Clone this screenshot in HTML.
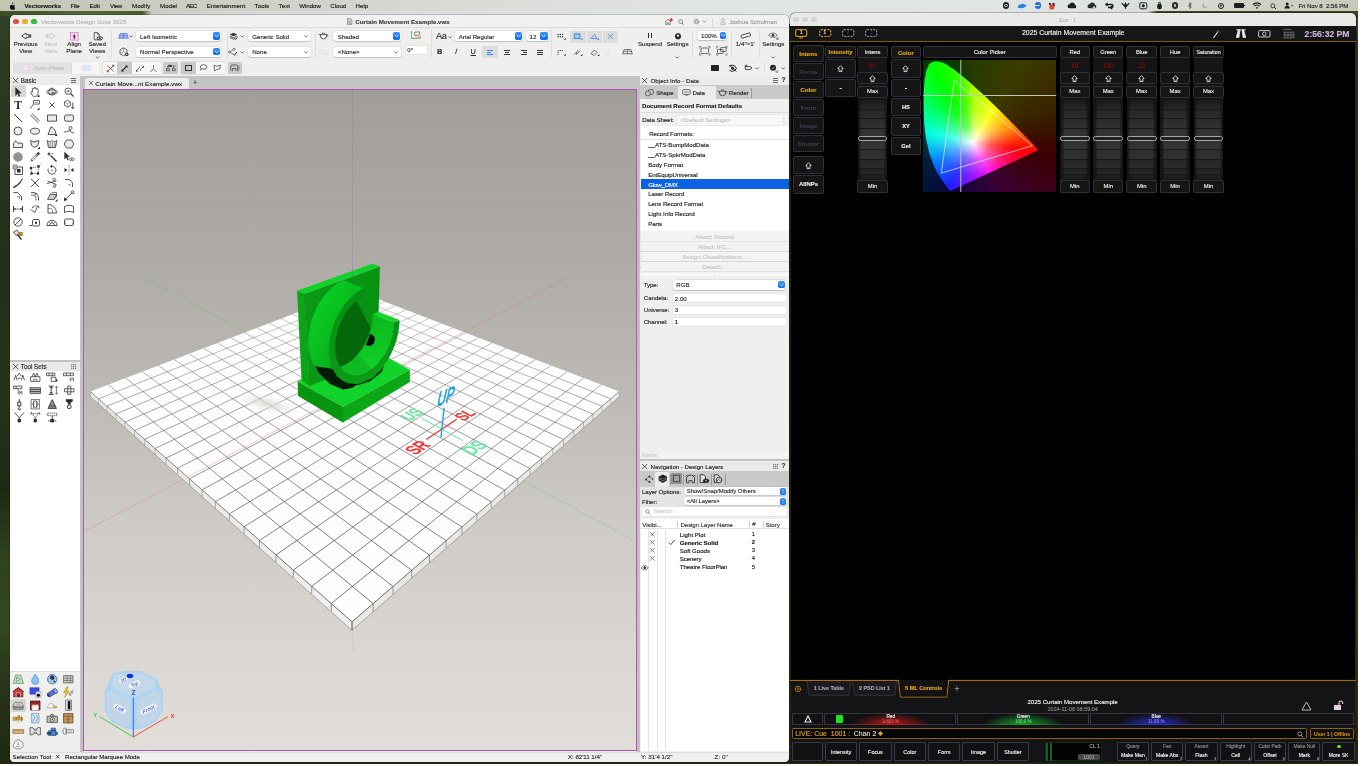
<!DOCTYPE html>
<html><head><meta charset="utf-8"><title>Vectorworks + Eos</title>
<style>
html,body{margin:0;padding:0;background:#fff;}
body{width:1362px;height:766px;overflow:hidden;font-family:"Liberation Sans",sans-serif;}
#root{will-change:transform;transform:translateZ(0);position:absolute;left:0;top:0;width:1358px;height:764px;overflow:hidden;background:#3a4524;}
#root div,#root svg{position:absolute;box-sizing:border-box;}
#root svg{overflow:visible;}
.t{white-space:nowrap;-webkit-text-stroke:.13px currentColor;}
#wall{left:0;top:0;width:1358px;height:764px;
 background:linear-gradient(180deg,#33422a 0,#2d3a21 8%,#283520 20%,#222e18 35%,#26331a 50%,#1f2a14 64%,#2f421d 73%,#34481f 82%,#27331a 90%,#20290f 100%);}
.sel{background:#fff;border-radius:2.4px;box-shadow:0 0 0 .4px rgba(0,0,0,.08),0 .4px .8px rgba(0,0,0,.16);}
.blu{background:linear-gradient(#3a8ffb,#0b6df2);border-radius:1.8px;}

</style></head>
<body>
<div id="root">
<div id="wall"></div>
<div style="left:0.00px;top:0.00px;width:1358.00px;height:11.20px;background:linear-gradient(90deg,#c3c8b6 0,#c9ccbf 12%,#d9dbd6 35%,#e2e6e6 55%,#dfe3e3 80%,#cfd3c6 92%,#c6caba 100%);"></div>
<svg style="left:9.00px;top:1.60px;" width="7" height="8" viewBox="0 0 7 8"><path d="M4.9 2.1c.5-.6.4-1.3.4-1.6-.5 0-1.1.3-1.4.7-.3.4-.5 1-.4 1.5.5 0 1-.2 1.4-.6zM6.5 5.9c0-1 .8-1.5.9-1.5-.5-.7-1.200-.8-1.500-.8-.6-.1-1.200.4-1.500.4s-.8-.4-1.400-.4C2.300 3.600 1.600 4 1.300 4.600c-.7 1.200-.2 3 .5 4 .3.500.7 1 1.300 1 .5 0 .7-.3 1.300-.3s.8.300 1.300.300 1-.5 1.300-1c.4-.6.500-1.100.6-1.200-.1 0-1.100-.4-1.100-1.500z" fill="#111" transform="scale(.82)"/></svg>
<div class="t" style="font-size:6.1px;line-height:7.32px;color:#111;font-weight:bold;left:24.60px;top:1.94px;letter-spacing:0.022px;">Vectorworks</div>
<div class="t" style="font-size:6.15px;line-height:7.38px;color:#151515;left:70.60px;top:1.91px;letter-spacing:-0.270px;">File</div>
<div class="t" style="font-size:6.15px;line-height:7.38px;color:#151515;left:89.50px;top:1.91px;letter-spacing:-0.032px;">Edit</div>
<div class="t" style="font-size:6.15px;line-height:7.38px;color:#151515;left:110.00px;top:1.91px;letter-spacing:-0.340px;">View</div>
<div class="t" style="font-size:6.15px;line-height:7.38px;color:#151515;left:132.00px;top:1.91px;letter-spacing:0.037px;">Modify</div>
<div class="t" style="font-size:6.15px;line-height:7.38px;color:#151515;left:160.00px;top:1.91px;letter-spacing:0.063px;">Model</div>
<div class="t" style="font-size:6.15px;line-height:7.38px;color:#151515;left:186.00px;top:1.91px;letter-spacing:-0.723px;">AEC</div>
<div class="t" style="font-size:6.15px;line-height:7.38px;color:#151515;left:206.70px;top:1.91px;letter-spacing:0.018px;">Entertainment</div>
<div class="t" style="font-size:6.15px;line-height:7.38px;color:#151515;left:254.60px;top:1.91px;letter-spacing:0.061px;">Tools</div>
<div class="t" style="font-size:6.15px;line-height:7.38px;color:#151515;left:278.60px;top:1.91px;letter-spacing:0.040px;">Text</div>
<div class="t" style="font-size:6.15px;line-height:7.38px;color:#151515;left:299.20px;top:1.91px;letter-spacing:-0.015px;">Window</div>
<div class="t" style="font-size:6.15px;line-height:7.38px;color:#151515;left:330.30px;top:1.91px;letter-spacing:-0.042px;">Cloud</div>
<div class="t" style="font-size:6.15px;line-height:7.38px;color:#151515;left:355.60px;top:1.91px;letter-spacing:-0.016px;">Help</div>
<div class="t" style="font-size:6.15px;line-height:7.38px;color:#222;left:1298.40px;top:1.91px;white-space:pre;letter-spacing:-0.074px;">Fri Nov 8  2:56 PM</div>
<div style="left:0.00px;top:11.20px;width:1358.00px;height:5.00px;background:linear-gradient(90deg,#3e4d25 0,#55683a 6%,#4a5c2c 10.5%,#c9ccc6 11.2%,#d9dcdb 20%,#dfe4e6 50%,#d8dcdc 84.5%,#3c4420 85.2%,#3a401c 100%);"></div>
<div style="left:160.00px;top:16.00px;width:980.00px;height:8.00px;background:linear-gradient(90deg,#d9dcdb,#dfe4e6 40%,#d8dcdc);"></div>
<div style="left:1002.80px;top:2.40px;width:6.40px;height:6.40px;background:#1d1d1d;border-radius:50%;"></div>
<div style="left:1004.40px;top:4.00px;width:3.20px;height:3.20px;border:.8px solid #ddd;border-radius:50%;"></div>
<svg style="left:1017.00px;top:2.50px;" width="10" height="6" viewBox="0 0 10 6"><path d="M.5 4.200C2 .5 6.500 0 9.500 2.500 8 5.500 3 6 .5 4.200z" fill="#1687e8"/></svg>
<div style="left:1034.50px;top:2.40px;width:6.40px;height:6.40px;background:#1f6fe0;border-radius:50%;"></div>
<div style="left:1035.20px;top:4.90px;width:5.00px;height:1.40px;background:#dbe8ff;border-radius:1px;"></div>
<svg style="left:1048.00px;top:1.80px;" width="8" height="8" viewBox="0 0 8 8"><circle cx="2" cy="2" r="1.200" fill="#333"/><circle cx="5.500" cy="2" r="1.200" fill="#333"/><circle cx="3.800" cy="5" r="2.600" fill="#e8482c"/><circle cx="5.800" cy="3.200" r="1" fill="#333"/></svg>
<svg style="left:1067.00px;top:2.40px;" width="10" height="7" viewBox="0 0 10 7"><path d="M2.400 6.300a2 2 0 0 1 .2-4A2.800 2.800 0 0 1 8 2.800a1.800 1.800 0 0 1-.2 3.500z" fill="#1d1d1d"/></svg>
<svg style="left:1087.00px;top:2.40px;" width="10" height="7" viewBox="0 0 10 7"><path d="M2.400 6.300a2 2 0 0 1 .2-4A2.800 2.800 0 0 1 8 2.800a1.800 1.800 0 0 1-.2 3.500z" fill="#2a2a2a"/><circle cx="7" cy="5.500" r="1.300" fill="#c9ccc6"/></svg>
<svg style="left:1105.00px;top:2.20px;" width="9" height="7" viewBox="0 0 9 7"><path d="M1 2.500h5.500a1.500 1.500 0 0 1 0 3H3M2.500 1l-1.500 1.500 1.500 1.500M6 4l1.500 1.500L6 7" stroke="#1d1d1d" stroke-width="1.300" fill="none"/></svg>
<svg style="left:1120.50px;top:2.20px;" width="9" height="7" viewBox="0 0 9 7"><path d="M.8 1.200l2.500 2.800L4.500 1.500 5.700 4 8.200 1.200M4.500 1.500V6.800" stroke="#1d1d1d" stroke-width="1.200" fill="none"/></svg>
<svg style="left:1138.50px;top:2.00px;" width="9" height="8" viewBox="0 0 9 8"><rect x=".8" y=".8" width="7" height="6" rx="1.200" stroke="#1d1d1d" stroke-width="1" fill="none"/><circle cx="4.300" cy="3.800" r="1.500" fill="#1d1d1d"/></svg>
<svg style="left:1156.00px;top:1.80px;" width="7" height="8" viewBox="0 0 7 8"><rect x="1.200" y="1.800" width="4.600" height="5.400" rx="2" fill="#1d1d1d"/><path d="M2.500 1.800V.6h2v1.200" stroke="#1d1d1d" fill="none" stroke-width=".8"/></svg>
<div style="left:1171.80px;top:2.40px;width:6.40px;height:6.40px;background:#2a2a2a;border-radius:50%;"></div>
<div style="left:1173.60px;top:4.20px;width:2.80px;height:2.80px;background:#c9ccc6;border-radius:50%;"></div>
<svg style="left:1187.50px;top:2.20px;" width="4" height="7" viewBox="0 0 4 7"><path d="M.5 2l2.800 3L2 6.500V.5L3.300 2 .5 5" stroke="#1d1d1d" stroke-width=".6" fill="none"/></svg>
<svg style="left:1202.00px;top:2.40px;" width="6" height="6" viewBox="0 0 6 6"><path d="M4.500 4.800A2.600 2.600 0 0 1 2 1a2.700 2.700 0 1 0 3.500 3.300z" fill="#a9ada0"/></svg>
<div style="left:1217.90px;top:2.50px;width:6.20px;height:6.20px;border:1px solid #1d1d1d;border-radius:50%;"></div>
<svg style="left:1219.60px;top:3.80px;" width="3" height="3.4" viewBox="0 0 3 3.4"><path d="M.4.300L2.600 1.700.4 3.100z" fill="#1d1d1d"/></svg>
<div style="left:1233.60px;top:3.40px;width:10.00px;height:4.60px;background:#1d1d1d;border-radius:1.300px;"></div>
<div style="left:1243.90px;top:4.90px;width:0.80px;height:1.60px;background:#1d1d1d;"></div>
<svg style="left:1252.00px;top:2.30px;" width="10" height="7" viewBox="0 0 10 7"><path d="M.8 2.600a6 6 0 0 1 8.400 0M2.300 4.200a3.800 3.800 0 0 1 5.400 0" stroke="#1d1d1d" stroke-width="1.100" fill="none"/><circle cx="5" cy="5.800" r=".9" fill="#1d1d1d"/></svg>
<svg style="left:1269.50px;top:2.50px;" width="7" height="7" viewBox="0 0 7 7"><circle cx="2.800" cy="2.800" r="2" stroke="#1d1d1d" stroke-width=".8" fill="none"/><path d="M4.300 4.300L6 6" stroke="#1d1d1d" stroke-width=".9"/></svg>
<svg style="left:1283.50px;top:2.20px;" width="10" height="7" viewBox="0 0 10 7"><circle cx="3.200" cy="1.900" r="1.500" fill="#1d1d1d"/><path d="M.6 6.400a2.600 2.600 0 0 1 5.200 0z" fill="#1d1d1d"/><path d="M7 3.200h2.400L8.200 4.600z" fill="#1d1d1d"/></svg>
<div id="vw" style="left:10.2px;top:15.3px;width:778.8px;height:746.7px;border-radius:5px 5px 4.500px 4.500px;overflow:hidden;background:#efefed;box-shadow:0 0 0 .5px rgba(0,0,0,.35);"></div>
<div style="left:10.20px;top:15.30px;width:778.80px;height:12.90px;background:#f0f0ee;border-radius:5px 5px 0 0;border-bottom:.6px solid #dcdcda;"></div>
<div style="left:13.20px;top:18.50px;width:5.80px;height:5.80px;background:#f2544d;border-radius:50%;box-shadow:0 0 0 .3px rgba(0,0,0,.18) inset;"></div>
<div style="left:22.30px;top:18.50px;width:5.80px;height:5.80px;background:#f6b42e;border-radius:50%;box-shadow:0 0 0 .3px rgba(0,0,0,.18) inset;"></div>
<div style="left:31.40px;top:18.50px;width:5.80px;height:5.80px;background:#2dc43e;border-radius:50%;box-shadow:0 0 0 .3px rgba(0,0,0,.18) inset;"></div>
<div style="left:15.50px;top:20.80px;width:1.30px;height:1.30px;background:#7a1410;border-radius:50%;"></div>
<div class="t" style="font-size:6.15px;line-height:7.38px;color:#b4b4b2;left:40.90px;top:17.81px;letter-spacing:0.005px;">Vectorworks Design Suite 2025</div>
<svg style="left:346.60px;top:17.60px;" width="5.5" height="7" viewBox="0 0 5.5 7"><path d="M.5.5h3l1.500 1.500v4.500h-4.500z" fill="#cfcfcf" stroke="#777" stroke-width=".6"/><path d="M1.300 3h2.600M1.300 4.200h2.600M1.300 5.400h2.600" stroke="#777" stroke-width=".4"/></svg>
<div class="t" style="font-size:6.15px;line-height:7.38px;color:#2b2b2b;font-weight:bold;left:355.30px;top:17.81px;opacity:.92;letter-spacing:0.023px;">Curtain Movement Example.vwx</div>
<svg style="left:663.50px;top:17.80px;" width="9" height="7.5" viewBox="0 0 9 7.5"><path d="M1 4L4 1.300 7 4M1.800 3.500V6.500H3.300V4.800H4.700V6.500H6.200V3.500" stroke="#666" stroke-width=".7" fill="none"/><circle cx="7.200" cy="1.700" r="1.500" fill="#e8252a"/></svg>
<svg style="left:678.00px;top:18.50px;" width="7" height="7" viewBox="0 0 7 7"><circle cx="2.600" cy="2.600" r="1.900" stroke="#666" stroke-width=".7" fill="none"/><path d="M4 4L5.800 5.800" stroke="#666" stroke-width=".8"/></svg>
<svg style="left:692.50px;top:18.00px;" width="7" height="7" viewBox="0 0 7 7"><circle cx="3.500" cy="3.500" r="2.300" stroke="#666" stroke-width="1" fill="none" stroke-dasharray="1.200 .6"/><circle cx="3.500" cy="3.500" r="1" stroke="#666" stroke-width=".6" fill="none"/></svg>
<svg style="left:701.50px;top:20.30px;" width="5" height="3" viewBox="0 0 5 3"><path d="M.8.500L2.500 2.200 4.200.5" stroke="#666" stroke-width=".7" fill="none"/></svg>
<div style="left:712.30px;top:17.50px;width:0.50px;height:9.00px;background:#dcdcda;"></div>
<svg style="left:719.80px;top:18.00px;" width="6" height="7" viewBox="0 0 6 7"><circle cx="3" cy="1.900" r="1.400" stroke="#999" stroke-width=".6" fill="none"/><path d="M.6 6.300a2.400 2.400 0 0 1 4.800 0z" stroke="#999" stroke-width=".6" fill="none"/></svg>
<div class="t" style="font-size:6.15px;line-height:7.38px;color:#9c9c9a;left:729.00px;top:17.81px;letter-spacing:-0.063px;">Joshua Schulman</div>
<svg style="left:19.50px;top:31.70px;" width="12" height="8" viewBox="0 0 12 8"><path d="M6 1L1.800 4 6 7V5.300H9V2.700H6zM9.200 2.700h.7v2.600h-.7M10.300 2.700h.5v2.600h-.5" stroke="#2a2a2a" stroke-width=".8" fill="none" stroke-linejoin="round"/></svg>
<div class="t" style="font-size:6.15px;line-height:7.38px;color:#2a2a2a;left:-4.40px;width:60px;text-align:center;top:40.01px;">Previous</div>
<div class="t" style="font-size:6.15px;line-height:7.38px;color:#2a2a2a;left:-4.40px;width:60px;text-align:center;top:47.26px;">View</div>
<svg style="left:45.00px;top:31.70px;" width="12" height="8" viewBox="0 0 12 8"><path d="M6 1L10.200 4 6 7V5.300H3V2.700H6zM2.800 2.700h-.7v2.600h.7M1.700 2.700h-.5v2.600h.5" stroke="#c4c4c2" stroke-width=".8" fill="none" stroke-linejoin="round"/></svg>
<div class="t" style="font-size:6.15px;line-height:7.38px;color:#c4c4c2;left:21.00px;width:60px;text-align:center;top:40.01px;">Next</div>
<div class="t" style="font-size:6.15px;line-height:7.38px;color:#c4c4c2;left:21.00px;width:60px;text-align:center;top:47.26px;">View</div>
<svg style="left:70.00px;top:31.80px;" width="9" height="9" viewBox="0 0 9 9"><rect x=".5" y=".5" width="7.600" height="7.600" fill="#fbe3f5" stroke="#e36bd0" stroke-width=".7"/><path d="M4.300.5v7.600M.5 3h7.600" stroke="#e36bd0" stroke-width=".5"/><path d="M4.300 2.200L2.900 5.400h2.800z" fill="#222"/><path d="M4.300 5v2.300" stroke="#222" stroke-width=".7"/></svg>
<div class="t" style="font-size:6.15px;line-height:7.38px;color:#2a2a2a;left:44.20px;width:60px;text-align:center;top:40.01px;">Align</div>
<div class="t" style="font-size:6.15px;line-height:7.38px;color:#2a2a2a;left:44.20px;width:60px;text-align:center;top:47.26px;">Plane</div>
<svg style="left:92.50px;top:31.80px;" width="10" height="9" viewBox="0 0 10 9"><path d="M1.200.6h3.300l1.700 1.700v5.500H1.200z" fill="none" stroke="#2a2a2a" stroke-width=".7"/><path d="M4.500.6v1.700h1.700" fill="none" stroke="#2a2a2a" stroke-width=".6"/><ellipse cx="6.800" cy="6.300" rx="2.700" ry="1.700" fill="#efefed" stroke="#2a2a2a" stroke-width=".9"/><circle cx="6.800" cy="6.300" r="1" fill="#2a2a2a"/></svg>
<div class="t" style="font-size:6.15px;line-height:7.38px;color:#2a2a2a;left:67.20px;width:60px;text-align:center;top:40.01px;">Saved</div>
<div class="t" style="font-size:6.15px;line-height:7.38px;color:#2a2a2a;left:67.20px;width:60px;text-align:center;top:47.26px;">Views</div>
<svg style="left:94.70px;top:55.80px;" width="5" height="3" viewBox="0 0 5 3"><path d="M.8.500L2.500 2.200 4.200.5" stroke="#333" stroke-width=".7" fill="none"/></svg>
<div style="left:111.30px;top:30.00px;width:0.50px;height:28.00px;background:#dededc;"></div>
<svg style="left:117.50px;top:33.00px;" width="11" height="6" viewBox="0 0 11 6"><path d="M2.200.6h6.600L10.400 5.200H.6z" fill="#aab6f5" stroke="#4a62e0" stroke-width=".7"/><path d="M5.500.6v4.600M1.500 2.800h8" stroke="#4a62e0" stroke-width=".5"/></svg>
<svg style="left:129.10px;top:35.40px;" width="4.4" height="3" viewBox="0 0 4.4 3"><path d="M.6.500L2.200 2.100 3.800.5" stroke="#333" stroke-width=".7" fill="none"/></svg>
<div class="sel" style="left:135.60px;top:31.20px;width:85.70px;height:9.80px;"></div>
<div class="t" style="font-size:6.15px;line-height:7.38px;color:#2a2a2a;left:140.10px;top:32.51px;">Left Isometric</div>
<div class="blu" style="left:212.70px;top:32.40px;width:7.40px;height:7.40px;"></div>
<svg style="left:212.70px;top:32.40px;" width="7.4" height="7.4" viewBox="0 0 7.4 7.4"><path d="M2.07 3.11L3.70 4.74 5.33 3.11" stroke="#fff" stroke-width=".9" fill="none" stroke-linecap="round"/></svg>
<svg style="left:119.20px;top:47.20px;" width="11" height="10" viewBox="0 0 11 10"><path d="M4.500.8L8 2.800V6.800L4.500 8.800 1 6.800V2.800z" fill="none" stroke="#333" stroke-width=".7"/><path d="M4.500.8V4.800L1 6.800M4.500 4.800L8 6.800" stroke="#333" stroke-width=".4" fill="none"/><circle cx="7.800" cy="7.400" r="1.700" fill="#333"/><circle cx="7.800" cy="7.400" r=".6" fill="#efefed"/></svg>
<div class="sel" style="left:135.60px;top:46.80px;width:85.70px;height:9.80px;"></div>
<div class="t" style="font-size:6.15px;line-height:7.38px;color:#2a2a2a;left:140.10px;top:48.11px;">Normal Perspective</div>
<div class="blu" style="left:212.70px;top:48.00px;width:7.40px;height:7.40px;"></div>
<svg style="left:212.70px;top:48.00px;" width="7.4" height="7.4" viewBox="0 0 7.4 7.4"><path d="M2.07 3.11L3.70 4.74 5.33 3.11" stroke="#fff" stroke-width=".9" fill="none" stroke-linecap="round"/></svg>
<div style="left:226.50px;top:30.00px;width:0.50px;height:28.00px;background:#dededc;"></div>
<svg style="left:228.60px;top:32.20px;" width="9" height="8" viewBox="0 0 9 8"><path d="M4.500.8L8.200 2.500 4.500 4.200.8 2.500z" fill="#333"/><path d="M.8 4L4.500 5.700 8.200 4M.8 5.500L4.500 7.200 6 6.500" stroke="#333" stroke-width=".8" fill="none"/><path d="M5.500 6l1.200 1.500L8.600 4.800" stroke="#333" stroke-width=".9" fill="none"/></svg>
<svg style="left:240.10px;top:35.40px;" width="4.4" height="3" viewBox="0 0 4.4 3"><path d="M.6.500L2.200 2.100 3.800.5" stroke="#333" stroke-width=".7" fill="none"/></svg>
<div class="sel" style="left:247.70px;top:31.20px;width:63.50px;height:9.80px;"></div>
<div class="t" style="font-size:6.15px;line-height:7.38px;color:#2a2a2a;left:252.20px;top:32.51px;">Generic Solid</div>
<svg style="left:303.80px;top:34.90px;" width="4.4" height="3" viewBox="0 0 4.4 3"><path d="M.6.500L2.200 2.100 3.800.5" stroke="#333" stroke-width=".7" fill="none"/></svg>
<svg style="left:228.00px;top:47.50px;" width="10" height="8" viewBox="0 0 10 8"><circle cx="1.600" cy="4" r="1" fill="none" stroke="#333" stroke-width=".6"/><circle cx="6" cy="1.300" r="1" fill="none" stroke="#333" stroke-width=".6"/><path d="M2.500 3.500L5 1.800M2.500 4.500L5 6" stroke="#333" stroke-width=".6"/><path d="M5.200 5.800l1.300 1.500L8.800 4" stroke="#333" stroke-width="1" fill="none"/></svg>
<svg style="left:240.10px;top:50.90px;" width="4.4" height="3" viewBox="0 0 4.4 3"><path d="M.6.500L2.200 2.100 3.800.5" stroke="#333" stroke-width=".7" fill="none"/></svg>
<div class="sel" style="left:247.70px;top:46.80px;width:63.50px;height:9.80px;"></div>
<div class="t" style="font-size:6.15px;line-height:7.38px;color:#2a2a2a;left:252.20px;top:48.11px;">None</div>
<svg style="left:303.80px;top:50.50px;" width="4.4" height="3" viewBox="0 0 4.4 3"><path d="M.6.500L2.200 2.100 3.800.5" stroke="#333" stroke-width=".7" fill="none"/></svg>
<div style="left:315.20px;top:30.00px;width:0.50px;height:28.00px;background:#dededc;"></div>
<svg style="left:317.50px;top:32.20px;" width="11" height="8" viewBox="0 0 11 8"><path d="M2.500 2.400h6v1.600a3 3 0 0 1-6 0z" fill="none" stroke="#333" stroke-width=".8"/><path d="M2.500 3L.6 2.200M8.500 3c1.800-.8 2 .1 .6 1.700M4 1.300h3" stroke="#333" stroke-width=".7" fill="none"/></svg>
<div class="sel" style="left:333.30px;top:31.20px;width:67.90px;height:9.80px;"></div>
<div class="t" style="font-size:6.15px;line-height:7.38px;color:#2a2a2a;left:337.80px;top:32.51px;">Shaded</div>
<div class="blu" style="left:392.60px;top:32.40px;width:7.40px;height:7.40px;"></div>
<svg style="left:392.60px;top:32.40px;" width="7.4" height="7.4" viewBox="0 0 7.4 7.4"><path d="M2.07 3.11L3.70 4.74 5.33 3.11" stroke="#fff" stroke-width=".9" fill="none" stroke-linecap="round"/></svg>
<svg style="left:317.50px;top:48.50px;" width="11" height="7" viewBox="0 0 11 7"><circle cx="2.600" cy="3.600" r="1.700" fill="none" stroke="#d6d6d4" stroke-width=".6"/><circle cx="6.600" cy="3.600" r="1.700" fill="none" stroke="#d6d6d4" stroke-width=".6"/><path d="M2 1L3.500.4M7.200 1L5.700.4" stroke="#d6d6d4" stroke-width=".5"/><circle cx="9.500" cy="5.600" r="1.100" fill="#d6d6d4"/></svg>
<div class="sel" style="left:333.30px;top:46.80px;width:67.90px;height:9.80px;"></div>
<div class="t" style="font-size:6.15px;line-height:7.38px;color:#2a2a2a;left:337.80px;top:48.11px;">&lt;None&gt;</div>
<svg style="left:393.80px;top:50.50px;" width="4.4" height="3" viewBox="0 0 4.4 3"><path d="M.6.500L2.200 2.100 3.800.5" stroke="#333" stroke-width=".7" fill="none"/></svg>
<svg style="left:410.00px;top:30.50px;" width="12" height="9" viewBox="0 0 12 9"><path d="M1.500 1V7.500H10.500" stroke="#3aa657" stroke-width=".7" fill="none"/><path d="M1.500 7.500L10 6" stroke="#e0392e" stroke-width=".7" stroke-dasharray="1.200 .8"/><rect x="4.600" y="1" width="5" height="3.400" rx=".5" fill="none" stroke="#444" stroke-width=".6" transform="rotate(-8 7 3)"/><circle cx="1.500" cy="1" r=".7" fill="#3aa657"/><circle cx="10.300" cy="6" r=".7" fill="#e0392e"/></svg>
<div style="left:405.60px;top:46.00px;width:21.50px;height:8.30px;background:#fff;box-shadow:0 0 0 .4px rgba(0,0,0,.10);"></div>
<div class="t" style="font-size:6.15px;line-height:7.38px;color:#2a2a2a;left:407.30px;top:46.31px;">0°</div>
<div style="left:430.50px;top:30.00px;width:0.50px;height:28.00px;background:#dededc;"></div>
<div class="t" style="font-size:9.3px;line-height:11.16px;color:#2a2a2a;left:436.00px;top:30.82px;letter-spacing:-.45px;">Aa</div>
<svg style="left:447.60px;top:35.60px;" width="4.4" height="3" viewBox="0 0 4.4 3"><path d="M.6.500L2.200 2.100 3.800.5" stroke="#333" stroke-width=".7" fill="none"/></svg>
<div class="sel" style="left:455.20px;top:31.20px;width:68.10px;height:9.80px;"></div>
<div class="t" style="font-size:6.15px;line-height:7.38px;color:#2a2a2a;left:458.70px;top:32.51px;">Arial Regular</div>
<div class="blu" style="left:514.70px;top:32.40px;width:7.40px;height:7.40px;"></div>
<svg style="left:514.70px;top:32.40px;" width="7.4" height="7.4" viewBox="0 0 7.4 7.4"><path d="M2.07 3.11L3.70 4.74 5.33 3.11" stroke="#fff" stroke-width=".9" fill="none" stroke-linecap="round"/></svg>
<div class="sel" style="left:526.30px;top:31.20px;width:22.50px;height:9.80px;"></div>
<div class="t" style="font-size:6.15px;line-height:7.38px;color:#2a2a2a;left:529.60px;top:32.51px;">12</div>
<div class="blu" style="left:540.20px;top:32.40px;width:7.40px;height:7.40px;"></div>
<svg style="left:540.20px;top:32.40px;" width="7.4" height="7.4" viewBox="0 0 7.4 7.4"><path d="M2.07 3.11L3.70 4.74 5.33 3.11" stroke="#fff" stroke-width=".9" fill="none" stroke-linecap="round"/></svg>
<div class="t" style="font-size:7.4px;line-height:8.88px;color:#2a2a2a;font-weight:bold;left:434.60px;width:10px;text-align:center;top:47.76px;">B</div>
<div class="t" style="font-size:7.4px;line-height:8.88px;color:#2a2a2a;font-style:italic;left:451.20px;width:10px;text-align:center;top:47.76px;transform:skewX(-8deg);">I</div>
<div class="t" style="font-size:7.4px;line-height:8.88px;color:#2a2a2a;left:468.20px;width:10px;text-align:center;top:47.76px;text-decoration:underline;">U</div>
<div style="left:482.20px;top:45.80px;width:16.00px;height:12.20px;background:#dcdcda;border-radius:1.500px;"></div>
<div style="left:487.00px;top:49.60px;width:6.40px;height:0.80px;background:#2f86f6;"></div>
<div style="left:487.00px;top:51.70px;width:4.40px;height:0.80px;background:#2f86f6;"></div>
<div style="left:487.00px;top:53.80px;width:6.40px;height:0.80px;background:#2f86f6;"></div>
<div style="left:503.80px;top:49.60px;width:6.40px;height:0.80px;background:#333;"></div>
<div style="left:505.10px;top:51.70px;width:3.80px;height:0.80px;background:#333;"></div>
<div style="left:503.80px;top:53.80px;width:6.40px;height:0.80px;background:#333;"></div>
<div style="left:520.60px;top:49.60px;width:6.40px;height:0.80px;background:#333;"></div>
<div style="left:522.60px;top:51.70px;width:4.40px;height:0.80px;background:#333;"></div>
<div style="left:520.60px;top:53.80px;width:6.40px;height:0.80px;background:#333;"></div>
<div style="left:537.00px;top:49.60px;width:6.40px;height:0.80px;background:#333;"></div>
<div style="left:537.00px;top:51.70px;width:6.40px;height:0.80px;background:#333;"></div>
<div style="left:537.00px;top:53.80px;width:6.40px;height:0.80px;background:#333;"></div>
<div style="left:550.50px;top:30.00px;width:0.50px;height:28.00px;background:#dededc;"></div>
<div style="left:569.50px;top:30.50px;width:16.30px;height:12.20px;background:#dcdcda;border-radius:1.500px;"></div>
<div style="left:586.80px;top:30.50px;width:15.30px;height:12.20px;background:#dcdcda;border-radius:1.500px;"></div>
<div style="left:603.20px;top:30.50px;width:15.30px;height:12.20px;background:#dcdcda;border-radius:1.500px;"></div>
<svg style="left:556.50px;top:33.00px;" width="10" height="8" viewBox="0 0 10 8"><g fill="#333"><circle cx="1.200" cy="1.500" r=".7"/><circle cx="3.400" cy="1.500" r=".7"/><circle cx="5.600" cy="1.500" r=".7"/><circle cx="1.200" cy="3.700" r=".7"/><circle cx="3.400" cy="3.700" r=".7"/><circle cx="5.600" cy="3.700" r=".7"/><path d="M8.800 4.800v2h-2z"/></g></svg>
<svg style="left:573.00px;top:32.80px;" width="11" height="8" viewBox="0 0 11 8"><rect x="1.300" y="1" width="5.600" height="4.400" fill="none" stroke="#2f86f6" stroke-width=".9"/><path d="M.5 1h7.200M.5 5.400h7.200M3 1v4.400M5.200 1v4.400" stroke="#2f86f6" stroke-width=".5"/><path d="M9.400 5v2h-2z" fill="#2f86f6"/></svg>
<svg style="left:590.00px;top:33.00px;" width="11" height="8" viewBox="0 0 11 8"><path d="M1 5.500h6L4.500 1.500 1 5.500" fill="none" stroke="#2f86f6" stroke-width=".8"/><path d="M9 5v2h-2z" fill="#2f86f6"/></svg>
<svg style="left:607.30px;top:33.20px;" width="8" height="7" viewBox="0 0 8 7"><path d="M1 .8L6 5.800M6 .8L1 5.800" stroke="#2f86f6" stroke-width=".8"/></svg>
<svg style="left:556.50px;top:48.50px;" width="10" height="8" viewBox="0 0 10 8"><path d="M1 6V1.500H6" stroke="#333" stroke-width=".8" fill="none" stroke-dasharray="1.400 .7"/><path d="M8.800 4.800v2h-2z" fill="#333"/></svg>
<svg style="left:572.50px;top:48.50px;" width="11" height="8" viewBox="0 0 11 8"><path d="M1 5.500L3 3.500 4.500 4.500 7 1.500" stroke="#333" stroke-width=".7" fill="none"/><path d="M4.800 1l-1.600 5" stroke="#333" stroke-width=".5"/><path d="M9.400 5v2h-2z" fill="#333"/></svg>
<svg style="left:589.50px;top:48.50px;" width="11" height="8" viewBox="0 0 11 8"><path d="M1 4.500L4.500 1 7 3.500 4 6.500z" fill="none" stroke="#333" stroke-width=".7"/><path d="M9.400 5v2h-2z" fill="#333"/></svg>
<svg style="left:606.00px;top:48.50px;" width="9" height="8" viewBox="0 0 9 8"><path d="M1 4.500L5 1M1 4.500L4 7" stroke="#cfcfcd" stroke-width=".7" fill="none"/></svg>
<svg style="left:621.50px;top:49.20px;" width="12" height="6" viewBox="0 0 12 6"><path d="M2.200.6h6.600L10.400 4.800H.6z" fill="none" stroke="#333" stroke-width=".7"/><path d="M5.500.6v4.200M1.400 2.600h8.200" stroke="#333" stroke-width=".5"/></svg>
<div style="left:647.80px;top:32.80px;width:1.30px;height:5.60px;background:#2a2a2a;"></div>
<div style="left:650.80px;top:32.80px;width:1.30px;height:5.60px;background:#2a2a2a;"></div>
<div class="t" style="font-size:6.15px;line-height:7.38px;color:#2a2a2a;left:620.00px;width:60px;text-align:center;top:40.01px;">Suspend</div>
<svg style="left:673.50px;top:32.20px;" width="8" height="8" viewBox="0 0 8 8"><path d="M4 .6l.9.900 1.200-.3.300 1.200 1.200.4-.4 1.200.9.900-.9.900.4 1.200-1.200.3-.3 1.200-1.200-.3-.9.900-.9-.9-1.200.3-.3-1.200-1.200-.3.300-1.200-.9-.9.900-.9-.3-1.200 1.200-.4.300-1.200 1.200.3z" fill="#2a2a2a" transform="scale(.82) translate(.9 .4)"/><circle cx="4" cy="3.700" r="1.100" fill="#efefed"/></svg>
<div class="t" style="font-size:6.15px;line-height:7.38px;color:#2a2a2a;left:647.50px;width:60px;text-align:center;top:40.01px;">Settings</div>
<svg style="left:675.30px;top:55.90px;" width="4.4" height="3" viewBox="0 0 4.4 3"><path d="M.6.500L2.200 2.100 3.800.5" stroke="#333" stroke-width=".7" fill="none"/></svg>
<div style="left:692.30px;top:30.00px;width:0.50px;height:28.00px;background:#dededc;"></div>
<div class="sel" style="left:696.80px;top:31.00px;width:30.50px;height:8.80px;"></div>
<div class="t" style="font-size:6.15px;line-height:7.38px;color:#2a2a2a;left:701.00px;top:31.81px;">100%</div>
<div class="blu" style="left:719.50px;top:32.10px;width:6.60px;height:6.60px;"></div>
<svg style="left:719.50px;top:32.10px;" width="6.599999999999997" height="6.599999999999997" viewBox="0 0 6.599999999999997 6.599999999999997"><path d="M1.85 2.77L3.30 4.22 4.75 2.77" stroke="#fff" stroke-width=".9" fill="none" stroke-linecap="round"/></svg>
<svg style="left:698.50px;top:45.50px;" width="12" height="10" viewBox="0 0 12 10"><rect x="2" y="2" width="7.600" height="5.600" rx="1" fill="none" stroke="#333" stroke-width=".7"/><path d="M.6 2.400V.6H2.400M9.200.6H11v1.800M11 7.200V9H9.200M2.400 9H.6V7.200" stroke="#333" stroke-width=".6" fill="none"/></svg>
<svg style="left:715.50px;top:45.50px;" width="12" height="10" viewBox="0 0 12 10"><rect x="1.500" y="3.500" width="5.600" height="4" rx=".6" fill="none" stroke="#333" stroke-width=".7"/><rect x="4.500" y="1.600" width="5.600" height="4" rx=".6" fill="none" stroke="#333" stroke-width=".7"/><path d="M.6 2.400V.6H2.400M9.200.6H11v1.800M11 7.200V9H9.200M2.400 9H.6V7.200" stroke="#333" stroke-width=".6" fill="none"/></svg>
<div style="left:731.30px;top:30.00px;width:0.50px;height:28.00px;background:#dededc;"></div>
<svg style="left:739.50px;top:31.80px;" width="12" height="7" viewBox="0 0 12 7"><rect x="1" y="2" width="9.600" height="3" rx=".6" fill="none" stroke="#333" stroke-width=".8" transform="rotate(-17 6 3.500)"/></svg>
<div class="t" style="font-size:6.15px;line-height:7.38px;color:#2a2a2a;left:725.30px;width:40px;text-align:center;top:40.01px;">1/4"=1'</div>
<div style="left:759.30px;top:30.00px;width:0.50px;height:28.00px;background:#dededc;"></div>
<svg style="left:767.50px;top:31.80px;" width="12" height="8" viewBox="0 0 12 8"><path d="M.8 3.200C2.500.4 7.500.4 9.200 3.200 7.500 6 2.500 6 .8 3.200z" fill="none" stroke="#333" stroke-width=".7"/><circle cx="5" cy="3.200" r="1.300" fill="#333"/><path d="M7.500 6.200h3.500M8.500 7.500h2" stroke="#333" stroke-width=".6"/></svg>
<div class="t" style="font-size:6.15px;line-height:7.38px;color:#2a2a2a;left:743.30px;width:60px;text-align:center;top:40.01px;">Settings</div>
<svg style="left:771.10px;top:55.90px;" width="4.4" height="3" viewBox="0 0 4.4 3"><path d="M.6.500L2.200 2.100 3.800.5" stroke="#333" stroke-width=".7" fill="none"/></svg>
<div style="left:12.80px;top:61.80px;width:59.40px;height:12.40px;background:#e2e2e0;border-radius:1.500px 0 0 1.500px;"></div>
<div style="left:72.20px;top:61.80px;width:27.00px;height:12.40px;background:#f5f5f3;border-radius:0 1.500px 1.500px 0;box-shadow:0 0 0 .4px rgba(0,0,0,.06);"></div>
<div style="left:21.80px;top:64.30px;width:7.20px;height:7.20px;background:#f1e6ef;border:.6px solid #eccfe6;"></div>
<div class="t" style="font-size:6.15px;line-height:7.38px;color:#bdbdbb;left:34.30px;top:64.41px;letter-spacing:-0.047px;">Auto-Plane</div>
<svg style="left:80.50px;top:65.30px;" width="11" height="6" viewBox="0 0 11 6"><path d="M2.200.6h6.600L10.400 5.200H.6z" fill="#e4e7fa" stroke="#cdd3f5" stroke-width=".6"/></svg>
<div style="left:102.80px;top:61.80px;width:57.80px;height:12.40px;background:#f7f7f5;border-radius:1.500px;box-shadow:0 0 0 .4px rgba(0,0,0,.13);"></div>
<div style="left:117.30px;top:61.80px;width:14.30px;height:12.40px;background:#c9c9c7;"></div>
<svg style="left:105.50px;top:63.60px;" width="9" height="9" viewBox="0 0 9 9"><path d="M1.500 1.500L7.500 7.500" stroke="#e0302a" stroke-width=".9"/><path d="M7.500 1.500L1.500 7.500" stroke="#333" stroke-width=".8"/><path d="M6 1.200h1.800V3M3 7.800H1.200V6" stroke="#333" stroke-width=".7" fill="none"/></svg>
<svg style="left:120.00px;top:63.60px;" width="9" height="9" viewBox="0 0 9 9"><path d="M2 7L7 2" stroke="#222" stroke-width="1.100"/><path d="M5.200 1.500h2.300v2.300zM3.800 7.500H1.500V5.200z" fill="#222"/></svg>
<svg style="left:134.50px;top:63.60px;" width="10" height="9" viewBox="0 0 10 9"><path d="M1.500 6.500L4.500 3.500M5.500 5.500L8.500 2.500" stroke="#222" stroke-width=".9" stroke-dasharray="1.300 .7"/><path d="M1 5.500v2h2zM9 1.500v2h-2zM3.800 2.800l1.200-.4-.4 1.200zM6.200 6.200l-1.200.4.400-1.200z" fill="#222"/></svg>
<svg style="left:149.00px;top:63.60px;" width="9" height="9" viewBox="0 0 9 9"><path d="M4.500 1V5.200" stroke="#2f86f6" stroke-width=".9"/><path d="M4.500 5.200L1.200 7.600" stroke="#e0302a" stroke-width=".9"/><path d="M4.500 5.200L7.800 7.600" stroke="#30a850" stroke-width=".9"/></svg>
<div style="left:163.40px;top:61.80px;width:14.30px;height:12.40px;background:#c9c9c7;border-radius:1.500px;"></div>
<svg style="left:165.50px;top:64.20px;" width="10" height="8" viewBox="0 0 10 8"><rect x="2.500" y=".8" width="3" height="2" fill="#333"/><rect x=".6" y="4.800" width="2.600" height="2" fill="none" stroke="#333" stroke-width=".6"/><rect x="6.500" y="4.800" width="2.600" height="2" fill="none" stroke="#333" stroke-width=".6"/><path d="M1.800 4.800V2h5.900v2.800M8.800 1v1.500" stroke="#333" stroke-width=".6" fill="none"/></svg>
<div style="left:181.20px;top:61.80px;width:43.80px;height:12.40px;background:#f7f7f5;border-radius:1.500px;box-shadow:0 0 0 .4px rgba(0,0,0,.13);"></div>
<div style="left:181.20px;top:61.80px;width:14.50px;height:12.40px;background:#c9c9c7;border-radius:1.500px 0 0 1.500px;"></div>
<div style="left:184.80px;top:65.20px;width:7.20px;height:5.40px;border:.8px solid #333;"></div>
<svg style="left:198.50px;top:64.30px;" width="9" height="8" viewBox="0 0 9 8"><ellipse cx="4.600" cy="3" rx="3.400" ry="2.300" fill="none" stroke="#333" stroke-width=".7"/><path d="M2.200 4.600L1.200 6.800" stroke="#333" stroke-width=".7"/></svg>
<svg style="left:213.00px;top:64.00px;" width="9" height="8" viewBox="0 0 9 8"><path d="M1 1.500l3 .8 3.500-1.300-.8 4-3 .5L1.500 7z" fill="none" stroke="#333" stroke-width=".7"/></svg>
<div style="left:228.00px;top:61.80px;width:14.30px;height:12.40px;background:#c9c9c7;border-radius:1.500px;"></div>
<svg style="left:230.00px;top:64.20px;" width="10" height="8" viewBox="0 0 10 8"><path d="M.8 7V2.500a1.500 1.500 0 0 1 1.500-1.500h4a1.500 1.500 0 0 1 1.500 1.500V7M2.600 7V4.500h3.400V7" fill="none" stroke="#444" stroke-width=".8"/><path d="M9 1.500v5" stroke="#444" stroke-width=".7" stroke-dasharray="1 .7"/></svg>
<div style="left:710.80px;top:65.30px;width:8.00px;height:5.40px;background:#222;border-radius:.5px;"></div>
<svg style="left:727.50px;top:64.00px;" width="10" height="8" viewBox="0 0 10 8"><path d="M1.500 2a4 3 0 1 1 0 4.500" fill="none" stroke="#222" stroke-width="1"/><circle cx="4.600" cy="4.200" r="1.500" fill="#222"/><path d="M1 1l7.500 6.500" stroke="#222" stroke-width=".9"/></svg>
<svg style="left:744.00px;top:64.00px;" width="10" height="8" viewBox="0 0 10 8"><path d="M1 2.500h5l2 1.500-2 1.500h-4.500z" fill="none" stroke="#222" stroke-width=".8"/><path d="M2.200 1v2M1 1.200h2.400" stroke="#222" stroke-width=".7"/></svg>
<svg style="left:755.10px;top:67.40px;" width="4.4" height="3" viewBox="0 0 4.4 3"><path d="M.6.500L2.200 2.100 3.800.5" stroke="#333" stroke-width=".7" fill="none"/></svg>
<div style="left:764.20px;top:62.00px;width:0.50px;height:12.00px;background:#dededc;"></div>
<svg style="left:768.50px;top:63.80px;" width="10" height="9" viewBox="0 0 10 9"><circle cx="4" cy="3.800" r="3" fill="#222"/><path d="M2.600 3.800l1 1 1.800-2" stroke="#efefed" stroke-width=".6" fill="none"/><path d="M6 7h3.200M7 8.200h2.200" stroke="#222" stroke-width=".5"/></svg>
<svg style="left:780.60px;top:67.40px;" width="4.4" height="3" viewBox="0 0 4.4 3"><path d="M.6.500L2.200 2.100 3.800.5" stroke="#333" stroke-width=".7" fill="none"/></svg>
<div style="left:10.20px;top:75.90px;width:69.80px;height:675.60px;background:#fff;"></div>
<div style="left:80.00px;top:75.90px;width:560.00px;height:13.20px;background:#c3c3c1;"></div>
<div style="left:80.00px;top:88.00px;width:3.20px;height:663.50px;background:linear-gradient(90deg,#c6c6c4,#b9c0b9);"></div>
<div style="left:10.20px;top:75.90px;width:69.80px;height:8.70px;background:#ebebe9;"></div>
<svg style="left:12.60px;top:77.60px;" width="5.2" height="5.2" viewBox="0 0 5.2 5.2"><path d="M0 0L5.2 5.2M5.2 0L0 5.2" stroke="#333" stroke-width="0.8"/></svg>
<div class="t" style="font-size:6.3px;line-height:7.56px;color:#222;left:20.80px;top:76.52px;">Basic</div>
<div style="left:70.70px;top:77.90px;width:5.20px;height:0.70px;background:#6a6a68;"></div>
<div style="left:70.70px;top:79.80px;width:5.20px;height:0.70px;background:#6a6a68;"></div>
<div style="left:70.70px;top:81.70px;width:5.20px;height:0.70px;background:#6a6a68;"></div>
<div style="left:11.00px;top:85.40px;width:15.20px;height:12.10px;background:#d6d6d4;border-radius:1.500px;"></div>
<svg style="left:11.60px;top:85.60px;" width="12" height="12" viewBox="0 0 12 12"><path d="M3.500 1.500V9.500L5.500 7.600 6.800 10.500 8 10 6.700 7.200 9.300 7z" stroke="#2b2b2b" stroke-width="0.3" fill="#2b2b2b" /></svg>
<svg style="left:28.80px;top:85.60px;" width="12" height="12" viewBox="0 0 12 12"><path d="M3.500 6V3a.7.7 0 0 1 1.400 0V2a.7.7 0 0 1 1.400 0v.500a.7.7 0 0 1 1.400 0V3.500a.7.7 0 0 1 1.400 0V7.500a3 3 0 0 1-3 3h-.600a3 3 0 0 1-2.500-1.500L1.800 6.500a.7.7 0 0 1 1.200-.700z" stroke="#2b2b2b" stroke-width="0.7" fill="none" /><path d="M10.500 8.500v2.500h-2.500z" stroke="#2b2b2b" stroke-width="0" fill="#2b2b2b" /></svg>
<svg style="left:45.70px;top:85.60px;" width="12" height="12" viewBox="0 0 12 12"><circle cx="6" cy="5.800" r="3.400" fill="#ebebea" stroke="#2b2b2b" stroke-width=".7"/><ellipse cx="6" cy="6" rx="5.400" ry="2.100" fill="none" stroke="#2b2b2b" stroke-width=".7"/><path d="M5 6.800h2.200" stroke="#2b2b2b" stroke-width="0.6" fill="none" /><path d="M6.600 5.600l1.400 1.200-1.400 1.200z" stroke="#2b2b2b" stroke-width="0" fill="#2b2b2b" /><path d="M5.200 1.400l1.600.300-1.100 1.100z" stroke="#2b2b2b" stroke-width="0" fill="#2b2b2b" /></svg>
<svg style="left:62.60px;top:85.60px;" width="12" height="12" viewBox="0 0 12 12"><circle cx="5.200" cy="5.200" r="3.200" fill="none" stroke="#2b2b2b" stroke-width=".8"/><path d="M7.600 7.600L10.500 10.500" stroke="#2b2b2b" stroke-width="1.1" fill="none" /><path d="M3.800 5.200h2.800M5.200 3.800v2.800" stroke="#2b2b2b" stroke-width="0.6" fill="none" /></svg>
<svg style="left:11.60px;top:98.62px;" width="12" height="12" viewBox="0 0 12 12"><text x="6" y="10.300" font-family="Liberation Serif,serif" font-weight="bold" font-size="11.500" text-anchor="middle" fill="#2b2b2b">T</text></svg>
<svg style="left:28.80px;top:98.62px;" width="12" height="12" viewBox="0 0 12 12"><path d="M4.500 1.500h6v3.600h-6z" stroke="#2b2b2b" stroke-width="0.7" fill="none" /><path d="M6 3.300h3" stroke="#2b2b2b" stroke-width="0.5" fill="none" /><path d="M4.500 5.100L1.200 9.800" stroke="#2b2b2b" stroke-width="0.7" fill="none" /><path d="M10.500 8.500v2.500h-2.500z" stroke="#2b2b2b" stroke-width="0" fill="#2b2b2b" /></svg>
<svg style="left:45.70px;top:98.62px;" width="12" height="12" viewBox="0 0 12 12"><path d="M3.500 3.500L8.500 8.500M8.500 3.500L3.500 8.500" stroke="#2b2b2b" stroke-width="0.8" fill="none" /></svg>
<svg style="left:62.60px;top:98.62px;" width="12" height="12" viewBox="0 0 12 12"><path d="M4.500 1.200L7.500 2.900V6.500L4.500 8.200 1.500 6.500V2.900z" stroke="#2b2b2b" stroke-width="0.7" fill="none" /><path d="M4.500 4.700l3-1.800M4.500 4.700l-3-1.800M4.500 4.700V8.200" stroke="#2b2b2b" stroke-width="0.4" fill="none" /><path d="M9.800 3.500V9.500M8.300 8l1.500 1.700L11.300 8" stroke="#2b2b2b" stroke-width="0.8" fill="none" /></svg>
<svg style="left:11.60px;top:111.64px;" width="12" height="12" viewBox="0 0 12 12"><path d="M2 2L10 10" stroke="#2b2b2b" stroke-width="0.9" fill="none" /></svg>
<svg style="left:28.80px;top:111.64px;" width="12" height="12" viewBox="0 0 12 12"><path d="M3 1.500L10.500 9M1.500 3L9 10.500" stroke="#2b2b2b" stroke-width="0.8" fill="none" /></svg>
<svg style="left:45.70px;top:111.64px;" width="12" height="12" viewBox="0 0 12 12"><path d="M1.500 3h9v6.200h-9z" stroke="#2b2b2b" stroke-width="0.8" fill="#ebebea" /></svg>
<svg style="left:62.60px;top:111.64px;" width="12" height="12" viewBox="0 0 12 12"><rect x="1.500" y="3" width="9" height="6.200" rx="1.800" fill="#ebebea" stroke="#2b2b2b" stroke-width=".8"/></svg>
<svg style="left:11.60px;top:124.66px;" width="12" height="12" viewBox="0 0 12 12"><circle cx="6" cy="6" r="4" fill="#ebebea" stroke="#2b2b2b" stroke-width=".8"/></svg>
<svg style="left:28.80px;top:124.66px;" width="12" height="12" viewBox="0 0 12 12"><ellipse cx="6" cy="6.200" rx="4.500" ry="3" fill="#ebebea" stroke="#2b2b2b" stroke-width=".8"/></svg>
<svg style="left:45.70px;top:124.66px;" width="12" height="12" viewBox="0 0 12 12"><path d="M2 9.500L5 1.800A8 8 0 0 1 9.800 9.500z" stroke="#2b2b2b" stroke-width="0.8" fill="#ebebea" /><path d="M11 8.500v2.500h-2.500z" stroke="#2b2b2b" stroke-width="0" fill="#2b2b2b" /></svg>
<svg style="left:62.60px;top:124.66px;" width="12" height="12" viewBox="0 0 12 12"><path d="M1 7C4 7 9 5 9 3a1.500 1.500 0 0 0-3 0C6 5.500 8.500 8 11 8" stroke="#2b2b2b" stroke-width="0.8" fill="none" /></svg>
<svg style="left:11.60px;top:137.68px;" width="12" height="12" viewBox="0 0 12 12"><path d="M1.500 9.500V5.500C2.500 5 3 4 3.500 2.800 4.500 3 5 4 5.500 5 7 5.800 9 4.500 10.500 5.500V9.500z" stroke="#2b2b2b" stroke-width="0.8" fill="#ebebea" /></svg>
<svg style="left:28.80px;top:137.68px;" width="12" height="12" viewBox="0 0 12 12"><path d="M1.500 2.500l3.500 1.500 5-1.500-1.500 5.500-3 1.500-3-2z" stroke="#2b2b2b" stroke-width="0.8" fill="#ebebea" /><path d="M11 8.500v2.500h-2.500z" stroke="#2b2b2b" stroke-width="0" fill="#2b2b2b" /></svg>
<svg style="left:45.70px;top:137.68px;" width="12" height="12" viewBox="0 0 12 12"><path d="M1 2.500l3 1.500 2-1.500 2 1.500 3-1.500-1.500 7H2.500z" stroke="#2b2b2b" stroke-width="0.7" fill="#ebebea" /><path d="M2.500 4.500l1 5M4.500 4.500l.500 5M6.500 4l0 5.500M8.500 4.500l-.500 5M10 4.500l-1 5" stroke="#2b2b2b" stroke-width="0.4" fill="none" /></svg>
<svg style="left:62.60px;top:137.68px;" width="12" height="12" viewBox="0 0 12 12"><path d="M3.500 2h5L10.800 6 8.500 10h-5L1.200 6z" stroke="#2b2b2b" stroke-width="0.8" fill="#ebebea" /></svg>
<svg style="left:11.60px;top:150.70px;" width="12" height="12" viewBox="0 0 12 12"><circle cx="6" cy="6" r="4.300" fill="#bbb" stroke="#2b2b2b" stroke-width=".5"/><circle cx="6" cy="6" r="3.100" fill="none" stroke="#555" stroke-width=".5"/><circle cx="6" cy="6" r="1.900" fill="none" stroke="#555" stroke-width=".5"/><circle cx="6" cy="6" r=".8" fill="none" stroke="#555" stroke-width=".5"/></svg>
<svg style="left:28.80px;top:150.70px;" width="12" height="12" viewBox="0 0 12 12"><path d="M2 10l.600-2L7 3.600 8.400 5 4 9.400z" stroke="#2b2b2b" stroke-width="0.7" fill="none" /><path d="M6.800 2.600l2.600 2.600M8 2.600l1.500-1.300 1.200 1.200L9.400 4z" stroke="#2b2b2b" stroke-width="0.7" fill="#2b2b2b" /></svg>
<svg style="left:45.70px;top:150.70px;" width="12" height="12" viewBox="0 0 12 12"><path d="M4.500 4.500L10.500 10.500" stroke="#2b2b2b" stroke-width="1.2" fill="none" /><path d="M3 .8l.600 1.500L5.200 3l-1.600.600L3 5.200l-.600-1.600L.8 3l1.600-.700z" stroke="#2b2b2b" stroke-width="0" fill="#2b2b2b" /><path d="M6.500 1.500l.300.700.700.300-.700.300-.300.700-.300-.700-.700-.300.700-.300z" stroke="#2b2b2b" stroke-width="0" fill="#2b2b2b" /></svg>
<svg style="left:62.60px;top:150.70px;" width="12" height="12" viewBox="0 0 12 12"><path d="M1.500 1V8L3.300 6.400l1.200 2.600 1-.5L4.300 6l2.200-.200z" stroke="#2b2b2b" stroke-width="0.3" fill="#2b2b2b" /><ellipse cx="8.800" cy="8.300" rx="2.400" ry="1.500" fill="none" stroke="#2b2b2b" stroke-width=".6"/><circle cx="8.800" cy="8.300" r=".7" fill="#2b2b2b"/></svg>
<svg style="left:11.60px;top:163.72px;" width="12" height="12" viewBox="0 0 12 12"><path d="M3 3h7.500v7.500H3z" stroke="#2b2b2b" stroke-width="0.8" fill="none" /><path d="M1 1h4v4H1z" stroke="#2b2b2b" stroke-width="0.6" fill="#fff" /><path d="M5 5h3.500v3.500H5z" stroke="#2b2b2b" stroke-width="0" fill="#2b2b2b" /><path d="M1 3h4M3 1v4" stroke="#2b2b2b" stroke-width="0.4" fill="none" /></svg>
<svg style="left:28.80px;top:163.72px;" width="12" height="12" viewBox="0 0 12 12"><path d="M2 4l7.500-1.500L9 9.500H2.500z" stroke="#2b2b2b" stroke-width="0.7" fill="none" stroke-dasharray="1.300 .700"/><path d="M1 3h2v2H1zM8.500 1.500h2v2h-2zM8 8.500h2v2H8zM1.500 8.500h2v2h-2z" stroke="#2b2b2b" stroke-width="0.3" fill="#2b2b2b" /><path d="M10 2L11.500.5" stroke="#2b2b2b" stroke-width="0.6" fill="none" /></svg>
<svg style="left:45.70px;top:163.72px;" width="12" height="12" viewBox="0 0 12 12"><path d="M6 2.200A4 4 0 1 1 2.300 4.600" fill="none" stroke="#2b2b2b" stroke-width=".8"/><path d="M6 .500V4L4 2.200z" stroke="#2b2b2b" stroke-width="0" fill="#2b2b2b" /><circle cx="6" cy="6.200" r=".6" fill="#2b2b2b"/></svg>
<svg style="left:62.60px;top:163.72px;" width="12" height="12" viewBox="0 0 12 12"><path d="M6 1V11" stroke="#2b2b2b" stroke-width="0.6" fill="none" stroke-dasharray="1.300 .900"/><path d="M1.500 4L4.500 6 1.500 8zM10.500 4L7.500 6l3 2z" stroke="#2b2b2b" stroke-width="0" fill="#2b2b2b" /></svg>
<svg style="left:11.60px;top:176.74px;" width="12" height="12" viewBox="0 0 12 12"><path d="M1.500 10.500C4 9 8 5.500 10.500 1.500 9.500 5 6.500 8.500 3.500 10z" stroke="#2b2b2b" stroke-width="0.5" fill="#2b2b2b" /><path d="M1 11l2.500-2.500" stroke="#2b2b2b" stroke-width="1" fill="none" /></svg>
<svg style="left:28.80px;top:176.74px;" width="12" height="12" viewBox="0 0 12 12"><path d="M2 2L10 10M10 2L2 10" stroke="#2b2b2b" stroke-width="0.8" fill="none" /></svg>
<svg style="left:45.70px;top:176.74px;" width="12" height="12" viewBox="0 0 12 12"><path d="M1 6.500L10.500 4M1.500 4L10.500 7.500" stroke="#2b2b2b" stroke-width="0.8" fill="none" /><circle cx="8.200" cy="2.500" r="1.300" fill="none" stroke="#2b2b2b" stroke-width=".7"/><circle cx="8.500" cy="9.200" r="1.300" fill="none" stroke="#2b2b2b" stroke-width=".7"/></svg>
<svg style="left:62.60px;top:176.74px;" width="12" height="12" viewBox="0 0 12 12"><path d="M2 2.500h3A4.500 4.500 0 0 1 9.500 7v3" stroke="#2b2b2b" stroke-width="0.8" fill="none" /><path d="M5.500 7.500h1.500v1.500" stroke="#2b2b2b" stroke-width="0.5" fill="none" /></svg>
<svg style="left:11.60px;top:189.76px;" width="12" height="12" viewBox="0 0 12 12"><path d="M1.500 2.500h4L9.500 6.500v4" stroke="#2b2b2b" stroke-width="0.8" fill="none" /><path d="M5 6.500h2.500v2.500" stroke="#2b2b2b" stroke-width="0.5" fill="none" /></svg>
<svg style="left:28.80px;top:189.76px;" width="12" height="12" viewBox="0 0 12 12"><path d="M2 2.500h2A5.500 5.500 0 0 1 9.500 8v2.500" stroke="#2b2b2b" stroke-width="0.8" fill="none" /><path d="M2 5h1.500A3.500 3.500 0 0 1 7 8.500v2" stroke="#2b2b2b" stroke-width="0.7" fill="none" /><path d="M5.500 3l2.500.500-1.500 1.500z" stroke="#2b2b2b" stroke-width="0" fill="#2b2b2b" /></svg>
<svg style="left:45.70px;top:189.76px;" width="12" height="12" viewBox="0 0 12 12"><path d="M1.500 9.500L4 4.500h6.500L8 9.500z" stroke="#2b2b2b" stroke-width="0.7" fill="#ccc" /><path d="M4 4.500L6 2.500h4.500v2M8 9.500l2.500-2.500V4.500" stroke="#2b2b2b" stroke-width="0.6" fill="none" /><path d="M11.500 9v2.500H9z" stroke="#2b2b2b" stroke-width="0" fill="#2b2b2b" /></svg>
<svg style="left:62.60px;top:189.76px;" width="12" height="12" viewBox="0 0 12 12"><path d="M3 8.500L9.500 2.500" stroke="#2b2b2b" stroke-width="0.8" fill="none" /><path d="M1 11V7.500l2 1 1.500 1.500z" stroke="#2b2b2b" stroke-width="0" fill="#2b2b2b" /><path d="M8.500 1h2.500v2.500H8.500z" stroke="#2b2b2b" stroke-width="0.6" fill="none" /></svg>
<svg style="left:11.60px;top:202.78px;" width="12" height="12" viewBox="0 0 12 12"><path d="M1.500 3V9M10.500 3V9" stroke="#2b2b2b" stroke-width="0.9" fill="none" /><path d="M1.500 6h9" stroke="#2b2b2b" stroke-width="0.6" fill="none" /><path d="M1.500 6l2-1v2zM10.500 6l-2-1v2z" stroke="#2b2b2b" stroke-width="0" fill="#2b2b2b" /></svg>
<svg style="left:28.80px;top:202.78px;" width="12" height="12" viewBox="0 0 12 12"><path d="M1.500 6.500L6 9.500 8.500 3" stroke="#2b2b2b" stroke-width="0.7" fill="none" /><path d="M3 4.500A6 6 0 0 1 10.500 4" stroke="#2b2b2b" stroke-width="0.6" fill="none" /><path d="M3 4.500l1.500-.5-.5 1.500zM10.500 4l-1.500-.5.5 1.500z" stroke="#2b2b2b" stroke-width="0" fill="#2b2b2b" /></svg>
<svg style="left:45.70px;top:202.78px;" width="12" height="12" viewBox="0 0 12 12"><path d="M2 1.500V10h8.500" stroke="#2b2b2b" stroke-width="0.8" fill="none" /><path d="M2 1.500A8.500 8.500 0 0 1 10.500 10" stroke="#2b2b2b" stroke-width="0.8" fill="none" /><path d="M2 5.500h2.500A2 2 0 0 1 6.500 7.500V10" stroke="#2b2b2b" stroke-width="0.5" fill="none" /></svg>
<svg style="left:62.60px;top:202.78px;" width="12" height="12" viewBox="0 0 12 12"><path d="M1.500 3.500C4 2 8 2 10.500 3.500V9.500C8 8 4 8 1.500 9.500z" stroke="#2b2b2b" stroke-width="0.8" fill="none" /></svg>
<svg style="left:11.60px;top:215.80px;" width="12" height="12" viewBox="0 0 12 12"><circle cx="6" cy="6" r="4.200" fill="none" stroke="#2b2b2b" stroke-width=".8"/><path d="M3 9L9 3" stroke="#2b2b2b" stroke-width="0.8" fill="none" /></svg>
<svg style="left:28.80px;top:215.80px;" width="12" height="12" viewBox="0 0 12 12"><path d="M.500 9.500H3" stroke="#2b2b2b" stroke-width="0.9" fill="none" /><rect x="3.500" y="3.500" width="7" height="6.500" rx="1.200" fill="none" stroke="#2b2b2b" stroke-width=".8"/><rect x="6" y="5.800" width="2" height="2" fill="#2b2b2b"/></svg>
<svg style="left:45.70px;top:215.80px;" width="12" height="12" viewBox="0 0 12 12"><path d="M1 9.500A5 5.300 0 0 1 11 9.500z" stroke="#2b2b2b" stroke-width="0.8" fill="none" /><path d="M3.500 9.500A2.500 2.700 0 0 1 8.500 9.500" stroke="#2b2b2b" stroke-width="0.7" fill="none" /><path d="M6 4.200V7M3 6l1.500 1.500M9 6L7.500 7.500" stroke="#2b2b2b" stroke-width="0.5" fill="none" /></svg>
<svg style="left:62.60px;top:215.80px;" width="12" height="12" viewBox="0 0 12 12"><rect x="1.500" y="3" width="9" height="6.500" rx="1.500" fill="none" stroke="#2b2b2b" stroke-width=".8"/><path d="M1.500 5h1.200M1.500 7.500h1.200M10.500 5H9.300M10.500 7.500H9.300" stroke="#2b2b2b" stroke-width="0.6" fill="none" /></svg>
<svg style="left:11.60px;top:228.82px;" width="12" height="12" viewBox="0 0 12 12"><path d="M1.500 3L5 1l2.500 3.500L4 6.500z" stroke="#2b2b2b" stroke-width="0.7" fill="#ddd" /><path d="M5.500 5.500L9.500 10.500" stroke="#2b2b2b" stroke-width="1.3" fill="none" /><rect x="6.800" y="3" width="4" height="4" fill="#b8862f"/></svg>
<div style="left:10.20px;top:359.80px;width:69.80px;height:2.00px;background:#c2c2c0;"></div>
<div style="left:10.20px;top:361.80px;width:69.80px;height:9.60px;background:#e9e9e7;"></div>
<svg style="left:12.60px;top:364.20px;" width="5.2" height="5.2" viewBox="0 0 5.2 5.2"><path d="M0 0L5.2 5.2M5.2 0L0 5.2" stroke="#333" stroke-width="0.8"/></svg>
<div class="t" style="font-size:6.3px;line-height:7.56px;color:#222;left:20.80px;top:363.12px;">Tool Sets</div>
<svg style="left:70.75px;top:364.15px;" width="5.1" height="5.1" viewBox="0 0 5.1 5.1"><rect x="0.00" y="0.00" width="1.300" height="1.300" fill="#858583"/><rect x="0.00" y="1.90" width="1.300" height="1.300" fill="#858583"/><rect x="0.00" y="3.80" width="1.300" height="1.300" fill="#858583"/><rect x="1.90" y="0.00" width="1.300" height="1.300" fill="#858583"/><rect x="1.90" y="1.90" width="1.300" height="1.300" fill="#858583"/><rect x="1.90" y="3.80" width="1.300" height="1.300" fill="#858583"/><rect x="3.80" y="0.00" width="1.300" height="1.300" fill="#858583"/><rect x="3.80" y="1.90" width="1.300" height="1.300" fill="#858583"/><rect x="3.80" y="3.80" width="1.300" height="1.300" fill="#858583"/></svg>
<svg style="left:12.55px;top:371.35px;" width="12.5" height="12.5" viewBox="0 0 12 12"><path d="M1 9l1.500-5 1.500 5M8 9l1.500-5L11 9M4 5l2-3 2 3M4.500 7h3" stroke="#2b2b2b" stroke-width="0.7" fill="none" /></svg>
<svg style="left:29.45px;top:371.35px;" width="12.5" height="12.5" viewBox="0 0 12 12"><path d="M1.500 10V5.500h9V10zM3 5.500L4.500 2 6 5.500M6 5.500L7.500 2 9 5.500" stroke="#2b2b2b" stroke-width="0.7" fill="none" /><path d="M4.500 10V8h3v2" stroke="#2b2b2b" stroke-width="0.6" fill="none" /></svg>
<svg style="left:46.15px;top:371.35px;" width="12.5" height="12.5" viewBox="0 0 12 12"><path d="M.5 2h8v2.500h-8zM3 2v2.500M6 2v2.500" stroke="#2b2b2b" stroke-width="0.7" fill="none" /><path d="M5 6h4.500v4H5z" stroke="#2b2b2b" stroke-width="0.7" fill="none" /><path d="M9.500 7.500l2 1.500-2 1.500z" stroke="#2b2b2b" stroke-width="0" fill="#2b2b2b" /></svg>
<svg style="left:62.75px;top:371.35px;" width="12.5" height="12.5" viewBox="0 0 12 12"><path d="M.5 2h9.500v2.500H.5zM3.500 2v2.500M7 2v2.500" stroke="#2b2b2b" stroke-width="0.7" fill="none" /><path d="M7 10V6.500l1.500 2 1.500-2V10" stroke="#2b2b2b" stroke-width="0.6" fill="none" /></svg>
<svg style="left:12.55px;top:384.45px;" width="12.5" height="12.5" viewBox="0 0 12 12"><path d="M.5 2h8v2.500h-8zM3 2v2.500" stroke="#2b2b2b" stroke-width="0.7" fill="none" /><path d="M5 4.500V10M6.500 10V7l1 1.500 1-1.500v3" stroke="#2b2b2b" stroke-width="0.6" fill="none" /></svg>
<svg style="left:29.45px;top:384.45px;" width="12.5" height="12.5" viewBox="0 0 12 12"><path d="M1 3.500h10v5.500H1zM1 5.300h10M1 7.200h10" stroke="#2b2b2b" stroke-width="0.7" fill="#bbb" /></svg>
<svg style="left:46.15px;top:384.45px;" width="12.5" height="12.5" viewBox="0 0 12 12"><path d="M2.500 2h5M2.500 10h5M5 2V10M3.500 3.500h3M3.500 8.500h3" stroke="#2b2b2b" stroke-width="0.8" fill="none" /><path d="M10 2.500V9.500M9 3.500l1-1.500 1 1.500M9 8.500l1 1.500 1-1.500" stroke="#2b2b2b" stroke-width="0.6" fill="none" /></svg>
<svg style="left:62.75px;top:384.45px;" width="12.5" height="12.5" viewBox="0 0 12 12"><path d="M1.500 4.500h9v3h-9zM4.500 2h3v8h-3z" stroke="#2b2b2b" stroke-width="0.7" fill="none" /></svg>
<svg style="left:12.55px;top:397.75px;" width="12.5" height="12.5" viewBox="0 0 12 12"><path d="M6 1V4M4.500 4h3v3.500h-3zM6 7.500V9a1.200 1.200 0 1 0 1.500 1" stroke="#2b2b2b" stroke-width="0.9" fill="none" /></svg>
<svg style="left:29.45px;top:397.75px;" width="12.5" height="12.5" viewBox="0 0 12 12"><path d="M2 1.500h8v9H2z" stroke="#2b2b2b" stroke-width="0.6" fill="none" /><path d="M4.500 2.500v7M7.500 2.500v7M3.500 6L2.500 6M8.500 6h1" stroke="#2b2b2b" stroke-width="0.6" fill="none" /><ellipse cx="6" cy="6" rx="2" ry="3.200" fill="none" stroke="#2b2b2b" stroke-width=".6"/></svg>
<svg style="left:46.15px;top:397.75px;" width="12.5" height="12.5" viewBox="0 0 12 12"><path d="M6 1.500L10 10H2z" stroke="#2b2b2b" stroke-width="0.8" fill="#999" /><path d="M3.500 7h5M3 8.500h6" stroke="#2b2b2b" stroke-width="0.5" fill="none" /></svg>
<svg style="left:62.75px;top:397.75px;" width="12.5" height="12.5" viewBox="0 0 12 12"><path d="M3 1.500h6V3L7 4.500V6H5V4.500L3 3z" stroke="#2b2b2b" stroke-width="0.6" fill="#2b2b2b" /><circle cx="6" cy="8.500" r="1.800" fill="none" stroke="#2b2b2b" stroke-width=".9"/></svg>
<svg style="left:12.55px;top:411.05px;" width="12.5" height="12.5" viewBox="0 0 12 12"><path d="M1.500 1.500L6 6.500 10.500 1.500" stroke="#2b2b2b" stroke-width="0.8" fill="none" /><path d="M6 6.500V8M4.800 8h2.400v2.500H4.800z" stroke="#2b2b2b" stroke-width="0.8" fill="#2b2b2b" /></svg>
<svg style="left:29.45px;top:411.05px;" width="12.5" height="12.5" viewBox="0 0 12 12"><path d="M1.500 2.500h9M2.500 1l-1 2.500M9.500 1l1 2.500M3 2.500L6 6.500 9 2.500" stroke="#2b2b2b" stroke-width="0.7" fill="none" stroke-dasharray="1.300 .600"/><path d="M6 6.500V8M4.800 8h2.400v2.500H4.800z" stroke="#2b2b2b" stroke-width="0.8" fill="#2b2b2b" /></svg>
<svg style="left:46.15px;top:411.05px;" width="12.5" height="12.5" viewBox="0 0 12 12"><path d="M1.500 2h9v2.500h-9z" stroke="#2b2b2b" stroke-width="0.7" fill="none" stroke-dasharray="1.300 .600"/><path d="M6 4.500V8M2 9.500h1.500M4.500 8h3v2.500h-3zM8.500 9.500H10" stroke="#2b2b2b" stroke-width="0.8" fill="#2b2b2b" /></svg>
<div style="left:10.20px;top:671.50px;width:69.80px;height:80.00px;background:#efefed;"></div>
<div style="left:10.20px;top:671.30px;width:69.80px;height:0.50px;background:#dcdcda;"></div>
<div style="left:11.20px;top:699.00px;width:15.30px;height:12.60px;background:#d2d2d0;border-radius:2px;"></div>
<svg style="left:12.15px;top:672.75px;" width="12.5" height="12.5" viewBox="0 0 12 12"><path d="M3.500 2h5L11 10H1z" stroke="#5a9a5a" stroke-width="0.7" fill="#bfe3bf" /><path d="M4.500 4l3.500 2-3.500 2.500z" stroke="#666" stroke-width="0.6" fill="#eee" /></svg>
<svg style="left:28.95px;top:672.75px;" width="12.5" height="12.5" viewBox="0 0 12 12"><path d="M6 1.200C8 4 9.500 5.800 9.500 7.500a3.500 3.500 0 0 1-7 0C2.500 5.800 4 4 6 1.200z" stroke="#3a7ac0" stroke-width="0.5" fill="#8cc0f0" /></svg>
<svg style="left:45.55px;top:672.75px;" width="12.5" height="12.5" viewBox="0 0 12 12"><circle cx="6" cy="6" r="4.500" fill="#9cc8f0" stroke="#2a5a9a" stroke-width=".7"/><path d="M4.500 3l2-.5 1.500 1.500-.5 2-2 .5-1.500-1.500zM7 8l1.500-.5.500 1.500" stroke="#222" stroke-width="0.4" fill="#333" /></svg>
<svg style="left:62.35px;top:672.75px;" width="12.5" height="12.5" viewBox="0 0 12 12"><path d="M1.500 2.500h9v7h-9z" stroke="#555" stroke-width="0.7" fill="#ccc" /><path d="M1.500 5h9M1.500 7.200h9M5 2.500v7M8 2.500v7" stroke="#555" stroke-width="0.5" fill="none" /></svg>
<svg style="left:12.15px;top:685.75px;" width="12.5" height="12.5" viewBox="0 0 12 12"><path d="M1.500 10.500V5L6 1.800 10.500 5v5.500z" stroke="#6a1a1a" stroke-width="0.6" fill="#c83a3a" /><path d="M4 10.500V6.500h4v4" stroke="#eee" stroke-width="0.6" fill="#7a2020" /><path d="M.800 5.500L6 1.500l5.200 4" stroke="#5a1515" stroke-width="0.8" fill="none" /></svg>
<svg style="left:28.95px;top:685.75px;" width="12.5" height="12.5" viewBox="0 0 12 12"><path d="M.800 1.500h9v6.500h-9z" stroke="#23c" stroke-width="0.3" fill="#3a4ae0" /><path d="M6.500 5.500h5v5.500h-5z" stroke="#888" stroke-width="0.5" fill="#eee" /><circle cx="9" cy="8.800" r="1.600" fill="#111"/></svg>
<svg style="left:45.55px;top:685.75px;" width="12.5" height="12.5" viewBox="0 0 12 12"><path d="M1 7.500L7.500 3l2.500 3.500L3.500 10.500z" stroke="#1a2a6a" stroke-width="0.6" fill="#5a78d8" /><ellipse cx="9" cy="4.800" rx="1.700" ry="2.500" fill="#9ab0f0" stroke="#1a2a6a" stroke-width=".6" transform="rotate(-35 9 4.800)"/><ellipse cx="2.300" cy="9" rx="1.200" ry="1.700" fill="#2a3a8a" transform="rotate(-35 2.300 9)"/></svg>
<svg style="left:62.35px;top:685.75px;" width="12.5" height="12.5" viewBox="0 0 12 12"><path d="M4.500 1L1.500 6.500h2.500L2.500 11 7 5h-2.500L6 1z" stroke="#a07800" stroke-width="0.4" fill="#f0c020" /><path d="M7 9l4-5.500M8 5l3 2M7 6.500l1.500 3" stroke="#666" stroke-width="0.7" fill="none" /></svg>
<svg style="left:12.15px;top:698.95px;" width="12.5" height="12.5" viewBox="0 0 12 12"><path d="M2.500 3.500h7l1.500 3.500h-10z" stroke="#555" stroke-width="0.6" fill="#e8e8e8" /><path d="M1 7h10v1.500H1zM1.500 8.500h9V10h-9z" stroke="#555" stroke-width="0.6" fill="#d0d0d0" /><path d="M3.500 5h5" stroke="#555" stroke-width="0.5" fill="none" /></svg>
<svg style="left:28.95px;top:698.95px;" width="12.5" height="12.5" viewBox="0 0 12 12"><path d="M1.500 2h9v8.500h-9z" stroke="#3a1010" stroke-width="0.8" fill="#b83030" /><path d="M3 10.500V6.500c1-1.500 2-1 3 0 1-1 2-1.500 3 0v4z" stroke="#eee" stroke-width="0.4" fill="#f4f4f4" /><path d="M1.500 2c2 2.500 7 2.500 9 0" stroke="#3a1010" stroke-width="0.6" fill="none" /></svg>
<svg style="left:45.55px;top:698.95px;" width="12.5" height="12.5" viewBox="0 0 12 12"><path d="M1 8l3-4 2.500.500L7 6.500l2 .500.500 1.500H1z" stroke="#888" stroke-width="0.5" fill="#f8f8f8" /><path d="M7 7h3.500v1.300H7z" stroke="#a08020" stroke-width="0.4" fill="#e8c040" /></svg>
<svg style="left:62.35px;top:698.95px;" width="12.5" height="12.5" viewBox="0 0 12 12"><path d="M3.500 1h5.500v10H3.500z" stroke="#555" stroke-width="0.7" fill="#eee" /><path d="M5.500 2h2.500v8H5.500z" stroke="#111" stroke-width="0" fill="#111" /></svg>
<svg style="left:12.15px;top:712.15px;" width="12.5" height="12.5" viewBox="0 0 12 12"><path d="M1 5h3v3H1zM4 5.500h5v2H4zM9 4l1.500 2.500L9 9zM5.500 3.500h2v2h-2zM6 7.500v2.500" stroke="#7a5a10" stroke-width="0.5" fill="#e8b838" /></svg>
<svg style="left:28.95px;top:712.15px;" width="12.5" height="12.5" viewBox="0 0 12 12"><path d="M2.500 1.500h7v9h-7z" stroke="#3a6aa0" stroke-width="0.5" fill="#d8ecfa" /><path d="M3.500 2.500l2 3-2 4M6.500 2.500l2 3-2 4" stroke="#4a8ad0" stroke-width="0.7" fill="none" /></svg>
<svg style="left:45.55px;top:712.15px;" width="12.5" height="12.5" viewBox="0 0 12 12"><path d="M1 4h10v6H1zM4 4l.8-1.500h2.400L8 4" stroke="#444" stroke-width="0.7" fill="#bbb" /><circle cx="6" cy="7" r="2" fill="#eee" stroke="#444" stroke-width=".7"/><circle cx="6" cy="7" r=".8" fill="#444"/></svg>
<svg style="left:62.35px;top:712.15px;" width="12.5" height="12.5" viewBox="0 0 12 12"><path d="M1.500 1.500h9v9h-9z" stroke="#5a3a1a" stroke-width="0.7" fill="#c89858" /><path d="M1.500 4h9M6 4v6.500" stroke="#5a3a1a" stroke-width="0.6" fill="none" /><path d="M4.500 6.500v1.500M7.500 6.500v1.500" stroke="#333" stroke-width="0.6" fill="none" /></svg>
<svg style="left:12.15px;top:725.45px;" width="12.5" height="12.5" viewBox="0 0 12 12"><path d="M.800 4.500h10.400v3.500H.800z" stroke="#7a5a30" stroke-width="0.6" fill="#e0b878" /><path d="M2.500 4.500v1.500M4.200 4.500v1M6 4.500v1.500M7.800 4.500v1M9.500 4.500v1.500" stroke="#5a3a1a" stroke-width="0.4" fill="none" /></svg>
<svg style="left:28.95px;top:725.45px;" width="12.5" height="12.5" viewBox="0 0 12 12"><path d="M1 2.500h2.500L4.500 4h3L8.500 2.500H11v7H8.500L7.500 8h-3L3.500 9.500H1z" stroke="#444" stroke-width="0.7" fill="#ddd" /><path d="M4.500 5h3M4.500 7h3" stroke="#444" stroke-width="0.5" fill="none" /></svg>
<svg style="left:45.55px;top:725.45px;" width="12.5" height="12.5" viewBox="0 0 12 12"><path d="M2.500 5.500h7V10h-7zM5 3h4v2.500H5zM1 7h1.500v2H1zM9.500 7H11v2H9.500z" stroke="#1a3a6a" stroke-width="0.6" fill="#4a88d0" /><circle cx="4" cy="7.800" r="1.200" fill="#1a3a6a"/></svg>
<svg style="left:62.35px;top:725.45px;" width="12.5" height="12.5" viewBox="0 0 12 12"><path d="M1 4.500a2 2 0 0 1 2-1.500h1v6H3a2 2 0 0 1-2-1.500zM4 4.500h7v3H4z" stroke="#555" stroke-width="0.6" fill="#f4f4f4" /><path d="M6 4.500v3M7.500 4.500v3M9 4.500v3" stroke="#888" stroke-width="0.4" fill="none" /></svg>
<svg style="left:12.15px;top:738.15px;" width="12.5" height="12.5" viewBox="0 0 12 12"><path d="M3 9.500a2 2 0 0 1-.800-3.800 2.200 2.200 0 0 1 2-3 2.500 2.500 0 0 1 4.300.500 2 2 0 0 1 1.800 3 2 2 0 0 1-1.300 3.300 2.200 2.200 0 0 1-3 .800A2.200 2.200 0 0 1 3 9.500z" stroke="#555" stroke-width="0.6" fill="#f4f4f4" /><path d="M6 4v2.500M5 5.800l1 1 1-1M4 8h4" stroke="#666" stroke-width="0.5" fill="none" /></svg>
<div style="left:84.60px;top:77.90px;width:104.60px;height:11.00px;background:#ececea;border-radius:2.500px 2.500px 0 0;"></div>
<svg style="left:88.90px;top:81.20px;" width="4.2" height="4.2" viewBox="0 0 4.2 4.2"><path d="M0 0L4.2 4.2M4.2 0L0 4.2" stroke="#333" stroke-width="0.7"/></svg>
<div class="t" style="font-size:6.15px;line-height:7.38px;color:#222;left:95.30px;top:79.71px;letter-spacing:0.073px;">Curtain Move...nt Example.vwx</div>
<div class="t" style="font-size:7px;line-height:8.40px;color:#444;left:190.00px;width:10px;text-align:center;top:78.80px;">+</div>
<div style="left:82.90px;top:88.80px;width:554.20px;height:662.10px;background:linear-gradient(180deg,#a19d99 0%,#aeaaa6 25%,#bcb8b4 45%,#cdc9c5 65%,#dad6d2 85%,#e1ddd9 100%);border:1.450px solid #b64fc4;"></div>
<div style="left:637.10px;top:88.00px;width:2.90px;height:663.50px;background:linear-gradient(90deg,#b9bfb9,#c6c6c4);"></div>
<svg style="left:0;top:0;" width="1358" height="764" viewBox="0 0 1358 764"><defs><clipPath id="vpc"><rect x="84.350" y="90.250" width="551.300" height="659.200"/></clipPath><linearGradient id="gOuter" x1="0" y1="0" x2="1" y2="1"><stop offset="0" stop-color="#0ad626"/><stop offset=".45" stop-color="#08c01e"/><stop offset="1" stop-color="#079c14"/></linearGradient><linearGradient id="gFront" x1="0" y1="0" x2="0" y2="1"><stop offset="0" stop-color="#078e12"/><stop offset="1" stop-color="#099c16"/></linearGradient><linearGradient id="gInner" x1="0" y1="0" x2="0" y2="1"><stop offset="0" stop-color="#0ab81c"/><stop offset="1" stop-color="#10d62a"/></linearGradient><linearGradient id="gPlate" x1="0" y1="0" x2="1" y2="0"><stop offset="0" stop-color="#099a14"/><stop offset="1" stop-color="#089212"/></linearGradient><linearGradient id="gSlabL" x1="0" y1="0" x2="1" y2="1"><stop offset="0" stop-color="#e6e4e1"/><stop offset="1" stop-color="#f3f1ef"/></linearGradient><radialGradient id="gSh"><stop offset="0" stop-color="#d8d6d2" stop-opacity=".9"/><stop offset="1" stop-color="#e8e6e2" stop-opacity="0"/></radialGradient><clipPath id="flr"><polygon points="90.40,391.60 355.20,290.30 619.10,391.60 352.00,621.80"/></clipPath></defs><g clip-path="url(#vpc)"><path d="M142.700 276.700L637 542.100" stroke="#4fbf5c" stroke-width=".5" opacity=".45"/><path d="M573.100 274.600L84 531.500" stroke="#e06060" stroke-width=".5" opacity=".45"/><path d="M352.600 90V300" stroke="#7d7fd6" stroke-width=".6" opacity=".7"/><path d="M352.300 628V652" stroke="#9a9be0" stroke-width=".5" opacity=".45"/><polygon points="90.40,391.60 98.54,398.76 107.00,406.21 115.82,413.97 125.01,422.06 134.60,430.50 144.61,439.30 155.08,448.51 166.02,458.15 177.49,468.24 189.51,478.81 202.13,489.92 215.39,501.59 229.34,513.86 244.04,526.80 259.56,540.45 275.95,554.88 293.30,570.14 311.69,586.33 331.22,603.51 352.00,621.80 352.00,630.20 331.22,611.71 311.69,594.33 293.30,577.95 275.95,562.50 259.56,547.89 244.04,534.05 229.34,520.94 215.39,508.48 202.13,496.64 189.51,485.37 177.49,474.63 166.02,464.39 155.08,454.60 144.61,445.25 134.60,436.31 125.01,427.74 115.82,419.53 107.00,411.67 98.54,404.12 90.40,396.90" fill="url(#gSlabL)"/><polygon points="352.00,621.80 373.14,603.58 393.02,586.45 411.75,570.30 429.43,555.07 446.14,540.66 461.97,527.02 476.97,514.09 491.22,501.82 504.76,490.14 517.66,479.03 529.94,468.44 541.67,458.34 552.87,448.68 563.57,439.46 573.82,430.62 583.64,422.16 593.05,414.05 602.08,406.27 610.76,398.79 619.10,391.60 619.10,397.10 610.76,404.35 602.08,411.91 593.05,419.80 583.64,428.02 573.82,436.60 563.57,445.56 552.87,454.92 541.67,464.72 529.94,474.97 517.66,485.71 504.76,496.98 491.22,508.81 476.97,521.25 461.97,534.35 446.14,548.16 429.43,562.74 411.75,578.15 393.02,594.48 373.14,611.79 352.00,630.20" fill="#eae8e5"/><path d="M90.40 391.60L90.40 396.90" stroke="#55524f" stroke-width="0.25"/><path d="M352.00 621.80L352.00 630.20" stroke="#55524f" stroke-width="0.60"/><path d="M98.54 398.76L98.54 404.12" stroke="#55524f" stroke-width="0.27"/><path d="M373.14 603.58L373.14 611.79" stroke="#55524f" stroke-width="0.58"/><path d="M107.00 406.21L107.00 411.67" stroke="#55524f" stroke-width="0.28"/><path d="M393.02 586.45L393.02 594.48" stroke="#55524f" stroke-width="0.56"/><path d="M115.82 413.97L115.82 419.53" stroke="#55524f" stroke-width="0.30"/><path d="M411.75 570.30L411.75 578.15" stroke="#55524f" stroke-width="0.55"/><path d="M125.01 422.06L125.01 427.74" stroke="#55524f" stroke-width="0.32"/><path d="M429.43 555.07L429.43 562.74" stroke="#55524f" stroke-width="0.53"/><path d="M134.60 430.50L134.60 436.31" stroke="#55524f" stroke-width="0.34"/><path d="M446.14 540.66L446.14 548.16" stroke="#55524f" stroke-width="0.51"/><path d="M144.61 439.30L144.61 445.25" stroke="#55524f" stroke-width="0.35"/><path d="M461.97 527.02L461.97 534.35" stroke="#55524f" stroke-width="0.49"/><path d="M155.08 448.51L155.08 454.60" stroke="#55524f" stroke-width="0.37"/><path d="M476.97 514.09L476.97 521.25" stroke="#55524f" stroke-width="0.48"/><path d="M166.02 458.15L166.02 464.39" stroke="#55524f" stroke-width="0.39"/><path d="M491.22 501.82L491.22 508.81" stroke="#55524f" stroke-width="0.46"/><path d="M177.49 468.24L177.49 474.63" stroke="#55524f" stroke-width="0.41"/><path d="M504.76 490.14L504.76 496.98" stroke="#55524f" stroke-width="0.44"/><path d="M189.51 478.81L189.51 485.37" stroke="#55524f" stroke-width="0.42"/><path d="M517.66 479.03L517.66 485.71" stroke="#55524f" stroke-width="0.42"/><path d="M202.13 489.92L202.13 496.64" stroke="#55524f" stroke-width="0.44"/><path d="M529.94 468.44L529.94 474.97" stroke="#55524f" stroke-width="0.41"/><path d="M215.39 501.59L215.39 508.48" stroke="#55524f" stroke-width="0.46"/><path d="M541.67 458.34L541.67 464.72" stroke="#55524f" stroke-width="0.39"/><path d="M229.34 513.86L229.34 520.94" stroke="#55524f" stroke-width="0.48"/><path d="M552.87 448.68L552.87 454.92" stroke="#55524f" stroke-width="0.37"/><path d="M244.04 526.80L244.04 534.05" stroke="#55524f" stroke-width="0.49"/><path d="M563.57 439.46L563.57 445.56" stroke="#55524f" stroke-width="0.35"/><path d="M259.56 540.45L259.56 547.89" stroke="#55524f" stroke-width="0.51"/><path d="M573.82 430.62L573.82 436.60" stroke="#55524f" stroke-width="0.34"/><path d="M275.95 554.88L275.95 562.50" stroke="#55524f" stroke-width="0.53"/><path d="M583.64 422.16L583.64 428.02" stroke="#55524f" stroke-width="0.32"/><path d="M293.30 570.14L293.30 577.95" stroke="#55524f" stroke-width="0.55"/><path d="M593.05 414.05L593.05 419.80" stroke="#55524f" stroke-width="0.30"/><path d="M311.69 586.33L311.69 594.33" stroke="#55524f" stroke-width="0.56"/><path d="M602.08 406.27L602.08 411.91" stroke="#55524f" stroke-width="0.28"/><path d="M331.22 603.51L331.22 611.71" stroke="#55524f" stroke-width="0.58"/><path d="M610.76 398.79L610.76 404.35" stroke="#55524f" stroke-width="0.27"/><path d="M352.00 621.80L352.00 630.20" stroke="#55524f" stroke-width="0.60"/><path d="M619.10 391.60L619.10 397.10" stroke="#55524f" stroke-width="0.25"/><polyline points="90.40,396.90 98.54,404.12 107.00,411.67 115.82,419.53 125.01,427.74 134.60,436.31 144.61,445.25 155.08,454.60 166.02,464.39 177.49,474.63 189.51,485.37 202.13,496.64 215.39,508.48 229.34,520.94 244.04,534.05 259.56,547.89 275.95,562.50 293.30,577.95 311.69,594.33 331.22,611.71 352.00,630.20" fill="none" stroke="#77736f" stroke-width=".5"/><polyline points="352.00,630.20 373.14,611.79 393.02,594.48 411.75,578.15 429.43,562.74 446.14,548.16 461.97,534.35 476.97,521.25 491.22,508.81 504.76,496.98 517.66,485.71 529.94,474.97 541.67,464.72 552.87,454.92 563.57,445.56 573.82,436.60 583.64,428.02 593.05,419.80 602.08,411.91 610.76,404.35 619.10,397.10" fill="none" stroke="#77736f" stroke-width=".5"/><polygon points="90.40,391.60 355.20,290.30 619.10,391.60 352.00,621.80" fill="#fefefe"/><path d="M90.40 391.60L107.00 406.21" stroke="#3c3a38" stroke-width="0.65" opacity="0.67"/><path d="M107.00 406.21L125.01 422.06" stroke="#3c3a38" stroke-width="0.66" opacity="0.70"/><path d="M125.01 422.06L144.61 439.30" stroke="#3c3a38" stroke-width="0.68" opacity="0.73"/><path d="M144.61 439.30L166.02 458.15" stroke="#3c3a38" stroke-width="0.70" opacity="0.75"/><path d="M166.02 458.15L189.51 478.81" stroke="#3c3a38" stroke-width="0.71" opacity="0.78"/><path d="M189.51 478.81L215.39 501.59" stroke="#3c3a38" stroke-width="0.73" opacity="0.80"/><path d="M215.39 501.59L244.04 526.80" stroke="#3c3a38" stroke-width="0.74" opacity="0.83"/><path d="M244.04 526.80L275.95 554.88" stroke="#3c3a38" stroke-width="0.76" opacity="0.85"/><path d="M275.95 554.88L311.69 586.33" stroke="#3c3a38" stroke-width="0.78" opacity="0.88"/><path d="M311.69 586.33L352.00 621.80" stroke="#3c3a38" stroke-width="0.79" opacity="0.91"/><path d="M108.40 384.71L125.40 398.76" stroke="#3c3a38" stroke-width="0.64" opacity="0.66"/><path d="M125.40 398.76L143.80 413.97" stroke="#3c3a38" stroke-width="0.66" opacity="0.69"/><path d="M143.80 413.97L163.79 430.50" stroke="#3c3a38" stroke-width="0.67" opacity="0.71"/><path d="M163.79 430.50L185.59 448.53" stroke="#3c3a38" stroke-width="0.69" opacity="0.74"/><path d="M185.59 448.53L209.45 468.25" stroke="#3c3a38" stroke-width="0.70" opacity="0.76"/><path d="M209.45 468.25L235.69 489.94" stroke="#3c3a38" stroke-width="0.72" opacity="0.79"/><path d="M235.69 489.94L264.66 513.90" stroke="#3c3a38" stroke-width="0.74" opacity="0.82"/><path d="M264.66 513.90L296.83 540.49" stroke="#3c3a38" stroke-width="0.75" opacity="0.84"/><path d="M296.83 540.49L332.76 570.20" stroke="#3c3a38" stroke-width="0.77" opacity="0.87"/><path d="M332.76 570.20L373.14 603.58" stroke="#3c3a38" stroke-width="0.78" opacity="0.89"/><path d="M98.54 398.76L134.24 384.71" stroke="#3c3a38" stroke-width="0.64" opacity="0.66"/><path d="M134.24 384.71L167.34 371.69" stroke="#3c3a38" stroke-width="0.62" opacity="0.63"/><path d="M167.34 371.69L198.11 359.58" stroke="#3c3a38" stroke-width="0.61" opacity="0.61"/><path d="M198.11 359.58L226.79 348.30" stroke="#3c3a38" stroke-width="0.59" opacity="0.58"/><path d="M226.79 348.30L253.58 337.76" stroke="#3c3a38" stroke-width="0.58" opacity="0.56"/><path d="M253.58 337.76L278.66 327.89" stroke="#3c3a38" stroke-width="0.56" opacity="0.53"/><path d="M278.66 327.89L302.19 318.63" stroke="#3c3a38" stroke-width="0.54" opacity="0.50"/><path d="M302.19 318.63L324.32 309.93" stroke="#3c3a38" stroke-width="0.53" opacity="0.48"/><path d="M324.32 309.93L345.16 301.73" stroke="#3c3a38" stroke-width="0.51" opacity="0.45"/><path d="M345.16 301.73L364.82 293.99" stroke="#3c3a38" stroke-width="0.50" opacity="0.43"/><path d="M125.74 378.08L143.08 391.60" stroke="#3c3a38" stroke-width="0.63" opacity="0.65"/><path d="M143.08 391.60L161.83 406.22" stroke="#3c3a38" stroke-width="0.65" opacity="0.67"/><path d="M161.83 406.22L182.17 422.07" stroke="#3c3a38" stroke-width="0.66" opacity="0.70"/><path d="M182.17 422.07L204.30 439.33" stroke="#3c3a38" stroke-width="0.68" opacity="0.73"/><path d="M204.30 439.33L228.48 458.18" stroke="#3c3a38" stroke-width="0.70" opacity="0.75"/><path d="M228.48 458.18L255.01 478.86" stroke="#3c3a38" stroke-width="0.71" opacity="0.78"/><path d="M255.01 478.86L284.24 501.64" stroke="#3c3a38" stroke-width="0.73" opacity="0.80"/><path d="M284.24 501.64L316.61 526.88" stroke="#3c3a38" stroke-width="0.74" opacity="0.83"/><path d="M316.61 526.88L352.65 554.97" stroke="#3c3a38" stroke-width="0.76" opacity="0.86"/><path d="M352.65 554.97L393.02 586.45" stroke="#3c3a38" stroke-width="0.78" opacity="0.88"/><path d="M107.00 406.21L143.08 391.60" stroke="#3c3a38" stroke-width="0.65" opacity="0.67"/><path d="M143.08 391.60L176.47 378.08" stroke="#3c3a38" stroke-width="0.63" opacity="0.65"/><path d="M176.47 378.08L207.47 365.52" stroke="#3c3a38" stroke-width="0.62" opacity="0.62"/><path d="M207.47 365.52L236.33 353.84" stroke="#3c3a38" stroke-width="0.60" opacity="0.59"/><path d="M236.33 353.84L263.25 342.93" stroke="#3c3a38" stroke-width="0.58" opacity="0.57"/><path d="M263.25 342.93L288.43 332.74" stroke="#3c3a38" stroke-width="0.57" opacity="0.54"/><path d="M288.43 332.74L312.03 323.18" stroke="#3c3a38" stroke-width="0.55" opacity="0.52"/><path d="M312.03 323.18L334.19 314.20" stroke="#3c3a38" stroke-width="0.54" opacity="0.49"/><path d="M334.19 314.20L355.05 305.75" stroke="#3c3a38" stroke-width="0.52" opacity="0.47"/><path d="M355.05 305.75L374.71 297.79" stroke="#3c3a38" stroke-width="0.50" opacity="0.44"/><path d="M142.44 371.69L160.09 384.71" stroke="#3c3a38" stroke-width="0.62" opacity="0.63"/><path d="M160.09 384.71L179.15 398.76" stroke="#3c3a38" stroke-width="0.64" opacity="0.66"/><path d="M179.15 398.76L199.79 413.98" stroke="#3c3a38" stroke-width="0.66" opacity="0.69"/><path d="M199.79 413.98L222.21 430.52" stroke="#3c3a38" stroke-width="0.67" opacity="0.71"/><path d="M222.21 430.52L246.66 448.55" stroke="#3c3a38" stroke-width="0.69" opacity="0.74"/><path d="M246.66 448.55L273.43 468.29" stroke="#3c3a38" stroke-width="0.70" opacity="0.76"/><path d="M273.43 468.29L302.85 489.99" stroke="#3c3a38" stroke-width="0.72" opacity="0.79"/><path d="M302.85 489.99L335.36 513.96" stroke="#3c3a38" stroke-width="0.74" opacity="0.82"/><path d="M335.36 513.96L371.45 540.58" stroke="#3c3a38" stroke-width="0.75" opacity="0.84"/><path d="M371.45 540.58L411.75 570.30" stroke="#3c3a38" stroke-width="0.77" opacity="0.87"/><path d="M115.82 413.97L152.27 398.76" stroke="#3c3a38" stroke-width="0.66" opacity="0.69"/><path d="M152.27 398.76L185.95 384.71" stroke="#3c3a38" stroke-width="0.64" opacity="0.66"/><path d="M185.95 384.71L217.18 371.68" stroke="#3c3a38" stroke-width="0.62" opacity="0.63"/><path d="M217.18 371.68L246.20 359.57" stroke="#3c3a38" stroke-width="0.61" opacity="0.61"/><path d="M246.20 359.57L273.25 348.28" stroke="#3c3a38" stroke-width="0.59" opacity="0.58"/><path d="M273.25 348.28L298.52 337.74" stroke="#3c3a38" stroke-width="0.58" opacity="0.56"/><path d="M298.52 337.74L322.18 327.87" stroke="#3c3a38" stroke-width="0.56" opacity="0.53"/><path d="M322.18 327.87L344.38 318.61" stroke="#3c3a38" stroke-width="0.54" opacity="0.50"/><path d="M344.38 318.61L365.24 309.90" stroke="#3c3a38" stroke-width="0.53" opacity="0.48"/><path d="M365.24 309.90L384.90 301.70" stroke="#3c3a38" stroke-width="0.51" opacity="0.45"/><path d="M158.54 365.53L176.47 378.08" stroke="#3c3a38" stroke-width="0.62" opacity="0.62"/><path d="M176.47 378.08L195.80 391.60" stroke="#3c3a38" stroke-width="0.63" opacity="0.65"/><path d="M195.80 391.60L216.70 406.22" stroke="#3c3a38" stroke-width="0.65" opacity="0.67"/><path d="M216.70 406.22L239.37 422.08" stroke="#3c3a38" stroke-width="0.66" opacity="0.70"/><path d="M239.37 422.08L264.04 439.35" stroke="#3c3a38" stroke-width="0.68" opacity="0.73"/><path d="M264.04 439.35L291.00 458.21" stroke="#3c3a38" stroke-width="0.70" opacity="0.75"/><path d="M291.00 458.21L320.57 478.90" stroke="#3c3a38" stroke-width="0.71" opacity="0.78"/><path d="M320.57 478.90L353.16 501.70" stroke="#3c3a38" stroke-width="0.73" opacity="0.80"/><path d="M353.16 501.70L389.25 526.95" stroke="#3c3a38" stroke-width="0.74" opacity="0.83"/><path d="M389.25 526.95L429.43 555.07" stroke="#3c3a38" stroke-width="0.76" opacity="0.85"/><path d="M125.01 422.06L161.83 406.22" stroke="#3c3a38" stroke-width="0.66" opacity="0.70"/><path d="M161.83 406.22L195.80 391.60" stroke="#3c3a38" stroke-width="0.65" opacity="0.67"/><path d="M195.80 391.60L227.25 378.07" stroke="#3c3a38" stroke-width="0.63" opacity="0.65"/><path d="M227.25 378.07L256.44 365.51" stroke="#3c3a38" stroke-width="0.62" opacity="0.62"/><path d="M256.44 365.51L283.60 353.82" stroke="#3c3a38" stroke-width="0.60" opacity="0.59"/><path d="M283.60 353.82L308.95 342.92" stroke="#3c3a38" stroke-width="0.58" opacity="0.57"/><path d="M308.95 342.92L332.66 332.72" stroke="#3c3a38" stroke-width="0.57" opacity="0.54"/><path d="M332.66 332.72L354.88 323.15" stroke="#3c3a38" stroke-width="0.55" opacity="0.52"/><path d="M354.88 323.15L375.75 314.18" stroke="#3c3a38" stroke-width="0.54" opacity="0.49"/><path d="M375.75 314.18L395.39 305.73" stroke="#3c3a38" stroke-width="0.52" opacity="0.47"/><path d="M174.08 359.59L192.26 371.68" stroke="#3c3a38" stroke-width="0.61" opacity="0.61"/><path d="M192.26 371.68L211.82 384.71" stroke="#3c3a38" stroke-width="0.62" opacity="0.63"/><path d="M211.82 384.71L232.95 398.77" stroke="#3c3a38" stroke-width="0.64" opacity="0.66"/><path d="M232.95 398.77L255.83 413.99" stroke="#3c3a38" stroke-width="0.66" opacity="0.69"/><path d="M255.83 413.99L280.68 430.54" stroke="#3c3a38" stroke-width="0.67" opacity="0.71"/><path d="M280.68 430.54L307.79 448.58" stroke="#3c3a38" stroke-width="0.69" opacity="0.74"/><path d="M307.79 448.58L337.46 468.33" stroke="#3c3a38" stroke-width="0.70" opacity="0.76"/><path d="M337.46 468.33L370.09 490.04" stroke="#3c3a38" stroke-width="0.72" opacity="0.79"/><path d="M370.09 490.04L406.13 514.03" stroke="#3c3a38" stroke-width="0.74" opacity="0.82"/><path d="M406.13 514.03L446.14 540.66" stroke="#3c3a38" stroke-width="0.75" opacity="0.84"/><path d="M134.60 430.50L171.79 413.98" stroke="#3c3a38" stroke-width="0.67" opacity="0.71"/><path d="M171.79 413.98L206.04 398.77" stroke="#3c3a38" stroke-width="0.66" opacity="0.69"/><path d="M206.04 398.77L237.70 384.71" stroke="#3c3a38" stroke-width="0.64" opacity="0.66"/><path d="M237.70 384.71L267.05 371.67" stroke="#3c3a38" stroke-width="0.62" opacity="0.63"/><path d="M267.05 371.67L294.33 359.56" stroke="#3c3a38" stroke-width="0.61" opacity="0.61"/><path d="M294.33 359.56L319.75 348.27" stroke="#3c3a38" stroke-width="0.59" opacity="0.58"/><path d="M319.75 348.27L343.49 337.72" stroke="#3c3a38" stroke-width="0.58" opacity="0.56"/><path d="M343.49 337.72L365.73 327.85" stroke="#3c3a38" stroke-width="0.56" opacity="0.53"/><path d="M365.73 327.85L386.59 318.58" stroke="#3c3a38" stroke-width="0.54" opacity="0.50"/><path d="M386.59 318.58L406.20 309.88" stroke="#3c3a38" stroke-width="0.53" opacity="0.48"/><path d="M189.08 353.85L207.47 365.52" stroke="#3c3a38" stroke-width="0.60" opacity="0.59"/><path d="M207.47 365.52L227.25 378.07" stroke="#3c3a38" stroke-width="0.62" opacity="0.62"/><path d="M227.25 378.07L248.57 391.60" stroke="#3c3a38" stroke-width="0.63" opacity="0.65"/><path d="M248.57 391.60L271.62 406.23" stroke="#3c3a38" stroke-width="0.65" opacity="0.67"/><path d="M271.62 406.23L296.62 422.10" stroke="#3c3a38" stroke-width="0.66" opacity="0.70"/><path d="M296.62 422.10L323.84 439.37" stroke="#3c3a38" stroke-width="0.68" opacity="0.73"/><path d="M323.84 439.37L353.58 458.24" stroke="#3c3a38" stroke-width="0.70" opacity="0.75"/><path d="M353.58 458.24L386.20 478.94" stroke="#3c3a38" stroke-width="0.71" opacity="0.78"/><path d="M386.20 478.94L422.15 501.76" stroke="#3c3a38" stroke-width="0.73" opacity="0.80"/><path d="M422.15 501.76L461.97 527.02" stroke="#3c3a38" stroke-width="0.74" opacity="0.83"/><path d="M144.61 439.30L182.17 422.07" stroke="#3c3a38" stroke-width="0.68" opacity="0.73"/><path d="M182.17 422.07L216.70 406.22" stroke="#3c3a38" stroke-width="0.66" opacity="0.70"/><path d="M216.70 406.22L248.57 391.60" stroke="#3c3a38" stroke-width="0.65" opacity="0.67"/><path d="M248.57 391.60L278.06 378.07" stroke="#3c3a38" stroke-width="0.63" opacity="0.65"/><path d="M278.06 378.07L305.44 365.50" stroke="#3c3a38" stroke-width="0.62" opacity="0.62"/><path d="M305.44 365.50L330.92 353.81" stroke="#3c3a38" stroke-width="0.60" opacity="0.59"/><path d="M330.92 353.81L354.69 342.90" stroke="#3c3a38" stroke-width="0.58" opacity="0.57"/><path d="M354.69 342.90L376.93 332.70" stroke="#3c3a38" stroke-width="0.57" opacity="0.54"/><path d="M376.93 332.70L397.77 323.13" stroke="#3c3a38" stroke-width="0.55" opacity="0.52"/><path d="M397.77 323.13L417.34 314.15" stroke="#3c3a38" stroke-width="0.54" opacity="0.49"/><path d="M203.57 348.31L222.15 359.58" stroke="#3c3a38" stroke-width="0.59" opacity="0.58"/><path d="M222.15 359.58L242.11 371.68" stroke="#3c3a38" stroke-width="0.61" opacity="0.61"/><path d="M242.11 371.68L263.59 384.70" stroke="#3c3a38" stroke-width="0.62" opacity="0.63"/><path d="M263.59 384.70L286.79 398.77" stroke="#3c3a38" stroke-width="0.64" opacity="0.66"/><path d="M286.79 398.77L311.91 414.00" stroke="#3c3a38" stroke-width="0.66" opacity="0.69"/><path d="M311.91 414.00L339.21 430.56" stroke="#3c3a38" stroke-width="0.67" opacity="0.71"/><path d="M339.21 430.56L368.97 448.60" stroke="#3c3a38" stroke-width="0.69" opacity="0.74"/><path d="M368.97 448.60L401.56 468.37" stroke="#3c3a38" stroke-width="0.70" opacity="0.76"/><path d="M401.56 468.37L437.39 490.09" stroke="#3c3a38" stroke-width="0.72" opacity="0.79"/><path d="M437.39 490.09L476.97 514.09" stroke="#3c3a38" stroke-width="0.74" opacity="0.82"/><path d="M155.08 448.51L192.99 430.51" stroke="#3c3a38" stroke-width="0.69" opacity="0.74"/><path d="M192.99 430.51L227.80 413.99" stroke="#3c3a38" stroke-width="0.67" opacity="0.71"/><path d="M227.80 413.99L259.86 398.77" stroke="#3c3a38" stroke-width="0.66" opacity="0.69"/><path d="M259.86 398.77L289.49 384.70" stroke="#3c3a38" stroke-width="0.64" opacity="0.66"/><path d="M289.49 384.70L316.96 371.67" stroke="#3c3a38" stroke-width="0.62" opacity="0.63"/><path d="M316.96 371.67L342.49 359.55" stroke="#3c3a38" stroke-width="0.61" opacity="0.61"/><path d="M342.49 359.55L366.28 348.25" stroke="#3c3a38" stroke-width="0.59" opacity="0.58"/><path d="M366.28 348.25L388.50 337.70" stroke="#3c3a38" stroke-width="0.58" opacity="0.56"/><path d="M388.50 337.70L409.30 327.83" stroke="#3c3a38" stroke-width="0.56" opacity="0.53"/><path d="M409.30 327.83L428.82 318.56" stroke="#3c3a38" stroke-width="0.54" opacity="0.50"/><path d="M217.57 342.95L236.33 353.84" stroke="#3c3a38" stroke-width="0.58" opacity="0.57"/><path d="M236.33 353.84L256.44 365.51" stroke="#3c3a38" stroke-width="0.60" opacity="0.59"/><path d="M256.44 365.51L278.06 378.07" stroke="#3c3a38" stroke-width="0.62" opacity="0.62"/><path d="M278.06 378.07L301.37 391.60" stroke="#3c3a38" stroke-width="0.63" opacity="0.65"/><path d="M301.37 391.60L326.58 406.24" stroke="#3c3a38" stroke-width="0.65" opacity="0.67"/><path d="M326.58 406.24L353.93 422.11" stroke="#3c3a38" stroke-width="0.66" opacity="0.70"/><path d="M353.93 422.11L383.69 439.39" stroke="#3c3a38" stroke-width="0.68" opacity="0.72"/><path d="M383.69 439.39L416.22 458.27" stroke="#3c3a38" stroke-width="0.70" opacity="0.75"/><path d="M416.22 458.27L451.90 478.99" stroke="#3c3a38" stroke-width="0.71" opacity="0.78"/><path d="M451.90 478.99L491.22 501.82" stroke="#3c3a38" stroke-width="0.73" opacity="0.80"/><path d="M166.02 458.15L204.30 439.33" stroke="#3c3a38" stroke-width="0.70" opacity="0.75"/><path d="M204.30 439.33L239.37 422.08" stroke="#3c3a38" stroke-width="0.68" opacity="0.73"/><path d="M239.37 422.08L271.62 406.23" stroke="#3c3a38" stroke-width="0.66" opacity="0.70"/><path d="M271.62 406.23L301.37 391.60" stroke="#3c3a38" stroke-width="0.65" opacity="0.67"/><path d="M301.37 391.60L328.91 378.06" stroke="#3c3a38" stroke-width="0.63" opacity="0.65"/><path d="M328.91 378.06L354.47 365.49" stroke="#3c3a38" stroke-width="0.62" opacity="0.62"/><path d="M354.47 365.49L378.26 353.80" stroke="#3c3a38" stroke-width="0.60" opacity="0.59"/><path d="M378.26 353.80L400.46 342.88" stroke="#3c3a38" stroke-width="0.58" opacity="0.57"/><path d="M400.46 342.88L421.22 332.68" stroke="#3c3a38" stroke-width="0.57" opacity="0.54"/><path d="M421.22 332.68L440.68 323.11" stroke="#3c3a38" stroke-width="0.55" opacity="0.52"/><path d="M231.12 337.77L250.02 348.29" stroke="#3c3a38" stroke-width="0.58" opacity="0.56"/><path d="M250.02 348.29L270.26 359.56" stroke="#3c3a38" stroke-width="0.59" opacity="0.58"/><path d="M270.26 359.56L292.00 371.67" stroke="#3c3a38" stroke-width="0.61" opacity="0.61"/><path d="M292.00 371.67L315.40 384.70" stroke="#3c3a38" stroke-width="0.62" opacity="0.63"/><path d="M315.40 384.70L340.67 398.77" stroke="#3c3a38" stroke-width="0.64" opacity="0.66"/><path d="M340.67 398.77L368.04 414.01" stroke="#3c3a38" stroke-width="0.66" opacity="0.69"/><path d="M368.04 414.01L397.78 430.57" stroke="#3c3a38" stroke-width="0.67" opacity="0.71"/><path d="M397.78 430.57L430.21 448.63" stroke="#3c3a38" stroke-width="0.69" opacity="0.74"/><path d="M430.21 448.63L465.72 468.40" stroke="#3c3a38" stroke-width="0.70" opacity="0.76"/><path d="M465.72 468.40L504.76 490.14" stroke="#3c3a38" stroke-width="0.72" opacity="0.79"/><path d="M177.49 468.24L216.12 448.54" stroke="#3c3a38" stroke-width="0.70" opacity="0.76"/><path d="M216.12 448.54L251.44 430.53" stroke="#3c3a38" stroke-width="0.69" opacity="0.74"/><path d="M251.44 430.53L283.86 414.00" stroke="#3c3a38" stroke-width="0.67" opacity="0.71"/><path d="M283.86 414.00L313.73 398.77" stroke="#3c3a38" stroke-width="0.66" opacity="0.69"/><path d="M313.73 398.77L341.32 384.70" stroke="#3c3a38" stroke-width="0.64" opacity="0.66"/><path d="M341.32 384.70L366.90 371.66" stroke="#3c3a38" stroke-width="0.62" opacity="0.63"/><path d="M366.90 371.66L390.68 359.54" stroke="#3c3a38" stroke-width="0.61" opacity="0.61"/><path d="M390.68 359.54L412.84 348.24" stroke="#3c3a38" stroke-width="0.59" opacity="0.58"/><path d="M412.84 348.24L433.53 337.69" stroke="#3c3a38" stroke-width="0.58" opacity="0.56"/><path d="M433.53 337.69L452.91 327.81" stroke="#3c3a38" stroke-width="0.56" opacity="0.53"/><path d="M244.22 332.75L263.25 342.93" stroke="#3c3a38" stroke-width="0.57" opacity="0.54"/><path d="M263.25 342.93L283.60 353.82" stroke="#3c3a38" stroke-width="0.58" opacity="0.57"/><path d="M283.60 353.82L305.44 365.50" stroke="#3c3a38" stroke-width="0.60" opacity="0.59"/><path d="M305.44 365.50L328.91 378.06" stroke="#3c3a38" stroke-width="0.62" opacity="0.62"/><path d="M328.91 378.06L354.22 391.60" stroke="#3c3a38" stroke-width="0.63" opacity="0.65"/><path d="M354.22 391.60L381.59 406.24" stroke="#3c3a38" stroke-width="0.65" opacity="0.67"/><path d="M381.59 406.24L411.28 422.12" stroke="#3c3a38" stroke-width="0.66" opacity="0.70"/><path d="M411.28 422.12L443.60 439.41" stroke="#3c3a38" stroke-width="0.68" opacity="0.73"/><path d="M443.60 439.41L478.91 458.30" stroke="#3c3a38" stroke-width="0.70" opacity="0.75"/><path d="M478.91 458.30L517.66 479.03" stroke="#3c3a38" stroke-width="0.71" opacity="0.78"/><path d="M189.51 478.81L228.48 458.18" stroke="#3c3a38" stroke-width="0.71" opacity="0.78"/><path d="M228.48 458.18L264.04 439.35" stroke="#3c3a38" stroke-width="0.70" opacity="0.75"/><path d="M264.04 439.35L296.62 422.10" stroke="#3c3a38" stroke-width="0.68" opacity="0.73"/><path d="M296.62 422.10L326.58 406.24" stroke="#3c3a38" stroke-width="0.66" opacity="0.70"/><path d="M326.58 406.24L354.22 391.60" stroke="#3c3a38" stroke-width="0.65" opacity="0.67"/><path d="M354.22 391.60L379.80 378.06" stroke="#3c3a38" stroke-width="0.63" opacity="0.65"/><path d="M379.80 378.06L403.55 365.48" stroke="#3c3a38" stroke-width="0.62" opacity="0.62"/><path d="M403.55 365.48L425.65 353.78" stroke="#3c3a38" stroke-width="0.60" opacity="0.59"/><path d="M425.65 353.78L446.26 342.87" stroke="#3c3a38" stroke-width="0.58" opacity="0.57"/><path d="M446.26 342.87L465.54 332.66" stroke="#3c3a38" stroke-width="0.57" opacity="0.54"/><path d="M256.91 327.90L276.05 337.75" stroke="#3c3a38" stroke-width="0.56" opacity="0.53"/><path d="M276.05 337.75L296.50 348.28" stroke="#3c3a38" stroke-width="0.58" opacity="0.56"/><path d="M296.50 348.28L318.40 359.55" stroke="#3c3a38" stroke-width="0.59" opacity="0.58"/><path d="M318.40 359.55L341.93 371.66" stroke="#3c3a38" stroke-width="0.61" opacity="0.61"/><path d="M341.93 371.66L367.26 384.70" stroke="#3c3a38" stroke-width="0.62" opacity="0.63"/><path d="M367.26 384.70L394.60 398.78" stroke="#3c3a38" stroke-width="0.64" opacity="0.66"/><path d="M394.60 398.78L424.22 414.02" stroke="#3c3a38" stroke-width="0.66" opacity="0.69"/><path d="M424.22 414.02L456.41 430.59" stroke="#3c3a38" stroke-width="0.67" opacity="0.71"/><path d="M456.41 430.59L491.51 448.66" stroke="#3c3a38" stroke-width="0.69" opacity="0.74"/><path d="M491.51 448.66L529.94 468.44" stroke="#3c3a38" stroke-width="0.70" opacity="0.76"/><path d="M202.13 489.92L241.43 468.27" stroke="#3c3a38" stroke-width="0.72" opacity="0.79"/><path d="M241.43 468.27L277.22 448.57" stroke="#3c3a38" stroke-width="0.70" opacity="0.76"/><path d="M277.22 448.57L309.94 430.55" stroke="#3c3a38" stroke-width="0.69" opacity="0.74"/><path d="M309.94 430.55L339.97 414.01" stroke="#3c3a38" stroke-width="0.67" opacity="0.71"/><path d="M339.97 414.01L367.63 398.77" stroke="#3c3a38" stroke-width="0.66" opacity="0.69"/><path d="M367.63 398.77L393.20 384.70" stroke="#3c3a38" stroke-width="0.64" opacity="0.66"/><path d="M393.20 384.70L416.89 371.65" stroke="#3c3a38" stroke-width="0.62" opacity="0.63"/><path d="M416.89 371.65L438.91 359.52" stroke="#3c3a38" stroke-width="0.61" opacity="0.61"/><path d="M438.91 359.52L459.43 348.22" stroke="#3c3a38" stroke-width="0.59" opacity="0.58"/><path d="M459.43 348.22L478.60 337.67" stroke="#3c3a38" stroke-width="0.58" opacity="0.56"/><path d="M269.20 323.20L288.43 332.74" stroke="#3c3a38" stroke-width="0.55" opacity="0.52"/><path d="M288.43 332.74L308.95 342.92" stroke="#3c3a38" stroke-width="0.57" opacity="0.54"/><path d="M308.95 342.92L330.92 353.81" stroke="#3c3a38" stroke-width="0.58" opacity="0.57"/><path d="M330.92 353.81L354.47 365.49" stroke="#3c3a38" stroke-width="0.60" opacity="0.59"/><path d="M354.47 365.49L379.80 378.06" stroke="#3c3a38" stroke-width="0.62" opacity="0.62"/><path d="M379.80 378.06L407.11 391.60" stroke="#3c3a38" stroke-width="0.63" opacity="0.65"/><path d="M407.11 391.60L436.65 406.25" stroke="#3c3a38" stroke-width="0.65" opacity="0.67"/><path d="M436.65 406.25L468.68 422.14" stroke="#3c3a38" stroke-width="0.66" opacity="0.70"/><path d="M468.68 422.14L503.56 439.43" stroke="#3c3a38" stroke-width="0.68" opacity="0.73"/><path d="M503.56 439.43L541.67 458.34" stroke="#3c3a38" stroke-width="0.70" opacity="0.75"/><path d="M215.39 501.59L255.01 478.86" stroke="#3c3a38" stroke-width="0.73" opacity="0.80"/><path d="M255.01 478.86L291.00 458.21" stroke="#3c3a38" stroke-width="0.71" opacity="0.78"/><path d="M291.00 458.21L323.84 439.37" stroke="#3c3a38" stroke-width="0.70" opacity="0.75"/><path d="M323.84 439.37L353.93 422.11" stroke="#3c3a38" stroke-width="0.68" opacity="0.73"/><path d="M353.93 422.11L381.59 406.24" stroke="#3c3a38" stroke-width="0.66" opacity="0.70"/><path d="M381.59 406.24L407.11 391.60" stroke="#3c3a38" stroke-width="0.65" opacity="0.67"/><path d="M407.11 391.60L430.73 378.05" stroke="#3c3a38" stroke-width="0.63" opacity="0.65"/><path d="M430.73 378.05L452.66 365.47" stroke="#3c3a38" stroke-width="0.62" opacity="0.62"/><path d="M452.66 365.47L473.06 353.77" stroke="#3c3a38" stroke-width="0.60" opacity="0.59"/><path d="M473.06 353.77L492.10 342.85" stroke="#3c3a38" stroke-width="0.58" opacity="0.57"/><path d="M281.11 318.64L300.42 327.88" stroke="#3c3a38" stroke-width="0.54" opacity="0.50"/><path d="M300.42 327.88L321.00 337.73" stroke="#3c3a38" stroke-width="0.56" opacity="0.53"/><path d="M321.00 337.73L343.01 348.26" stroke="#3c3a38" stroke-width="0.58" opacity="0.56"/><path d="M343.01 348.26L366.58 359.54" stroke="#3c3a38" stroke-width="0.59" opacity="0.58"/><path d="M366.58 359.54L391.89 371.65" stroke="#3c3a38" stroke-width="0.61" opacity="0.61"/><path d="M391.89 371.65L419.15 384.70" stroke="#3c3a38" stroke-width="0.62" opacity="0.63"/><path d="M419.15 384.70L448.58 398.78" stroke="#3c3a38" stroke-width="0.64" opacity="0.66"/><path d="M448.58 398.78L480.45 414.03" stroke="#3c3a38" stroke-width="0.66" opacity="0.69"/><path d="M480.45 414.03L515.09 430.61" stroke="#3c3a38" stroke-width="0.67" opacity="0.71"/><path d="M515.09 430.61L552.87 448.68" stroke="#3c3a38" stroke-width="0.69" opacity="0.74"/><path d="M229.34 513.86L269.26 489.97" stroke="#3c3a38" stroke-width="0.74" opacity="0.82"/><path d="M269.26 489.97L305.44 468.31" stroke="#3c3a38" stroke-width="0.72" opacity="0.79"/><path d="M305.44 468.31L338.37 448.59" stroke="#3c3a38" stroke-width="0.70" opacity="0.76"/><path d="M338.37 448.59L368.49 430.56" stroke="#3c3a38" stroke-width="0.69" opacity="0.74"/><path d="M368.49 430.56L396.13 414.02" stroke="#3c3a38" stroke-width="0.67" opacity="0.71"/><path d="M396.13 414.02L421.58 398.78" stroke="#3c3a38" stroke-width="0.66" opacity="0.69"/><path d="M421.58 398.78L445.11 384.69" stroke="#3c3a38" stroke-width="0.64" opacity="0.66"/><path d="M445.11 384.69L466.91 371.64" stroke="#3c3a38" stroke-width="0.62" opacity="0.63"/><path d="M466.91 371.64L487.18 359.51" stroke="#3c3a38" stroke-width="0.61" opacity="0.61"/><path d="M487.18 359.51L506.06 348.21" stroke="#3c3a38" stroke-width="0.59" opacity="0.58"/><path d="M292.66 314.22L312.03 323.18" stroke="#3c3a38" stroke-width="0.54" opacity="0.49"/><path d="M312.03 323.18L332.66 332.72" stroke="#3c3a38" stroke-width="0.55" opacity="0.52"/><path d="M332.66 332.72L354.69 342.90" stroke="#3c3a38" stroke-width="0.57" opacity="0.54"/><path d="M354.69 342.90L378.26 353.80" stroke="#3c3a38" stroke-width="0.58" opacity="0.57"/><path d="M378.26 353.80L403.55 365.48" stroke="#3c3a38" stroke-width="0.60" opacity="0.59"/><path d="M403.55 365.48L430.73 378.05" stroke="#3c3a38" stroke-width="0.62" opacity="0.62"/><path d="M430.73 378.05L460.05 391.60" stroke="#3c3a38" stroke-width="0.63" opacity="0.65"/><path d="M460.05 391.60L491.75 406.25" stroke="#3c3a38" stroke-width="0.65" opacity="0.67"/><path d="M491.75 406.25L526.14 422.15" stroke="#3c3a38" stroke-width="0.66" opacity="0.70"/><path d="M526.14 422.15L563.57 439.46" stroke="#3c3a38" stroke-width="0.68" opacity="0.73"/><path d="M244.04 526.80L284.24 501.64" stroke="#3c3a38" stroke-width="0.74" opacity="0.83"/><path d="M284.24 501.64L320.57 478.90" stroke="#3c3a38" stroke-width="0.73" opacity="0.80"/><path d="M320.57 478.90L353.58 458.24" stroke="#3c3a38" stroke-width="0.71" opacity="0.78"/><path d="M353.58 458.24L383.69 439.39" stroke="#3c3a38" stroke-width="0.70" opacity="0.75"/><path d="M383.69 439.39L411.28 422.12" stroke="#3c3a38" stroke-width="0.68" opacity="0.73"/><path d="M411.28 422.12L436.65 406.25" stroke="#3c3a38" stroke-width="0.66" opacity="0.70"/><path d="M436.65 406.25L460.05 391.60" stroke="#3c3a38" stroke-width="0.65" opacity="0.67"/><path d="M460.05 391.60L481.70 378.04" stroke="#3c3a38" stroke-width="0.63" opacity="0.65"/><path d="M481.70 378.04L501.80 365.46" stroke="#3c3a38" stroke-width="0.62" opacity="0.62"/><path d="M501.80 365.46L520.51 353.75" stroke="#3c3a38" stroke-width="0.60" opacity="0.59"/><path d="M303.86 309.94L323.28 318.62" stroke="#3c3a38" stroke-width="0.53" opacity="0.48"/><path d="M323.28 318.62L343.95 327.86" stroke="#3c3a38" stroke-width="0.54" opacity="0.50"/><path d="M343.95 327.86L365.99 337.71" stroke="#3c3a38" stroke-width="0.56" opacity="0.53"/><path d="M365.99 337.71L389.55 348.25" stroke="#3c3a38" stroke-width="0.58" opacity="0.56"/><path d="M389.55 348.25L414.79 359.53" stroke="#3c3a38" stroke-width="0.59" opacity="0.58"/><path d="M414.79 359.53L441.90 371.65" stroke="#3c3a38" stroke-width="0.61" opacity="0.61"/><path d="M441.90 371.65L471.08 384.69" stroke="#3c3a38" stroke-width="0.62" opacity="0.63"/><path d="M471.08 384.69L502.59 398.78" stroke="#3c3a38" stroke-width="0.64" opacity="0.66"/><path d="M502.59 398.78L536.73 414.04" stroke="#3c3a38" stroke-width="0.66" opacity="0.69"/><path d="M536.73 414.04L573.82 430.62" stroke="#3c3a38" stroke-width="0.67" opacity="0.71"/><path d="M259.56 540.45L300.00 513.93" stroke="#3c3a38" stroke-width="0.75" opacity="0.84"/><path d="M300.00 513.93L336.46 490.02" stroke="#3c3a38" stroke-width="0.74" opacity="0.82"/><path d="M336.46 490.02L369.50 468.35" stroke="#3c3a38" stroke-width="0.72" opacity="0.79"/><path d="M369.50 468.35L399.59 448.62" stroke="#3c3a38" stroke-width="0.70" opacity="0.76"/><path d="M399.59 448.62L427.09 430.58" stroke="#3c3a38" stroke-width="0.69" opacity="0.74"/><path d="M427.09 430.58L452.33 414.03" stroke="#3c3a38" stroke-width="0.67" opacity="0.71"/><path d="M452.33 414.03L475.58 398.78" stroke="#3c3a38" stroke-width="0.66" opacity="0.69"/><path d="M475.58 398.78L497.06 384.69" stroke="#3c3a38" stroke-width="0.64" opacity="0.66"/><path d="M497.06 384.69L516.97 371.64" stroke="#3c3a38" stroke-width="0.62" opacity="0.63"/><path d="M516.97 371.64L535.48 359.50" stroke="#3c3a38" stroke-width="0.61" opacity="0.61"/><path d="M314.74 305.78L334.19 314.20" stroke="#3c3a38" stroke-width="0.52" opacity="0.47"/><path d="M334.19 314.20L354.88 323.15" stroke="#3c3a38" stroke-width="0.54" opacity="0.49"/><path d="M354.88 323.15L376.93 332.70" stroke="#3c3a38" stroke-width="0.55" opacity="0.52"/><path d="M376.93 332.70L400.46 342.88" stroke="#3c3a38" stroke-width="0.57" opacity="0.54"/><path d="M400.46 342.88L425.65 353.78" stroke="#3c3a38" stroke-width="0.58" opacity="0.57"/><path d="M425.65 353.78L452.66 365.47" stroke="#3c3a38" stroke-width="0.60" opacity="0.59"/><path d="M452.66 365.47L481.70 378.04" stroke="#3c3a38" stroke-width="0.62" opacity="0.62"/><path d="M481.70 378.04L513.02 391.60" stroke="#3c3a38" stroke-width="0.63" opacity="0.65"/><path d="M513.02 391.60L546.89 406.26" stroke="#3c3a38" stroke-width="0.65" opacity="0.67"/><path d="M546.89 406.26L583.64 422.16" stroke="#3c3a38" stroke-width="0.66" opacity="0.70"/><path d="M275.95 554.88L316.61 526.88" stroke="#3c3a38" stroke-width="0.76" opacity="0.86"/><path d="M316.61 526.88L353.16 501.70" stroke="#3c3a38" stroke-width="0.74" opacity="0.83"/><path d="M353.16 501.70L386.20 478.94" stroke="#3c3a38" stroke-width="0.73" opacity="0.80"/><path d="M386.20 478.94L416.22 458.27" stroke="#3c3a38" stroke-width="0.71" opacity="0.78"/><path d="M416.22 458.27L443.60 439.41" stroke="#3c3a38" stroke-width="0.70" opacity="0.75"/><path d="M443.60 439.41L468.68 422.14" stroke="#3c3a38" stroke-width="0.68" opacity="0.73"/><path d="M468.68 422.14L491.75 406.25" stroke="#3c3a38" stroke-width="0.66" opacity="0.70"/><path d="M491.75 406.25L513.02 391.60" stroke="#3c3a38" stroke-width="0.65" opacity="0.67"/><path d="M513.02 391.60L532.71 378.04" stroke="#3c3a38" stroke-width="0.63" opacity="0.65"/><path d="M532.71 378.04L550.99 365.45" stroke="#3c3a38" stroke-width="0.62" opacity="0.62"/><path d="M325.29 301.74L344.78 309.91" stroke="#3c3a38" stroke-width="0.51" opacity="0.45"/><path d="M344.78 309.91L365.48 318.60" stroke="#3c3a38" stroke-width="0.53" opacity="0.48"/><path d="M365.48 318.60L387.51 327.84" stroke="#3c3a38" stroke-width="0.54" opacity="0.50"/><path d="M387.51 327.84L411.01 337.70" stroke="#3c3a38" stroke-width="0.56" opacity="0.53"/><path d="M411.01 337.70L436.13 348.23" stroke="#3c3a38" stroke-width="0.58" opacity="0.56"/><path d="M436.13 348.23L463.04 359.52" stroke="#3c3a38" stroke-width="0.59" opacity="0.58"/><path d="M463.04 359.52L491.94 371.64" stroke="#3c3a38" stroke-width="0.61" opacity="0.61"/><path d="M491.94 371.64L523.05 384.69" stroke="#3c3a38" stroke-width="0.62" opacity="0.63"/><path d="M523.05 384.69L556.65 398.78" stroke="#3c3a38" stroke-width="0.64" opacity="0.66"/><path d="M556.65 398.78L593.05 414.05" stroke="#3c3a38" stroke-width="0.66" opacity="0.69"/><path d="M293.30 570.14L334.13 540.54" stroke="#3c3a38" stroke-width="0.77" opacity="0.87"/><path d="M334.13 540.54L370.73 514.00" stroke="#3c3a38" stroke-width="0.75" opacity="0.84"/><path d="M370.73 514.00L403.73 490.07" stroke="#3c3a38" stroke-width="0.74" opacity="0.82"/><path d="M403.73 490.07L433.63 468.38" stroke="#3c3a38" stroke-width="0.72" opacity="0.79"/><path d="M433.63 468.38L460.86 448.64" stroke="#3c3a38" stroke-width="0.70" opacity="0.76"/><path d="M460.86 448.64L485.74 430.60" stroke="#3c3a38" stroke-width="0.69" opacity="0.74"/><path d="M485.74 430.60L508.58 414.04" stroke="#3c3a38" stroke-width="0.67" opacity="0.71"/><path d="M508.58 414.04L529.62 398.78" stroke="#3c3a38" stroke-width="0.66" opacity="0.69"/><path d="M529.62 398.78L549.06 384.69" stroke="#3c3a38" stroke-width="0.64" opacity="0.66"/><path d="M549.06 384.69L567.07 371.63" stroke="#3c3a38" stroke-width="0.62" opacity="0.63"/><path d="M335.55 297.82L355.05 305.75" stroke="#3c3a38" stroke-width="0.50" opacity="0.44"/><path d="M355.05 305.75L375.75 314.18" stroke="#3c3a38" stroke-width="0.52" opacity="0.47"/><path d="M375.75 314.18L397.77 323.13" stroke="#3c3a38" stroke-width="0.54" opacity="0.49"/><path d="M397.77 323.13L421.22 332.68" stroke="#3c3a38" stroke-width="0.55" opacity="0.52"/><path d="M421.22 332.68L446.26 342.87" stroke="#3c3a38" stroke-width="0.57" opacity="0.54"/><path d="M446.26 342.87L473.06 353.77" stroke="#3c3a38" stroke-width="0.58" opacity="0.57"/><path d="M473.06 353.77L501.80 365.46" stroke="#3c3a38" stroke-width="0.60" opacity="0.59"/><path d="M501.80 365.46L532.71 378.04" stroke="#3c3a38" stroke-width="0.62" opacity="0.62"/><path d="M532.71 378.04L566.04 391.60" stroke="#3c3a38" stroke-width="0.63" opacity="0.65"/><path d="M566.04 391.60L602.08 406.27" stroke="#3c3a38" stroke-width="0.65" opacity="0.67"/><path d="M311.69 586.33L352.65 554.97" stroke="#3c3a38" stroke-width="0.78" opacity="0.88"/><path d="M352.65 554.97L389.25 526.95" stroke="#3c3a38" stroke-width="0.76" opacity="0.85"/><path d="M389.25 526.95L422.15 501.76" stroke="#3c3a38" stroke-width="0.74" opacity="0.83"/><path d="M422.15 501.76L451.90 478.99" stroke="#3c3a38" stroke-width="0.73" opacity="0.80"/><path d="M451.90 478.99L478.91 458.30" stroke="#3c3a38" stroke-width="0.71" opacity="0.78"/><path d="M478.91 458.30L503.56 439.43" stroke="#3c3a38" stroke-width="0.70" opacity="0.75"/><path d="M503.56 439.43L526.14 422.15" stroke="#3c3a38" stroke-width="0.68" opacity="0.73"/><path d="M526.14 422.15L546.89 406.26" stroke="#3c3a38" stroke-width="0.66" opacity="0.70"/><path d="M546.89 406.26L566.04 391.60" stroke="#3c3a38" stroke-width="0.65" opacity="0.67"/><path d="M566.04 391.60L583.76 378.03" stroke="#3c3a38" stroke-width="0.63" opacity="0.65"/><path d="M345.51 294.01L365.02 301.71" stroke="#3c3a38" stroke-width="0.50" opacity="0.43"/><path d="M365.02 301.71L385.72 309.89" stroke="#3c3a38" stroke-width="0.51" opacity="0.45"/><path d="M385.72 309.89L407.70 318.57" stroke="#3c3a38" stroke-width="0.53" opacity="0.48"/><path d="M407.70 318.57L431.10 327.82" stroke="#3c3a38" stroke-width="0.54" opacity="0.50"/><path d="M431.10 327.82L456.06 337.68" stroke="#3c3a38" stroke-width="0.56" opacity="0.53"/><path d="M456.06 337.68L482.74 348.22" stroke="#3c3a38" stroke-width="0.58" opacity="0.56"/><path d="M482.74 348.22L511.32 359.51" stroke="#3c3a38" stroke-width="0.59" opacity="0.58"/><path d="M511.32 359.51L542.02 371.63" stroke="#3c3a38" stroke-width="0.61" opacity="0.61"/><path d="M542.02 371.63L575.07 384.69" stroke="#3c3a38" stroke-width="0.62" opacity="0.63"/><path d="M575.07 384.69L610.76 398.79" stroke="#3c3a38" stroke-width="0.64" opacity="0.66"/><path d="M331.22 603.51L372.24 570.25" stroke="#3c3a38" stroke-width="0.78" opacity="0.89"/><path d="M372.24 570.25L408.78 540.62" stroke="#3c3a38" stroke-width="0.77" opacity="0.87"/><path d="M408.78 540.62L441.54 514.06" stroke="#3c3a38" stroke-width="0.75" opacity="0.84"/><path d="M441.54 514.06L471.07 490.12" stroke="#3c3a38" stroke-width="0.74" opacity="0.82"/><path d="M471.07 490.12L497.82 468.42" stroke="#3c3a38" stroke-width="0.72" opacity="0.79"/><path d="M497.82 468.42L522.18 448.67" stroke="#3c3a38" stroke-width="0.70" opacity="0.76"/><path d="M522.18 448.67L544.45 430.62" stroke="#3c3a38" stroke-width="0.69" opacity="0.74"/><path d="M544.45 430.62L564.88 414.05" stroke="#3c3a38" stroke-width="0.67" opacity="0.71"/><path d="M564.88 414.05L583.70 398.79" stroke="#3c3a38" stroke-width="0.66" opacity="0.69"/><path d="M583.70 398.79L601.09 384.69" stroke="#3c3a38" stroke-width="0.64" opacity="0.66"/><path d="M352.00 621.80L393.02 586.45" stroke="#3c3a38" stroke-width="0.79" opacity="0.91"/><path d="M393.02 586.45L429.43 555.07" stroke="#3c3a38" stroke-width="0.78" opacity="0.88"/><path d="M429.43 555.07L461.97 527.02" stroke="#3c3a38" stroke-width="0.76" opacity="0.85"/><path d="M461.97 527.02L491.22 501.82" stroke="#3c3a38" stroke-width="0.74" opacity="0.83"/><path d="M491.22 501.82L517.66 479.03" stroke="#3c3a38" stroke-width="0.73" opacity="0.80"/><path d="M517.66 479.03L541.67 458.34" stroke="#3c3a38" stroke-width="0.71" opacity="0.78"/><path d="M541.67 458.34L563.57 439.46" stroke="#3c3a38" stroke-width="0.70" opacity="0.75"/><path d="M563.57 439.46L583.64 422.16" stroke="#3c3a38" stroke-width="0.68" opacity="0.73"/><path d="M583.64 422.16L602.08 406.27" stroke="#3c3a38" stroke-width="0.66" opacity="0.70"/><path d="M602.08 406.27L619.10 391.60" stroke="#3c3a38" stroke-width="0.65" opacity="0.67"/><path d="M142.700 276.700L637 542.100" stroke="#5fd070" stroke-width=".5" opacity=".32" clip-path="url(#flr)"/><path d="M573.100 274.600L84 531.500" stroke="#f06464" stroke-width=".6" opacity=".6" clip-path="url(#flr)"/><ellipse cx="268" cy="404" rx="34" ry="9" fill="url(#gSh)" transform="rotate(14 268 404)"/><polygon points="297.60,381.40 342.90,406.70 409.90,369.70 366.00,346.00" fill="#10d42a"/><polygon points="297.60,381.40 342.90,406.70 342.90,422.60 298.20,396.10" fill="#07940f"/><polygon points="342.90,406.70 409.90,369.70 409.90,382.00 342.90,422.60" fill="#0aa817"/><path d="M342.9 406.7L342.9 422.6" stroke="#067a10" stroke-width=".5"/><polygon points="304.70,293.80 379.90,266.40 377.50,352.00 360.00,366.00 309.60,386.00" fill="url(#gPlate)"/><polygon points="297.05,290.85 304.70,293.80 309.60,386.00 301.60,380.00" fill="#0ba616"/><polygon points="297.05,290.85 372.30,263.80 379.90,266.40 304.70,293.80" fill="#10d228"/><path d="M304.7 293.8L309.6 386" stroke="#067a10" stroke-width=".45"/><polygon points="356.40,300.83 354.72,302.26 353.08,303.81 351.47,305.47 349.92,307.23 348.42,309.10 346.97,311.05 345.59,313.10 344.27,315.22 343.03,317.41 341.87,319.67 340.79,321.98 339.79,324.33 338.88,326.73 338.06,329.15 337.34,331.59 336.71,334.05 336.19,336.51 335.76,338.96 335.44,341.40 335.23,343.81 335.12,346.20 335.11,348.54 335.21,350.83 335.42,353.07 335.72,355.24 336.14,357.34 336.65,359.36 337.27,361.29 337.98,363.12 338.79,364.86 339.69,366.48 340.67,368.00 341.75,369.39 342.91,370.66 344.14,371.80 345.45,372.81 346.82,373.69 348.26,374.42 349.76,375.01 351.31,375.46 352.90,375.76 354.54,375.92 356.22,375.93 357.92,375.79 359.65,375.50 361.39,375.07 363.15,374.50 364.91,373.78 366.67,372.92 368.42,371.93 370.16,370.80 371.88,369.55 373.57,368.17 375.23,366.67 376.85,365.06 378.42,363.34 379.95,361.51 381.42,359.59 382.83,357.59 384.17,355.50 372.50,331.50" fill="#04680a"/><polygon points="313.00,360.00 318.00,372.00 330.00,384.00 343.00,389.50 352.00,388.00 358.00,384.00 351.00,383.00 338.00,377.00 325.00,366.00 316.00,352.00" fill="#031a05"/><polygon points="357.00,385.50 370.00,381.50 382.00,372.00 384.00,366.00 372.00,378.00 357.00,384.00" fill="#043f0a"/><polygon points="348.92,374.70 350.27,375.18 351.66,375.54 353.08,375.79 354.54,375.92 356.03,375.93 357.54,375.83 359.07,375.62 360.61,375.28 362.17,374.84 363.73,374.28 365.30,373.60 366.86,372.82 368.41,371.94 369.96,370.94 371.49,369.85 373.00,368.65 374.48,367.36 375.94,365.98 377.37,364.51 378.75,362.95 380.10,361.32 381.41,359.61 382.66,357.83 383.87,355.99 385.02,354.09 386.11,352.13 387.14,350.12 388.10,348.07 389.00,345.99 389.83,343.87 390.59,341.72 391.27,339.56 391.88,337.39 392.41,335.20 392.86,333.02 393.24,330.84 393.53,328.67 393.73,326.52 393.86,324.40 393.90,322.30 372.70,314.10 372.66,316.20 372.53,318.32 372.33,320.47 372.04,322.64 371.66,324.82 371.21,327.00 370.68,329.19 370.07,331.36 369.39,333.52 368.63,335.67 367.80,337.79 366.90,339.87 365.94,341.92 364.91,343.93 363.82,345.89 362.67,347.79 361.46,349.63 360.21,351.41 358.90,353.12 357.55,354.75 356.17,356.31 354.74,357.78 353.28,359.16 351.80,360.45 350.29,361.65 348.76,362.74 347.21,363.74 345.66,364.62 344.10,365.40 342.53,366.08 340.97,366.64 339.41,367.08 337.87,367.42 336.34,367.63 334.83,367.73 333.34,367.72 331.88,367.59 330.46,367.34 329.07,366.98 327.72,366.50" fill="url(#gInner)"/><polygon points="369.80,334.00 373.00,335.00 375.00,338.00 374.00,343.50 370.50,346.00 365.50,345.00 368.00,340.00" fill="#020d03"/><polygon points="348.92,374.70 350.66,375.29 352.46,375.70 354.32,375.91 356.23,375.93 358.18,375.76 360.15,375.39 362.15,374.84 364.16,374.10 366.17,373.18 368.17,372.08 370.15,370.81 372.11,369.37 358.00,354.23 355.65,356.86 353.19,359.24 350.66,361.36 348.07,363.20 345.44,364.74 342.79,365.97 340.14,366.89 337.52,367.47 334.95,367.73 332.45,367.65 330.03,367.24 327.72,366.50" fill="#0da81e" opacity=".55"/><polygon points="314.98,366.17 315.83,367.29 316.73,368.35 317.66,369.34 318.64,370.26 319.65,371.12 320.71,371.90 321.80,372.61 322.93,373.24 324.08,373.80 325.27,374.28 326.49,374.69 327.74,375.02 329.01,375.27 330.30,375.45 331.62,375.54 332.95,375.56 334.30,375.49 335.66,375.35 337.04,375.13 338.43,374.84 356.03,383.65 354.56,383.75 353.11,383.75 351.67,383.66 350.26,383.48 348.88,383.21 347.53,382.84 346.21,382.39 344.93,381.84 343.68,381.20 342.47,380.48 341.31,379.67 340.19,378.77 339.11,377.79 338.09,376.73 337.11,375.59 336.18,374.37 335.31,373.07 334.50,371.71 333.74,370.27 333.04,368.77" fill="#031a05"/><polygon points="343.30,280.20 341.76,280.90 340.23,281.70 338.70,282.58 337.17,283.54 335.66,284.59 334.17,285.72 332.69,286.93 331.24,288.22 329.80,289.58 328.40,291.01 327.02,292.51 325.67,294.08 324.36,295.71 323.08,297.40 321.85,299.15 320.65,300.95 319.50,302.80 318.40,304.70 317.34,306.64 316.33,308.62 315.38,310.63 314.48,312.67 313.63,314.75 312.84,316.84 312.11,318.95 311.45,321.08 310.84,323.22 310.30,325.37 309.82,327.52 309.40,329.66 309.05,331.81 308.77,333.94 308.55,336.06 308.40,338.15 308.32,340.23 308.30,342.28 308.36,344.30 308.48,346.29 308.66,348.24 308.92,350.15 309.24,352.01 309.63,353.82 310.08,355.58 310.60,357.29 311.18,358.93 311.82,360.52 312.52,362.03 313.29,363.48 314.11,364.86 314.98,366.17 333.04,368.77 332.45,367.31 331.90,365.81 331.41,364.25 330.98,362.64 330.60,360.99 330.28,359.30 330.01,357.57 329.79,355.79 329.64,353.99 329.54,352.15 329.50,350.29 329.52,348.40 329.59,346.49 329.72,344.56 329.91,342.61 330.16,340.65 330.46,338.68 330.82,336.71 331.23,334.73 331.70,332.75 332.22,330.78 332.79,328.81 333.42,326.85 334.09,324.91 334.82,322.98 335.59,321.07 336.42,319.19 337.28,317.33 338.20,315.49 339.15,313.70 340.15,311.93 341.19,310.20 342.27,308.52 343.38,306.87 344.53,305.28 345.70,303.73 346.92,302.23 348.15,300.79 349.42,299.40 350.71,298.07 352.03,296.80 353.36,295.59 354.71,294.45 356.08,293.37 357.46,292.37 358.86,291.43 360.26,290.56 361.67,289.77 363.08,289.05 364.50,288.40" fill="url(#gOuter)"/><polygon points="364.50,288.40 362.15,289.51 359.80,290.83 357.48,292.35 355.19,294.07 352.94,295.96 350.74,298.04 348.61,300.28 346.55,302.68 344.57,305.22 342.68,307.90 340.89,310.70 339.20,313.61 337.63,316.61 336.18,319.70 334.86,322.86 333.68,326.07 332.63,329.33 331.73,332.60 330.98,335.89 330.38,339.18 329.93,342.44 329.64,345.67 329.51,348.85 329.54,351.97 329.72,355.01 330.06,357.96 330.56,360.81 331.21,363.54 332.02,366.13 332.97,368.59 334.06,370.89 335.29,373.04 336.65,375.00 338.14,376.79 339.75,378.39 341.47,379.79 343.30,380.98 345.22,381.97 347.23,382.75 349.31,383.30 351.47,383.64 353.68,383.76 355.95,383.66 358.25,383.33 360.58,382.79 362.93,382.03 365.29,381.05 367.64,379.87 369.98,378.48 372.29,376.90 374.57,375.12 376.80,373.16 378.97,371.03 381.09,368.74 383.12,366.29 385.07,363.70 386.93,360.98 388.69,358.14 390.33,355.20 391.86,352.16 393.27,349.05 394.55,345.87 395.69,342.65 396.68,339.38 397.54,336.10 398.24,332.81 398.79,329.53 399.18,326.28 399.42,323.06 399.50,319.90 393.90,322.30 393.83,324.96 393.63,327.66 393.30,330.39 392.84,333.15 392.25,335.91 391.53,338.67 390.70,341.41 389.74,344.12 388.67,346.79 387.49,349.40 386.20,351.95 384.82,354.42 383.34,356.81 381.78,359.09 380.14,361.27 378.43,363.33 376.66,365.25 374.83,367.04 372.96,368.69 371.04,370.18 369.10,371.51 367.14,372.67 365.16,373.67 363.18,374.49 361.21,375.13 359.25,375.58 357.32,375.85 355.41,375.94 353.55,375.84 351.74,375.56 349.99,375.09 348.30,374.44 346.69,373.61 345.16,372.60 343.71,371.43 342.36,370.09 341.11,368.59 339.96,366.93 338.93,365.14 338.01,363.20 337.21,361.14 336.54,358.95 335.99,356.66 335.57,354.27 335.28,351.79 335.13,349.24 335.11,346.62 335.22,343.95 335.46,341.23 335.84,338.49 336.34,335.73 336.97,332.97 337.73,330.22 338.61,327.49 339.61,324.79 340.71,322.13 341.93,319.54 343.25,317.01 344.66,314.57 346.17,312.22 347.76,309.97 349.42,307.83 351.15,305.82 352.95,303.94 354.79,302.19 356.68,300.60 358.60,299.16 360.55,297.88 362.52,296.78 364.50,295.84" fill="url(#gFront)"/><polyline points="364.50,288.40 362.06,289.56 359.63,290.94 357.22,292.53 354.85,294.34 352.53,296.33 350.26,298.52 348.07,300.89 345.95,303.41 343.93,306.10 342.00,308.92 340.19,311.87 338.49,314.93 336.92,318.09 335.48,321.33 334.19,324.64 333.04,328.00 332.05,331.39 331.21,334.80 330.54,338.21 330.03,341.60 329.69,344.96 329.52,348.27 329.52,351.51 329.69,354.68 330.03,357.75 330.54,360.70 331.21,363.54 332.05,366.23 333.04,368.77 334.19,371.14 335.48,373.34 336.92,375.35 338.49,377.16 340.19,378.77 342.00,380.16 343.93,381.34 345.95,382.28 348.07,383.00 350.26,383.48 352.53,383.73" fill="none" stroke="#067810" stroke-width=".5"/><polyline points="364.50,295.84 362.19,296.95 359.90,298.29 357.64,299.86 355.41,301.65 353.25,303.64 351.15,305.82 349.14,308.18 347.22,310.71 345.41,313.38 343.71,316.19 342.14,319.11 340.71,322.13 339.43,325.23 338.30,328.39 337.34,331.59 336.54,334.81 335.91,338.03 335.46,341.23 335.19,344.40 335.10,347.50 335.19,350.53 335.46,353.46 335.91,356.27 336.54,358.95 337.34,361.49 338.30,363.86 339.43,366.05 340.71,368.05 342.14,369.85 343.71,371.43 345.41,372.78 347.22,373.91 349.14,374.79 351.15,375.42 353.25,375.81 355.41,375.94 357.64,375.82 359.90,375.45 362.19,374.83 364.50,373.96 366.81,372.85 369.10,371.51 371.36,369.94 373.59,368.15 375.75,366.16 377.85,363.98 379.86,361.62 381.78,359.09 383.59,356.42 385.29,353.61 386.86,350.69 388.29,347.67 389.57,344.57 390.70,341.41 391.66,338.21 392.46,334.99 393.09,331.77 393.54,328.57 393.81,325.40 393.90,322.30" fill="none" stroke="#067810" stroke-width=".4"/><polygon points="399.50,319.90 378.30,311.70 372.70,314.10 393.90,322.30" fill="#12d62a"/><path d="M352.600 266V345" stroke="#1a5a7a" stroke-width=".4" opacity=".35"/><path d="M426.300 439.600L456.700 419.200" stroke="#f62d2d" stroke-width="1.250"/><path d="M421.600 418.100L462.900 440.600" stroke="#5cea9a" stroke-width="1"/><path d="M441 437.500L444.100 407.700" stroke="#1a9fe6" stroke-width="1.400"/><text transform="matrix(1.192 -0.497 -0.473 2.154 436.3 407.1)" x="0" y="0" font-family="Liberation Sans,sans-serif" font-size="10" fill="#1a9fe6" stroke="#1a9fe6" stroke-width=".42">UP</text><text transform="matrix(1.053 -0.639 1.459 0.729 409.6 421.3)" x="0" y="0" font-family="Liberation Sans,sans-serif" font-size="10" fill="#5cea9a" stroke="#5cea9a" stroke-width=".42">US</text><text transform="matrix(1.053 -0.639 1.459 0.729 463.4 421.3)" x="0" y="0" font-family="Liberation Sans,sans-serif" font-size="10" fill="#f62d2d" stroke="#f62d2d" stroke-width=".42">SL</text><text transform="matrix(1.179 -0.716 1.634 0.816 414.9 455.2)" x="0" y="0" font-family="Liberation Sans,sans-serif" font-size="10" fill="#f62d2d" stroke="#f62d2d" stroke-width=".42">SR</text><text transform="matrix(1.179 -0.716 1.634 0.816 471.8 455.4)" x="0" y="0" font-family="Liberation Sans,sans-serif" font-size="10" fill="#5cea9a" stroke="#5cea9a" stroke-width=".42">DS</text><polygon points="129.20,671.00 141.70,671.70 155.70,679.00 162.30,690.80 162.30,710.00 155.70,721.70 139.50,729.00 127.80,729.00 111.60,721.70 105.00,710.00 105.00,691.60 113.00,673.20" fill="#a9d3f7" stroke="#9ccaf3" stroke-width=".5" opacity=".92"/><polygon points="114.00,675.00 129.50,672.50 141.50,673.00 154.00,680.00 156.00,688.00 133.50,697.50 112.00,688.00" fill="#c3d9ea"/><polygon points="106.50,693.00 111.00,690.00 130.00,698.50 130.50,722.00 127.00,727.00 112.50,720.50 106.50,709.50" fill="#c0d6e8"/><polygon points="137.00,698.50 156.50,690.00 161.00,693.00 161.00,709.50 155.00,720.50 140.00,727.00 136.50,722.00" fill="#c0d6e8"/><g transform="translate(123.3 680) rotate(-24)"><rect x="-4.5" y="-2.4" width="9" height="4.8" rx="2.4" fill="#f4f8fc" opacity=".95"/><text x="0" y="1.66" font-family="Liberation Sans,sans-serif" font-size="4.6" font-style="italic" fill="#2540d8" text-anchor="middle">3D</text></g><g transform="translate(134.4 684.2) rotate(-24)"><rect x="-6.25" y="-2.5" width="12.5" height="5" rx="2.5" fill="#f4f8fc" opacity=".95"/><text x="0" y="1.73" font-family="Liberation Sans,sans-serif" font-size="4.8" font-style="italic" fill="#2540d8" text-anchor="middle">Top</text></g><g transform="translate(119.7 708.6) rotate(30)"><rect x="-7.0" y="-2.9" width="14" height="5.8" rx="2.9" fill="#f4f8fc" opacity=".95"/><text x="0" y="1.98" font-family="Liberation Sans,sans-serif" font-size="5.5" font-style="italic" fill="#2540d8" text-anchor="middle">Left</text></g><g transform="translate(148.4 709.2) rotate(-27)"><rect x="-8.75" y="-2.9" width="17.5" height="5.8" rx="2.9" fill="#f4f8fc" opacity=".95"/><text x="0" y="1.98" font-family="Liberation Sans,sans-serif" font-size="5.5" font-style="italic" fill="#2540d8" text-anchor="middle">Front</text></g><ellipse cx="130" cy="675.900" rx="3.300" ry="2.100" fill="#1030e8"/><path d="M133.300 737V697.500" stroke="#2a58e8" stroke-width=".9"/><path d="M133.300 737L168 716.600" stroke="#e8452e" stroke-width=".9"/><path d="M133.300 737L99.500 716.600" stroke="#3cc83c" stroke-width=".9"/><text x="133.400" y="695.300" font-family="Liberation Sans,sans-serif" font-size="6.600" font-weight="bold" fill="#2a50d8" text-anchor="middle">Z</text><text x="172.600" y="717.500" font-family="Liberation Sans,sans-serif" font-size="6.200" font-weight="bold" fill="#e8452e" text-anchor="middle">X</text><text x="95.200" y="717.200" font-family="Liberation Sans,sans-serif" font-size="6.200" font-weight="bold" fill="#3cc83c" text-anchor="middle">Y</text></g></svg>
<div style="left:640.00px;top:75.90px;width:149.00px;height:675.60px;background:#efefed;"></div>
<div style="left:640.00px;top:75.90px;width:149.00px;height:8.70px;background:#ebebe9;"></div>
<svg style="left:642.00px;top:77.60px;" width="5.2" height="5.2" viewBox="0 0 5.2 5.2"><path d="M0 0L5.2 5.2M5.2 0L0 5.2" stroke="#333" stroke-width="0.8"/></svg>
<div class="t" style="font-size:6.15px;line-height:7.38px;color:#222;left:650.50px;top:76.61px;letter-spacing:0.024px;">Object Info - Data</div>
<div style="left:772.60px;top:77.90px;width:5.20px;height:0.70px;background:#6a6a68;"></div>
<div style="left:772.60px;top:79.80px;width:5.20px;height:0.70px;background:#6a6a68;"></div>
<div style="left:772.60px;top:81.70px;width:5.20px;height:0.70px;background:#6a6a68;"></div>
<div class="t" style="font-size:6.6px;line-height:7.92px;color:#333;font-weight:bold;left:779.50px;width:8px;text-align:center;top:76.34px;">?</div>
<div style="left:640.00px;top:84.60px;width:149.00px;height:14.80px;background:#c9c9c7;"></div>
<div style="left:678.30px;top:86.00px;width:38.00px;height:13.40px;background:#ececea;border-radius:2px 2px 0 0;"></div>
<svg style="left:644.50px;top:88.50px;" width="9" height="8" viewBox="0 0 9 8"><rect x=".6" y="2.200" width="4.600" height="4.600" rx="1.500" fill="none" stroke="#333" stroke-width=".7"/><path d="M3.500 2.200V1.500a.9.9 0 0 1 .9-.9h3a.9.9 0 0 1 .9.900v3a.9.9 0 0 1-.9.900H5.200" fill="none" stroke="#333" stroke-width=".7"/></svg>
<div class="t" style="font-size:6.15px;line-height:7.38px;color:#222;left:656.30px;top:89.11px;letter-spacing:-0.121px;">Shape</div>
<svg style="left:681.50px;top:89.00px;" width="9" height="8" viewBox="0 0 9 8"><rect x=".6" y=".6" width="7.600" height="4.800" rx="1" fill="none" stroke="#333" stroke-width=".7"/><path d="M2.200 3h4.400M3 5.400L4.400 7l1.400-1.600" stroke="#333" stroke-width=".6" fill="none"/></svg>
<div class="t" style="font-size:6.15px;line-height:7.38px;color:#222;left:692.60px;top:89.11px;letter-spacing:-0.197px;">Data</div>
<svg style="left:717.00px;top:88.50px;" width="11" height="8" viewBox="0 0 11 8"><path d="M2.500 2.200h6v1.600a3 3 0 0 1-6 0z" fill="none" stroke="#333" stroke-width=".8"/><path d="M2.500 2.800L.6 2M8.500 2.800c1.800-.8 2 .1 .6 1.700M4 1.100h3" stroke="#333" stroke-width=".7" fill="none"/></svg>
<div class="t" style="font-size:6.15px;line-height:7.38px;color:#222;left:728.80px;top:89.11px;letter-spacing:-0.074px;">Render</div>
<div style="left:750.50px;top:87.50px;width:0.50px;height:10.00px;background:#999;"></div>
<div class="t" style="font-size:6.15px;line-height:7.38px;color:#1a1a1a;font-weight:bold;left:642.00px;top:102.31px;letter-spacing:-0.043px;">Document Record Format Defaults</div>
<div style="left:640.00px;top:112.30px;width:149.00px;height:0.50px;background:#dcdcda;"></div>
<div class="t" style="font-size:6.15px;line-height:7.38px;color:#222;left:642.20px;top:115.91px;letter-spacing:-0.088px;">Data Sheet:</div>
<div style="left:677.00px;top:114.60px;width:110.00px;height:10.00px;background:#f7f7f5;border-radius:2.400px;box-shadow:0 0 0 .4px rgba(0,0,0,.05);"></div>
<div class="t" style="font-size:6.15px;line-height:7.38px;color:#c2c2c0;left:680.50px;top:116.01px;letter-spacing:-0.006px;">&lt;Default Settings&gt;</div>
<svg style="left:781.50px;top:116.60px;" width="4" height="6" viewBox="0 0 4 6"><path d="M.7 2.200L2 .8 3.300 2.200M.7 3.800L2 5.200 3.300 3.800" stroke="#aaa" stroke-width=".6" fill="none"/></svg>
<div style="left:640.50px;top:126.40px;width:148.00px;height:106.00px;background:#fff;"></div>
<div class="t" style="font-size:6.15px;line-height:7.38px;color:#222;left:649.20px;top:129.51px;letter-spacing:-0.085px;">Record Formats:</div>
<div style="left:640.50px;top:139.20px;width:148.00px;height:0.40px;background:#e6e6e4;"></div>
<div class="t" style="font-size:6.15px;line-height:7.38px;color:#222;left:648.20px;top:141.01px;letter-spacing:-0.038px;">__ATS-BumpModData</div>
<div class="t" style="font-size:6.15px;line-height:7.38px;color:#222;left:648.20px;top:150.89px;letter-spacing:-0.043px;">__ATS-SpkrModData</div>
<div class="t" style="font-size:6.15px;line-height:7.38px;color:#222;left:648.20px;top:160.77px;letter-spacing:-0.020px;">Body Format</div>
<div class="t" style="font-size:6.15px;line-height:7.38px;color:#222;left:648.20px;top:170.65px;letter-spacing:-0.068px;">EntEquipUniversal</div>
<div style="left:640.50px;top:179.32px;width:148.00px;height:9.60px;background:#0b62e2;"></div>
<div class="t" style="font-size:6.15px;line-height:7.38px;color:#fff;left:648.20px;top:180.53px;letter-spacing:-0.185px;">Glow_DMX</div>
<div class="t" style="font-size:6.15px;line-height:7.38px;color:#222;left:648.20px;top:190.41px;letter-spacing:-0.065px;">Laser Record</div>
<div class="t" style="font-size:6.15px;line-height:7.38px;color:#222;left:648.20px;top:200.29px;letter-spacing:-0.062px;">Lens Record Format</div>
<div class="t" style="font-size:6.15px;line-height:7.38px;color:#222;left:648.20px;top:210.17px;letter-spacing:-0.021px;">Light Info Record</div>
<div class="t" style="font-size:6.15px;line-height:7.38px;color:#222;left:648.20px;top:220.05px;letter-spacing:-0.088px;">Parts</div>
<div style="left:640.500px;top:229.500px;width:148px;height:3px;overflow:hidden;"><div class="t" style="left:7.700px;top:0.500px;font-size:6.200px;line-height:7px;color:#999;">Navigation Material Record</div></div>
<div style="left:640.50px;top:232.40px;width:148.00px;height:9.20px;background:#f3f3f1;box-shadow:0 0 0 .4px rgba(0,0,0,.10);border-radius:1px;"></div>
<div class="t" style="font-size:6.15px;line-height:7.38px;color:#c4c4c2;left:654.50px;width:120px;text-align:center;top:233.41px;letter-spacing:-0.031px;">Attach Record</div>
<div style="left:640.50px;top:242.28px;width:148.00px;height:9.20px;background:#f3f3f1;box-shadow:0 0 0 .4px rgba(0,0,0,.10);border-radius:1px;"></div>
<div class="t" style="font-size:6.15px;line-height:7.38px;color:#c4c4c2;left:654.50px;width:120px;text-align:center;top:243.29px;letter-spacing:-0.081px;">Attach IFC...</div>
<div style="left:640.50px;top:252.16px;width:148.00px;height:9.20px;background:#f3f3f1;box-shadow:0 0 0 .4px rgba(0,0,0,.10);border-radius:1px;"></div>
<div class="t" style="font-size:6.15px;line-height:7.38px;color:#c4c4c2;left:654.50px;width:120px;text-align:center;top:253.17px;letter-spacing:-0.017px;">Assign Classifications...</div>
<div style="left:640.50px;top:262.04px;width:148.00px;height:9.20px;background:#f3f3f1;box-shadow:0 0 0 .4px rgba(0,0,0,.10);border-radius:1px;"></div>
<div class="t" style="font-size:6.15px;line-height:7.38px;color:#c4c4c2;left:654.50px;width:120px;text-align:center;top:263.05px;letter-spacing:-0.001px;">Detach...</div>
<div style="left:640.50px;top:272.80px;width:148.00px;height:3.60px;background:#f8f8f6;"></div>
<svg style="left:713.20px;top:273.60px;" width="3" height="2" viewBox="0 0 3 2"><path d="M.4.400L1.500 1.500 2.600.400" stroke="#aaa" stroke-width=".4" fill="none"/></svg>
<div class="t" style="font-size:6.15px;line-height:7.38px;color:#222;left:643.80px;top:281.01px;letter-spacing:-0.110px;">Type:</div>
<div class="sel" style="left:673.00px;top:279.70px;width:113.30px;height:9.90px;"></div>
<div class="t" style="font-size:6.15px;line-height:7.38px;color:#2a2a2a;left:676.30px;top:281.06px;">RGB</div>
<div class="blu" style="left:777.70px;top:280.95px;width:7.40px;height:7.40px;"></div>
<svg style="left:777.70px;top:280.95px;" width="7.4" height="7.4" viewBox="0 0 7.4 7.4"><path d="M2.07 3.11L3.70 4.74 5.33 3.11" stroke="#fff" stroke-width=".9" fill="none" stroke-linecap="round"/></svg>
<div class="t" style="font-size:6.15px;line-height:7.38px;color:#222;left:643.80px;top:294.41px;letter-spacing:-0.059px;">Candela:</div>
<div style="left:673.00px;top:294.10px;width:113.30px;height:8.00px;background:#fff;box-shadow:0 0 0 .4px rgba(0,0,0,.08);"></div>
<div class="t" style="font-size:6.15px;line-height:7.38px;color:#222;left:674.80px;top:294.51px;">2.00</div>
<div class="t" style="font-size:6.15px;line-height:7.38px;color:#222;left:643.80px;top:306.01px;letter-spacing:-0.047px;">Universe:</div>
<div style="left:673.00px;top:305.70px;width:113.30px;height:8.00px;background:#fff;box-shadow:0 0 0 .4px rgba(0,0,0,.08);"></div>
<div class="t" style="font-size:6.15px;line-height:7.38px;color:#222;left:674.80px;top:306.11px;">3</div>
<div class="t" style="font-size:6.15px;line-height:7.38px;color:#222;left:643.80px;top:317.91px;letter-spacing:-0.145px;">Channel:</div>
<div style="left:673.00px;top:317.60px;width:113.30px;height:8.00px;background:#fff;box-shadow:0 0 0 .4px rgba(0,0,0,.08);"></div>
<div class="t" style="font-size:6.15px;line-height:7.38px;color:#222;left:674.80px;top:318.01px;">1</div>
<div class="t" style="font-size:6.15px;line-height:7.38px;color:#cfcfcd;left:641.50px;top:450.61px;letter-spacing:-0.278px;">Name:</div>
<div style="left:660.00px;top:450.30px;width:128.50px;height:8.00px;background:#f3f3f1;"></div>
<div style="left:640.00px;top:459.30px;width:149.00px;height:2.20px;background:#c2c2c0;"></div>
<div style="left:640.00px;top:461.50px;width:149.00px;height:9.40px;background:#ebebe9;"></div>
<svg style="left:642.00px;top:463.70px;" width="5.2" height="5.2" viewBox="0 0 5.2 5.2"><path d="M0 0L5.2 5.2M5.2 0L0 5.2" stroke="#333" stroke-width="0.8"/></svg>
<div class="t" style="font-size:6.15px;line-height:7.38px;color:#222;left:650.50px;top:462.71px;letter-spacing:-0.033px;">Navigation - Design Layers</div>
<svg style="left:772.65px;top:463.65px;" width="5.1" height="5.1" viewBox="0 0 5.1 5.1"><rect x="0.00" y="0.00" width="1.300" height="1.300" fill="#858583"/><rect x="0.00" y="1.90" width="1.300" height="1.300" fill="#858583"/><rect x="0.00" y="3.80" width="1.300" height="1.300" fill="#858583"/><rect x="1.90" y="0.00" width="1.300" height="1.300" fill="#858583"/><rect x="1.90" y="1.90" width="1.300" height="1.300" fill="#858583"/><rect x="1.90" y="3.80" width="1.300" height="1.300" fill="#858583"/><rect x="3.80" y="0.00" width="1.300" height="1.300" fill="#858583"/><rect x="3.80" y="1.90" width="1.300" height="1.300" fill="#858583"/><rect x="3.80" y="3.80" width="1.300" height="1.300" fill="#858583"/></svg>
<div class="t" style="font-size:6.6px;line-height:7.92px;color:#333;font-weight:bold;left:779.50px;width:8px;text-align:center;top:462.44px;">?</div>
<div style="left:640.00px;top:470.90px;width:149.00px;height:15.80px;background:#c9c9c7;"></div>
<div style="left:655.30px;top:471.80px;width:13.80px;height:14.90px;background:#ececea;border-radius:2px 2px 0 0;"></div>
<svg style="left:643.50px;top:474.00px;" width="10" height="10" viewBox="0 0 10 10"><circle cx="2" cy="5.500" r="1" fill="#333"/><circle cx="5.500" cy="2.500" r="1" fill="#333"/><circle cx="5.500" cy="8" r="1" fill="#333"/><circle cx="8.500" cy="5" r=".8" fill="#333"/><path d="M2 5.500L5.500 2.500M2 5.500L5.500 8M5.500 2.500L8.500 5" stroke="#333" stroke-width=".5"/></svg>
<svg style="left:657.50px;top:474.00px;" width="10" height="10" viewBox="0 0 10 10"><path d="M4.800.5L9 2.600 4.800 4.700.6 2.600z" fill="#1c1c1c"/><path d="M.6 2.600V6.600L4.800 9 9 6.600V2.600L4.800 4.700z" fill="#2a2a2a"/><path d="M.6 4.600L4.800 6.800 9 4.600" stroke="#bbb" stroke-width=".5" fill="none"/></svg>
<div style="left:671.00px;top:473.40px;width:11.00px;height:11.00px;background:#8e8e8c;border-radius:1px;"></div>
<div style="left:673.00px;top:475.30px;width:7.00px;height:7.00px;border:.8px solid #555;background:#a4a4a2;"></div>
<svg style="left:684.50px;top:474.00px;" width="11" height="10" viewBox="0 0 11 10"><path d="M1.500 8.800V3.500L4 1.200h3L9.500 3.500V8.800" fill="none" stroke="#2a2a2a" stroke-width=".9"/><path d="M.5 2.200l2-1.200M10.500 2.200l-2-1.200M1.500 8.800h2.500V6.500h3V8.800h2.500" stroke="#2a2a2a" stroke-width=".8" fill="none"/></svg>
<svg style="left:699.00px;top:474.00px;" width="11" height="10" viewBox="0 0 11 10"><path d="M1.200.8h3.500l1.700 1.700v6H1.200z" fill="#e8e8e6" stroke="#2a2a2a" stroke-width=".9"/><ellipse cx="7" cy="6.800" rx="2.900" ry="1.900" fill="#222" stroke="#222" stroke-width=".6"/><circle cx="7" cy="6.800" r=".8" fill="#ddd"/></svg>
<svg style="left:713.00px;top:474.00px;" width="11" height="10" viewBox="0 0 11 10"><path d="M1.200.8h3.500l1.700 1.700v6H1.200z" fill="#e8e8e6" stroke="#2a2a2a" stroke-width=".9"/><circle cx="6" cy="6" r="2.900" fill="#e8e8e6" stroke="#2a2a2a" stroke-width=".9"/><path d="M4.200 7l1.800-2.500M6 6.200h1.800" stroke="#2a2a2a" stroke-width=".8"/></svg>
<div style="left:669.50px;top:473.50px;width:0.50px;height:11.00px;background:#999;"></div>
<div style="left:682.50px;top:473.50px;width:0.50px;height:11.00px;background:#999;"></div>
<div style="left:696.50px;top:473.50px;width:0.50px;height:11.00px;background:#999;"></div>
<div style="left:710.50px;top:473.50px;width:0.50px;height:11.00px;background:#999;"></div>
<div style="left:725.30px;top:473.50px;width:0.50px;height:11.00px;background:#999;"></div>
<div style="left:640.00px;top:486.70px;width:149.00px;height:264.80px;background:#efefed;"></div>
<div style="left:640.00px;top:486.70px;width:149.00px;height:19.60px;background:#e5e5e3;"></div>
<div class="t" style="font-size:6.15px;line-height:7.38px;color:#222;left:642.00px;top:487.71px;letter-spacing:-0.076px;">Layer Options:</div>
<div class="sel" style="left:683.50px;top:487.30px;width:103.50px;height:8.20px;"></div>
<div class="t" style="font-size:5.95px;line-height:7.14px;color:#2a2a2a;left:686.70px;top:487.93px;">Show/Snap/Modify Others</div>
<svg style="left:779.60px;top:490.20px;" width="4.4" height="3" viewBox="0 0 4.4 3"><path d="M.6.500L2.200 2.100 3.800.5" stroke="#333" stroke-width=".7" fill="none"/></svg>
<div class="t" style="font-size:6.15px;line-height:7.38px;color:#222;left:642.00px;top:497.61px;letter-spacing:-0.029px;">Filter:</div>
<div class="sel" style="left:683.50px;top:497.20px;width:103.50px;height:8.20px;"></div>
<div class="t" style="font-size:5.95px;line-height:7.14px;color:#2a2a2a;left:686.70px;top:497.83px;">&lt;All Layers&gt;</div>
<svg style="left:779.60px;top:500.10px;" width="4.4" height="3" viewBox="0 0 4.4 3"><path d="M.6.500L2.200 2.100 3.800.5" stroke="#333" stroke-width=".7" fill="none"/></svg>
<div class="blu" style="left:780.30px;top:487.80px;width:6.20px;height:7.20px;"></div>
<svg style="left:780.30px;top:487.80px;" width="6.2" height="7.2" viewBox="0 0 6.2 7.2"><path d="M2 2.900L3.100 1.800 4.200 2.900M2 4.300L3.100 5.400 4.200 4.300" stroke="#fff" stroke-width=".6" fill="none"/></svg>
<div class="blu" style="left:780.30px;top:497.70px;width:6.20px;height:7.20px;"></div>
<svg style="left:780.30px;top:497.70px;" width="6.2" height="7.2" viewBox="0 0 6.2 7.2"><path d="M2 2.900L3.100 1.800 4.200 2.900M2 4.300L3.100 5.400 4.200 4.300" stroke="#fff" stroke-width=".6" fill="none"/></svg>
<div style="left:642.00px;top:507.00px;width:145.30px;height:8.80px;background:#fff;border-radius:2px;box-shadow:0 0 0 .4px rgba(0,0,0,.10);"></div>
<svg style="left:644.50px;top:508.80px;" width="6" height="6" viewBox="0 0 6 6"><circle cx="2.400" cy="2.400" r="1.700" stroke="#555" stroke-width=".6" fill="none"/><path d="M3.600 3.600L5.200 5.200" stroke="#555" stroke-width=".7"/></svg>
<div class="t" style="font-size:6px;line-height:7.20px;color:#c8c8c6;left:653.50px;top:507.90px;">Search</div>
<div style="left:640.50px;top:518.80px;width:148.00px;height:232.50px;background:#fff;"></div>
<div style="left:640.50px;top:518.80px;width:148.00px;height:10.40px;background:#fff;border-bottom:.4px solid #e2e2e0;"></div>
<div class="t" style="font-size:6.15px;line-height:7.38px;color:#333;left:642.20px;top:520.51px;letter-spacing:-0.014px;">Visibi...</div>
<div class="t" style="font-size:6.15px;line-height:7.38px;color:#333;left:680.50px;top:520.51px;letter-spacing:-0.109px;">Design Layer Name</div>
<div class="t" style="font-size:6px;line-height:7.20px;color:#333;left:752.20px;top:520.60px;">#</div>
<div class="t" style="font-size:6.15px;line-height:7.38px;color:#333;left:765.50px;top:520.51px;letter-spacing:0.012px;">Story</div>
<div style="left:677.30px;top:520.50px;width:0.40px;height:7.50px;background:#d0d0ce;"></div>
<div style="left:748.80px;top:520.50px;width:0.40px;height:7.50px;background:#d0d0ce;"></div>
<div style="left:762.50px;top:520.50px;width:0.40px;height:7.50px;background:#d0d0ce;"></div>
<div style="left:648.30px;top:529.50px;width:0.40px;height:221.50px;background:#e4e4e2;"></div>
<div style="left:656.50px;top:529.50px;width:0.40px;height:221.50px;background:#e4e4e2;"></div>
<div style="left:664.80px;top:529.50px;width:0.40px;height:221.50px;background:#e4e4e2;"></div>
<div class="t" style="font-size:6.15px;line-height:7.38px;color:#151515;left:679.80px;top:530.91px;letter-spacing:-0.005px;">Light Plot</div>
<div class="t" style="font-size:5.9px;line-height:7.08px;color:#222;left:749.30px;width:8px;text-align:center;top:531.06px;">1</div>
<svg style="left:650.10px;top:532.10px;" width="4.6" height="4.6" viewBox="0 0 4.6 4.6"><path d="M0 0L4.6 4.6M4.6 0L0 4.6" stroke="#333" stroke-width="0.6"/></svg>
<div class="t" style="font-size:6.15px;line-height:7.38px;color:#151515;font-weight:bold;left:679.80px;top:539.04px;letter-spacing:-0.095px;">Generic Solid</div>
<div class="t" style="font-size:5.9px;line-height:7.08px;color:#222;font-weight:bold;left:749.30px;width:8px;text-align:center;top:539.19px;">2</div>
<svg style="left:650.10px;top:540.23px;" width="4.6" height="4.6" viewBox="0 0 4.6 4.6"><path d="M0 0L4.6 4.6M4.6 0L0 4.6" stroke="#333" stroke-width="0.6"/></svg>
<div class="t" style="font-size:6.15px;line-height:7.38px;color:#151515;left:679.80px;top:547.17px;letter-spacing:-0.063px;">Soft Goods</div>
<div class="t" style="font-size:5.9px;line-height:7.08px;color:#222;left:749.30px;width:8px;text-align:center;top:547.32px;">3</div>
<svg style="left:650.10px;top:548.36px;" width="4.6" height="4.6" viewBox="0 0 4.6 4.6"><path d="M0 0L4.6 4.6M4.6 0L0 4.6" stroke="#333" stroke-width="0.6"/></svg>
<div class="t" style="font-size:6.15px;line-height:7.38px;color:#151515;left:679.80px;top:555.30px;letter-spacing:-0.127px;">Scenery</div>
<div class="t" style="font-size:5.9px;line-height:7.08px;color:#222;left:749.30px;width:8px;text-align:center;top:555.45px;">4</div>
<svg style="left:650.10px;top:556.49px;" width="4.6" height="4.6" viewBox="0 0 4.6 4.6"><path d="M0 0L4.6 4.6M4.6 0L0 4.6" stroke="#333" stroke-width="0.6"/></svg>
<div class="t" style="font-size:6.15px;line-height:7.38px;color:#151515;left:679.80px;top:563.43px;letter-spacing:-0.089px;">Theatre FloorPlan</div>
<div class="t" style="font-size:5.9px;line-height:7.08px;color:#222;left:749.30px;width:8px;text-align:center;top:563.58px;">5</div>
<svg style="left:668.00px;top:539.30px;" width="8" height="7" viewBox="0 0 8 7"><path d="M.8 3.600L2.800 5.600 6.800.8" stroke="#222" stroke-width=".8" fill="none"/></svg>
<svg style="left:641.00px;top:564.60px;" width="8" height="6" viewBox="0 0 8 6"><path d="M.5 2.800C2-.1 5.500-.1 7 2.800 5.500 5.600 2 5.600.5 2.800z" fill="none" stroke="#222" stroke-width=".6"/><circle cx="3.750" cy="2.800" r="1.200" fill="#222"/></svg>
<div style="left:10.20px;top:751.50px;width:778.80px;height:10.50px;background:#efefed;border-radius:0 0 4.500px 4.500px;border-top:.4px solid #dcdcda;"></div>
<div class="t" style="font-size:6.15px;line-height:7.38px;color:#222;left:12.60px;top:753.31px;letter-spacing:0.025px;">Selection Tool</div>
<svg style="left:56.10px;top:755.30px;" width="3.4" height="3.4" viewBox="0 0 3.4 3.4"><path d="M0 0L3.4 3.4M3.4 0L0 3.4" stroke="#222" stroke-width="0.8"/></svg>
<div class="t" style="font-size:6.15px;line-height:7.38px;color:#222;left:65.00px;top:753.31px;letter-spacing:-0.053px;">Rectangular Marquee Mode</div>
<div class="t" style="font-size:6.15px;line-height:7.38px;color:#333;left:568.00px;top:753.31px;letter-spacing:-0.030px;">X: 82'11 1/4"</div>
<div class="t" style="font-size:6.15px;line-height:7.38px;color:#333;left:641.00px;top:753.31px;letter-spacing:0.040px;">Y: 31'4 1/2"</div>
<div class="t" style="font-size:6.15px;line-height:7.38px;color:#333;left:714.60px;top:753.31px;letter-spacing:0.056px;">Z: 0"</div>
<div style="left:789.90px;top:13.40px;width:566.10px;height:749.00px;background:#000;border-radius:5px 5px 0 0;box-shadow:0 0 0 .5px rgba(0,0,0,.4);"></div>
<div style="left:789.90px;top:13.40px;width:566.10px;height:12.40px;background:#e9e9e7;border-radius:5px 5px 0 0;"></div>
<div style="left:793.20px;top:16.70px;width:5.80px;height:5.80px;background:#d2d2d0;border-radius:50%;"></div>
<div style="left:802.20px;top:16.70px;width:5.80px;height:5.80px;background:#d2d2d0;border-radius:50%;"></div>
<div style="left:811.20px;top:16.70px;width:5.80px;height:5.80px;background:#d2d2d0;border-radius:50%;"></div>
<div class="t" style="font-size:5.3px;line-height:6.36px;color:#b9b9b7;left:1047.60px;width:40px;text-align:center;top:16.52px;">Eos : 1</div>
<div style="left:789.90px;top:25.80px;width:566.10px;height:15.40px;background:#161618;"></div>
<div style="left:789.90px;top:41.00px;width:566.10px;height:1.30px;background:#7a5a14;"></div>
<div style="left:789.90px;top:42.30px;width:0.90px;height:720.00px;background:#2e230a;"></div>
<div style="left:1355.10px;top:42.30px;width:0.90px;height:720.00px;background:#2e230a;"></div>
<svg style="left:795.10px;top:29.40px;" width="12.4" height="10" viewBox="0 0 12.4 10"><rect x=".7" y=".7" width="11" height="6.600" rx="1.200" fill="#0a0a12" stroke="#c98a12" stroke-width="1.300" /><path d="M4.200 8.800h4" stroke="#c98a12" stroke-width="1.100"/><path d="M5.200 7.500L6.200 8.800 7.200 7.500" fill="#c98a12"/></svg>
<div class="t" style="font-size:4.6px;line-height:5.52px;color:#d8d8d8;font-weight:bold;left:796.30px;width:10px;text-align:center;top:30.44px;">1</div>
<svg style="left:818.50px;top:29.40px;" width="12.4" height="10" viewBox="0 0 12.4 10"><rect x=".7" y=".7" width="11" height="6.600" rx="1.200" fill="#0a0a12" stroke="#c98a12" stroke-width="1.300" stroke-dasharray="2.200 1"/></svg>
<div class="t" style="font-size:4.6px;line-height:5.52px;color:#d8d8d8;font-weight:bold;left:819.70px;width:10px;text-align:center;top:30.44px;">1</div>
<svg style="left:841.80px;top:29.40px;" width="12.4" height="10" viewBox="0 0 12.4 10"><rect x=".7" y=".7" width="11" height="6.600" rx="1.200" fill="#0a0a12" stroke="#858585" stroke-width="1.300" stroke-dasharray="2.200 1"/></svg>
<div class="t" style="font-size:4.6px;line-height:5.52px;color:#3a3a4a;font-weight:bold;left:843.00px;width:10px;text-align:center;top:30.44px;">2</div>
<svg style="left:865.10px;top:29.40px;" width="12.4" height="10" viewBox="0 0 12.4 10"><rect x=".7" y=".7" width="11" height="6.600" rx="1.200" fill="#0a0a12" stroke="#858585" stroke-width="1.300" stroke-dasharray="2.200 1"/></svg>
<div class="t" style="font-size:4.6px;line-height:5.52px;color:#3a3a4a;font-weight:bold;left:866.30px;width:10px;text-align:center;top:30.44px;">3</div>
<div class="t" style="font-size:6.91px;line-height:8.29px;color:#f2f2f2;left:993.20px;width:160px;text-align:center;top:29.45px;letter-spacing:-0.002px;">2025 Curtain Movement Example</div>
<svg style="left:1212.00px;top:28.50px;" width="10" height="10" viewBox="0 0 10 10"><path d="M1.500 9L6 2.500" stroke="#ddd" stroke-width="1.100"/><path d="M5.300 1.500a2.500 2.500 0 0 1 3 3" stroke="#555" stroke-width=".8" fill="none"/></svg>
<svg style="left:1234.50px;top:28.80px;" width="12" height="9" viewBox="0 0 12 9"><path d="M1 .8h10M3.300 .8L1.300 8.500h2.600L5 .8zM8.700.8l2 7.700H8.100L7 .8z" fill="#e8e8e8" stroke="#e8e8e8" stroke-width=".8"/></svg>
<svg style="left:1258.00px;top:29.50px;" width="13" height="8" viewBox="0 0 13 8"><rect x=".6" y=".6" width="11.400" height="6.400" rx="1" fill="none" stroke="#ddd" stroke-width=".9"/><circle cx="6.300" cy="3.800" r="1.800" fill="none" stroke="#ddd" stroke-width=".9"/></svg>
<svg style="left:1282.50px;top:28.00px;" width="12" height="11" viewBox="0 0 12 11"><g fill="#5a5a5a"><rect x=".5" y=".8" width="8" height="1.200"/><rect x=".5" y="3.500" width="2.500" height="2"/><rect x="3.500" y="3.500" width="2.500" height="2"/><rect x="6.500" y="3.500" width="2.500" height="2"/><rect x="9.500" y="3.500" width="2" height="2"/><rect x=".5" y="6" width="2.500" height="2"/><rect x="3.500" y="6" width="2.500" height="2"/><rect x="6.500" y="6" width="2.500" height="2"/><rect x=".5" y="8.500" width="2.500" height="2"/><rect x="3.500" y="8.500" width="2.500" height="2"/><rect x="6.500" y="8.500" width="2.500" height="2"/><rect x="9.500" y="6" width="2" height="4.500"/></g></svg>
<div class="t" style="font-size:8.61px;line-height:10.33px;color:#cbb9d6;font-weight:bold;left:1304.60px;top:29.13px;letter-spacing:0.002px;">2:56:32 PM</div>
<div style="left:793.25px;top:44.65px;width:30.40px;height:17.50px;border:1.650px solid #302e3a;background:#151516;border-radius:2px;"></div>
<div class="t" style="font-size:6.2px;line-height:7.44px;color:#e8a419;font-weight:bold;left:768.45px;width:80px;text-align:center;top:49.78px;">Intens</div>
<div style="left:793.25px;top:62.67px;width:30.40px;height:17.50px;border:1.650px solid #302e3a;background:#151516;border-radius:2px;"></div>
<div class="t" style="font-size:6.2px;line-height:7.44px;color:#3d3b4d;font-weight:bold;left:768.45px;width:80px;text-align:center;top:67.80px;">Focus</div>
<div style="left:793.25px;top:80.69px;width:30.40px;height:17.50px;border:1.650px solid #302e3a;background:#151516;border-radius:2px;"></div>
<div class="t" style="font-size:6.2px;line-height:7.44px;color:#e8a419;font-weight:bold;left:768.45px;width:80px;text-align:center;top:85.82px;">Color</div>
<div style="left:793.25px;top:98.71px;width:30.40px;height:17.50px;border:1.650px solid #302e3a;background:#151516;border-radius:2px;"></div>
<div class="t" style="font-size:6.2px;line-height:7.44px;color:#3d3b4d;font-weight:bold;left:768.45px;width:80px;text-align:center;top:103.84px;">Form</div>
<div style="left:793.25px;top:116.73px;width:30.40px;height:17.50px;border:1.650px solid #302e3a;background:#151516;border-radius:2px;"></div>
<div class="t" style="font-size:6.2px;line-height:7.44px;color:#3d3b4d;font-weight:bold;left:768.45px;width:80px;text-align:center;top:121.86px;">Image</div>
<div style="left:793.25px;top:134.75px;width:30.40px;height:17.50px;border:1.650px solid #302e3a;background:#151516;border-radius:2px;"></div>
<div class="t" style="font-size:6.2px;line-height:7.44px;color:#3d3b4d;font-weight:bold;left:768.45px;width:80px;text-align:center;top:139.88px;">Shutter</div>
<div style="left:793.25px;top:155.85px;width:30.40px;height:18.50px;border:1.650px solid #302e3a;background:#151516;border-radius:2px;"></div>
<svg style="left:804.95px;top:161.50px;" width="7" height="7.4" viewBox="0 0 7 7.4"><path d="M3.500.7L.8 3.500H2V6.600H5V3.500H6.200z" fill="none" stroke="#eee" stroke-width=".8" stroke-linejoin="round"/><path d="M2.800 5.300h1.400M2.800 6h1.400" stroke="#eee" stroke-width=".35"/></svg>
<div style="left:793.25px;top:175.15px;width:30.40px;height:18.60px;border:1.650px solid #302e3a;background:#151516;border-radius:2px;"></div>
<div class="t" style="font-size:5.9px;line-height:7.08px;color:#f0f0f0;font-weight:bold;left:768.45px;width:80px;text-align:center;top:181.01px;">AllNPs</div>
<div style="left:825.45px;top:45.95px;width:30.20px;height:12.40px;border:1.650px solid #302e3a;background:#151516;border-radius:2px;"></div>
<div class="t" style="font-size:5.85px;line-height:7.02px;color:#e8a419;font-weight:bold;left:800.55px;width:80px;text-align:center;top:48.74px;">Intensity</div>
<div style="left:825.45px;top:59.25px;width:30.20px;height:18.60px;border:1.650px solid #302e3a;background:#151516;border-radius:2px;"></div>
<svg style="left:837.05px;top:64.95px;" width="7" height="7.4" viewBox="0 0 7 7.4"><path d="M3.500.7L.8 3.500H2V6.600H5V3.500H6.200z" fill="none" stroke="#eee" stroke-width=".8" stroke-linejoin="round"/><path d="M2.800 5.300h1.400M2.800 6h1.400" stroke="#eee" stroke-width=".35"/></svg>
<div style="left:825.45px;top:78.65px;width:30.20px;height:18.60px;border:1.650px solid #302e3a;background:#151516;border-radius:2px;"></div>
<div class="t" style="font-size:7px;line-height:8.40px;color:#f0f0f0;font-weight:bold;left:800.55px;width:80px;text-align:center;top:83.85px;">-</div>
<div style="left:857.80px;top:46.30px;width:29.60px;height:146.30px;background:#151516;"></div>
<div style="left:857.45px;top:45.95px;width:30.30px;height:12.40px;border:1.650px solid #302e3a;background:#151516;border-radius:2px;"></div>
<div class="t" style="font-size:5.8px;line-height:6.96px;color:#f0f0f0;left:832.60px;width:80px;text-align:center;top:48.77px;">Intens</div>
<div class="t" style="font-size:6.3px;line-height:7.56px;color:#8e0d0d;left:857.60px;width:30px;text-align:center;top:61.72px;">60</div>
<div style="left:857.45px;top:71.95px;width:30.30px;height:12.30px;border:1.650px solid #302e3a;background:#151516;border-radius:2px;"></div>
<svg style="left:869.10px;top:74.50px;" width="7" height="7.4" viewBox="0 0 7 7.4"><path d="M3.500.7L.8 3.500H2V6.600H5V3.500H6.200z" fill="none" stroke="#eee" stroke-width=".8" stroke-linejoin="round"/><path d="M2.800 5.300h1.400M2.800 6h1.400" stroke="#eee" stroke-width=".35"/></svg>
<div style="left:857.45px;top:85.65px;width:30.30px;height:12.20px;border:1.650px solid #302e3a;background:#151516;border-radius:2px;"></div>
<div class="t" style="font-size:5.9px;line-height:7.08px;color:#f0f0f0;left:832.60px;width:80px;text-align:center;top:88.31px;">Max</div>
<div style="left:859.40px;top:100.00px;width:26.40px;height:78.60px;background:linear-gradient(90deg,rgba(0,0,0,.45) 0,rgba(0,0,0,0) 2.500px,rgba(0,0,0,0) calc(100% - 2.500px),rgba(0,0,0,.45) 100%),linear-gradient(180deg,#1a1a1a 0.00px,#1a1a1a 0.70px,#1e1e1e 1.30px,#222222 1.90px,#1a1a1a 2.40px,#1a1a1a 2.40px,#1a1a1a 3.10px,#212121 3.70px,#252525 8.50px,#1a1a1a 9.00px,#1a1a1a 9.00px,#1a1a1a 9.70px,#272727 10.30px,#2b2b2b 17.80px,#1a1a1a 18.30px,#1a1a1a 18.30px,#1a1a1a 19.00px,#2d2d2d 19.60px,#313131 27.70px,#1a1a1a 28.20px,#1a1a1a 28.20px,#1a1a1a 28.90px,#313131 29.50px,#353535 38.10px,#1a1a1a 38.60px,#1a1a1a 38.60px,#1a1a1a 39.30px,#313131 39.90px,#353535 48.50px,#1a1a1a 49.00px,#1a1a1a 49.00px,#1a1a1a 49.70px,#2d2d2d 50.30px,#313131 58.40px,#1a1a1a 58.90px,#1a1a1a 58.90px,#1a1a1a 59.60px,#272727 60.20px,#2b2b2b 67.70px,#1a1a1a 68.20px,#1a1a1a 68.20px,#1a1a1a 68.90px,#222222 69.50px,#262626 73.70px,#1a1a1a 74.20px,#1a1a1a 74.20px,#1a1a1a 74.90px,#1d1d1d 75.50px,#212121 78.10px,#1a1a1a 78.60px);"></div>
<div style="left:857.80px;top:136.40px;width:29.60px;height:4.60px;background:#202020;border:.95px solid #a4a4a4;border-radius:2.300px;"></div>
<div style="left:857.45px;top:179.95px;width:30.30px;height:13.00px;border:1.650px solid #302e3a;background:#151516;border-radius:2px;"></div>
<div class="t" style="font-size:5.9px;line-height:7.08px;color:#f0f0f0;left:832.60px;width:80px;text-align:center;top:183.01px;">Min</div>
<div style="left:890.65px;top:45.95px;width:30.60px;height:12.40px;border:1.650px solid #302e3a;background:#151516;border-radius:2px;"></div>
<div class="t" style="font-size:6.1px;line-height:7.32px;color:#e8a419;font-weight:bold;left:865.95px;width:80px;text-align:center;top:48.59px;">Color</div>
<div style="left:890.65px;top:59.15px;width:30.60px;height:18.80px;border:1.650px solid #302e3a;background:#151516;border-radius:2px;"></div>
<svg style="left:902.45px;top:64.95px;" width="7" height="7.4" viewBox="0 0 7 7.4"><path d="M3.500.7L.8 3.500H2V6.600H5V3.500H6.200z" fill="none" stroke="#eee" stroke-width=".8" stroke-linejoin="round"/><path d="M2.800 5.300h1.400M2.800 6h1.400" stroke="#eee" stroke-width=".35"/></svg>
<div style="left:890.65px;top:78.85px;width:30.60px;height:18.50px;border:1.650px solid #302e3a;background:#151516;border-radius:2px;"></div>
<div class="t" style="font-size:7px;line-height:8.40px;color:#f0f0f0;font-weight:bold;left:865.95px;width:80px;text-align:center;top:84.00px;">-</div>
<div style="left:890.65px;top:97.85px;width:30.60px;height:18.50px;border:1.650px solid #302e3a;background:#151516;border-radius:2px;"></div>
<div class="t" style="font-size:5.7px;line-height:6.84px;color:#f0f0f0;font-weight:bold;left:865.95px;width:80px;text-align:center;top:103.78px;">HS</div>
<div style="left:890.65px;top:117.25px;width:30.60px;height:18.50px;border:1.650px solid #302e3a;background:#151516;border-radius:2px;"></div>
<div class="t" style="font-size:5.7px;line-height:6.84px;color:#f0f0f0;font-weight:bold;left:865.95px;width:80px;text-align:center;top:123.18px;">XY</div>
<div style="left:890.65px;top:136.65px;width:30.60px;height:18.50px;border:1.650px solid #302e3a;background:#151516;border-radius:2px;"></div>
<div class="t" style="font-size:5.7px;line-height:6.84px;color:#f0f0f0;font-weight:bold;left:865.95px;width:80px;text-align:center;top:142.58px;">Gel</div>
<div style="left:922.75px;top:45.95px;width:134.00px;height:12.40px;border:1.650px solid #302e3a;background:#151516;border-radius:2px;"></div>
<div class="t" style="font-size:5.9px;line-height:7.08px;color:#f0f0f0;left:949.75px;width:80px;text-align:center;top:48.71px;">Color Picker</div>
<div style="left:1060.00px;top:46.30px;width:29.70px;height:146.30px;background:#151516;"></div>
<div style="left:1059.65px;top:45.95px;width:30.40px;height:12.40px;border:1.650px solid #302e3a;background:#151516;border-radius:2px;"></div>
<div class="t" style="font-size:5.8px;line-height:6.96px;color:#f0f0f0;left:1034.85px;width:80px;text-align:center;top:48.77px;">Red</div>
<div class="t" style="font-size:6.3px;line-height:7.56px;color:#8e0d0d;left:1059.85px;width:30px;text-align:center;top:61.72px;">10</div>
<div style="left:1059.65px;top:71.95px;width:30.40px;height:12.30px;border:1.650px solid #302e3a;background:#151516;border-radius:2px;"></div>
<svg style="left:1071.35px;top:74.50px;" width="7" height="7.4" viewBox="0 0 7 7.4"><path d="M3.500.7L.8 3.500H2V6.600H5V3.500H6.200z" fill="none" stroke="#eee" stroke-width=".8" stroke-linejoin="round"/><path d="M2.800 5.300h1.400M2.800 6h1.400" stroke="#eee" stroke-width=".35"/></svg>
<div style="left:1059.65px;top:85.65px;width:30.40px;height:12.20px;border:1.650px solid #302e3a;background:#151516;border-radius:2px;"></div>
<div class="t" style="font-size:5.9px;line-height:7.08px;color:#f0f0f0;left:1034.85px;width:80px;text-align:center;top:88.31px;">Max</div>
<div style="left:1061.60px;top:100.00px;width:26.50px;height:78.60px;background:linear-gradient(90deg,rgba(0,0,0,.45) 0,rgba(0,0,0,0) 2.500px,rgba(0,0,0,0) calc(100% - 2.500px),rgba(0,0,0,.45) 100%),linear-gradient(180deg,#1a1a1a 0.00px,#1a1a1a 0.70px,#1e1e1e 1.30px,#222222 1.90px,#1a1a1a 2.40px,#1a1a1a 2.40px,#1a1a1a 3.10px,#212121 3.70px,#252525 8.50px,#1a1a1a 9.00px,#1a1a1a 9.00px,#1a1a1a 9.70px,#272727 10.30px,#2b2b2b 17.80px,#1a1a1a 18.30px,#1a1a1a 18.30px,#1a1a1a 19.00px,#2d2d2d 19.60px,#313131 27.70px,#1a1a1a 28.20px,#1a1a1a 28.20px,#1a1a1a 28.90px,#313131 29.50px,#353535 38.10px,#1a1a1a 38.60px,#1a1a1a 38.60px,#1a1a1a 39.30px,#313131 39.90px,#353535 48.50px,#1a1a1a 49.00px,#1a1a1a 49.00px,#1a1a1a 49.70px,#2d2d2d 50.30px,#313131 58.40px,#1a1a1a 58.90px,#1a1a1a 58.90px,#1a1a1a 59.60px,#272727 60.20px,#2b2b2b 67.70px,#1a1a1a 68.20px,#1a1a1a 68.20px,#1a1a1a 68.90px,#222222 69.50px,#262626 73.70px,#1a1a1a 74.20px,#1a1a1a 74.20px,#1a1a1a 74.90px,#1d1d1d 75.50px,#212121 78.10px,#1a1a1a 78.60px);"></div>
<div style="left:1060.00px;top:136.40px;width:29.70px;height:4.60px;background:#202020;border:.95px solid #a4a4a4;border-radius:2.300px;"></div>
<div style="left:1059.65px;top:179.95px;width:30.40px;height:13.00px;border:1.650px solid #302e3a;background:#151516;border-radius:2px;"></div>
<div class="t" style="font-size:5.9px;line-height:7.08px;color:#f0f0f0;left:1034.85px;width:80px;text-align:center;top:183.01px;">Min</div>
<div style="left:1093.42px;top:46.30px;width:29.70px;height:146.30px;background:#151516;"></div>
<div style="left:1093.07px;top:45.95px;width:30.40px;height:12.40px;border:1.650px solid #302e3a;background:#151516;border-radius:2px;"></div>
<div class="t" style="font-size:5.8px;line-height:6.96px;color:#f0f0f0;left:1068.27px;width:80px;text-align:center;top:48.77px;">Green</div>
<div class="t" style="font-size:6.3px;line-height:7.56px;color:#8e0d0d;left:1093.27px;width:30px;text-align:center;top:61.72px;">100</div>
<div style="left:1093.07px;top:71.95px;width:30.40px;height:12.30px;border:1.650px solid #302e3a;background:#151516;border-radius:2px;"></div>
<svg style="left:1104.77px;top:74.50px;" width="7" height="7.4" viewBox="0 0 7 7.4"><path d="M3.500.7L.8 3.500H2V6.600H5V3.500H6.200z" fill="none" stroke="#eee" stroke-width=".8" stroke-linejoin="round"/><path d="M2.800 5.300h1.400M2.800 6h1.400" stroke="#eee" stroke-width=".35"/></svg>
<div style="left:1093.07px;top:85.65px;width:30.40px;height:12.20px;border:1.650px solid #302e3a;background:#151516;border-radius:2px;"></div>
<div class="t" style="font-size:5.9px;line-height:7.08px;color:#f0f0f0;left:1068.27px;width:80px;text-align:center;top:88.31px;">Max</div>
<div style="left:1095.02px;top:100.00px;width:26.50px;height:78.60px;background:linear-gradient(90deg,rgba(0,0,0,.45) 0,rgba(0,0,0,0) 2.500px,rgba(0,0,0,0) calc(100% - 2.500px),rgba(0,0,0,.45) 100%),linear-gradient(180deg,#1a1a1a 0.00px,#1a1a1a 0.70px,#1e1e1e 1.30px,#222222 1.90px,#1a1a1a 2.40px,#1a1a1a 2.40px,#1a1a1a 3.10px,#212121 3.70px,#252525 8.50px,#1a1a1a 9.00px,#1a1a1a 9.00px,#1a1a1a 9.70px,#272727 10.30px,#2b2b2b 17.80px,#1a1a1a 18.30px,#1a1a1a 18.30px,#1a1a1a 19.00px,#2d2d2d 19.60px,#313131 27.70px,#1a1a1a 28.20px,#1a1a1a 28.20px,#1a1a1a 28.90px,#313131 29.50px,#353535 38.10px,#1a1a1a 38.60px,#1a1a1a 38.60px,#1a1a1a 39.30px,#313131 39.90px,#353535 48.50px,#1a1a1a 49.00px,#1a1a1a 49.00px,#1a1a1a 49.70px,#2d2d2d 50.30px,#313131 58.40px,#1a1a1a 58.90px,#1a1a1a 58.90px,#1a1a1a 59.60px,#272727 60.20px,#2b2b2b 67.70px,#1a1a1a 68.20px,#1a1a1a 68.20px,#1a1a1a 68.90px,#222222 69.50px,#262626 73.70px,#1a1a1a 74.20px,#1a1a1a 74.20px,#1a1a1a 74.90px,#1d1d1d 75.50px,#212121 78.10px,#1a1a1a 78.60px);"></div>
<div style="left:1093.42px;top:136.40px;width:29.70px;height:4.60px;background:#202020;border:.95px solid #a4a4a4;border-radius:2.300px;"></div>
<div style="left:1093.07px;top:179.95px;width:30.40px;height:13.00px;border:1.650px solid #302e3a;background:#151516;border-radius:2px;"></div>
<div class="t" style="font-size:5.9px;line-height:7.08px;color:#f0f0f0;left:1068.27px;width:80px;text-align:center;top:183.01px;">Min</div>
<div style="left:1126.84px;top:46.30px;width:29.70px;height:146.30px;background:#151516;"></div>
<div style="left:1126.49px;top:45.95px;width:30.40px;height:12.40px;border:1.650px solid #302e3a;background:#151516;border-radius:2px;"></div>
<div class="t" style="font-size:5.8px;line-height:6.96px;color:#f0f0f0;left:1101.69px;width:80px;text-align:center;top:48.77px;">Blue</div>
<div class="t" style="font-size:6.3px;line-height:7.56px;color:#8e0d0d;left:1126.69px;width:30px;text-align:center;top:61.72px;">12</div>
<div style="left:1126.49px;top:71.95px;width:30.40px;height:12.30px;border:1.650px solid #302e3a;background:#151516;border-radius:2px;"></div>
<svg style="left:1138.19px;top:74.50px;" width="7" height="7.4" viewBox="0 0 7 7.4"><path d="M3.500.7L.8 3.500H2V6.600H5V3.500H6.200z" fill="none" stroke="#eee" stroke-width=".8" stroke-linejoin="round"/><path d="M2.800 5.300h1.400M2.800 6h1.400" stroke="#eee" stroke-width=".35"/></svg>
<div style="left:1126.49px;top:85.65px;width:30.40px;height:12.20px;border:1.650px solid #302e3a;background:#151516;border-radius:2px;"></div>
<div class="t" style="font-size:5.9px;line-height:7.08px;color:#f0f0f0;left:1101.69px;width:80px;text-align:center;top:88.31px;">Max</div>
<div style="left:1128.44px;top:100.00px;width:26.50px;height:78.60px;background:linear-gradient(90deg,rgba(0,0,0,.45) 0,rgba(0,0,0,0) 2.500px,rgba(0,0,0,0) calc(100% - 2.500px),rgba(0,0,0,.45) 100%),linear-gradient(180deg,#1a1a1a 0.00px,#1a1a1a 0.70px,#1e1e1e 1.30px,#222222 1.90px,#1a1a1a 2.40px,#1a1a1a 2.40px,#1a1a1a 3.10px,#212121 3.70px,#252525 8.50px,#1a1a1a 9.00px,#1a1a1a 9.00px,#1a1a1a 9.70px,#272727 10.30px,#2b2b2b 17.80px,#1a1a1a 18.30px,#1a1a1a 18.30px,#1a1a1a 19.00px,#2d2d2d 19.60px,#313131 27.70px,#1a1a1a 28.20px,#1a1a1a 28.20px,#1a1a1a 28.90px,#313131 29.50px,#353535 38.10px,#1a1a1a 38.60px,#1a1a1a 38.60px,#1a1a1a 39.30px,#313131 39.90px,#353535 48.50px,#1a1a1a 49.00px,#1a1a1a 49.00px,#1a1a1a 49.70px,#2d2d2d 50.30px,#313131 58.40px,#1a1a1a 58.90px,#1a1a1a 58.90px,#1a1a1a 59.60px,#272727 60.20px,#2b2b2b 67.70px,#1a1a1a 68.20px,#1a1a1a 68.20px,#1a1a1a 68.90px,#222222 69.50px,#262626 73.70px,#1a1a1a 74.20px,#1a1a1a 74.20px,#1a1a1a 74.90px,#1d1d1d 75.50px,#212121 78.10px,#1a1a1a 78.60px);"></div>
<div style="left:1126.84px;top:136.40px;width:29.70px;height:4.60px;background:#202020;border:.95px solid #a4a4a4;border-radius:2.300px;"></div>
<div style="left:1126.49px;top:179.95px;width:30.40px;height:13.00px;border:1.650px solid #302e3a;background:#151516;border-radius:2px;"></div>
<div class="t" style="font-size:5.9px;line-height:7.08px;color:#f0f0f0;left:1101.69px;width:80px;text-align:center;top:183.01px;">Min</div>
<div style="left:1160.26px;top:46.30px;width:29.70px;height:146.30px;background:#151516;"></div>
<div style="left:1159.91px;top:45.95px;width:30.40px;height:12.40px;border:1.650px solid #302e3a;background:#151516;border-radius:2px;"></div>
<div class="t" style="font-size:5.8px;line-height:6.96px;color:#f0f0f0;left:1135.11px;width:80px;text-align:center;top:48.77px;">Hue</div>
<div style="left:1159.91px;top:71.95px;width:30.40px;height:12.30px;border:1.650px solid #302e3a;background:#151516;border-radius:2px;"></div>
<svg style="left:1171.61px;top:74.50px;" width="7" height="7.4" viewBox="0 0 7 7.4"><path d="M3.500.7L.8 3.500H2V6.600H5V3.500H6.200z" fill="none" stroke="#eee" stroke-width=".8" stroke-linejoin="round"/><path d="M2.800 5.300h1.400M2.800 6h1.400" stroke="#eee" stroke-width=".35"/></svg>
<div style="left:1159.91px;top:85.65px;width:30.40px;height:12.20px;border:1.650px solid #302e3a;background:#151516;border-radius:2px;"></div>
<div class="t" style="font-size:5.9px;line-height:7.08px;color:#f0f0f0;left:1135.11px;width:80px;text-align:center;top:88.31px;">Max</div>
<div style="left:1161.86px;top:100.00px;width:26.50px;height:78.60px;background:linear-gradient(90deg,rgba(0,0,0,.45) 0,rgba(0,0,0,0) 2.500px,rgba(0,0,0,0) calc(100% - 2.500px),rgba(0,0,0,.45) 100%),linear-gradient(180deg,#1a1a1a 0.00px,#1a1a1a 0.70px,#1e1e1e 1.30px,#222222 1.90px,#1a1a1a 2.40px,#1a1a1a 2.40px,#1a1a1a 3.10px,#212121 3.70px,#252525 8.50px,#1a1a1a 9.00px,#1a1a1a 9.00px,#1a1a1a 9.70px,#272727 10.30px,#2b2b2b 17.80px,#1a1a1a 18.30px,#1a1a1a 18.30px,#1a1a1a 19.00px,#2d2d2d 19.60px,#313131 27.70px,#1a1a1a 28.20px,#1a1a1a 28.20px,#1a1a1a 28.90px,#313131 29.50px,#353535 38.10px,#1a1a1a 38.60px,#1a1a1a 38.60px,#1a1a1a 39.30px,#313131 39.90px,#353535 48.50px,#1a1a1a 49.00px,#1a1a1a 49.00px,#1a1a1a 49.70px,#2d2d2d 50.30px,#313131 58.40px,#1a1a1a 58.90px,#1a1a1a 58.90px,#1a1a1a 59.60px,#272727 60.20px,#2b2b2b 67.70px,#1a1a1a 68.20px,#1a1a1a 68.20px,#1a1a1a 68.90px,#222222 69.50px,#262626 73.70px,#1a1a1a 74.20px,#1a1a1a 74.20px,#1a1a1a 74.90px,#1d1d1d 75.50px,#212121 78.10px,#1a1a1a 78.60px);"></div>
<div style="left:1160.26px;top:136.40px;width:29.70px;height:4.60px;background:#202020;border:.95px solid #a4a4a4;border-radius:2.300px;"></div>
<div style="left:1159.91px;top:179.95px;width:30.40px;height:13.00px;border:1.650px solid #302e3a;background:#151516;border-radius:2px;"></div>
<div class="t" style="font-size:5.9px;line-height:7.08px;color:#f0f0f0;left:1135.11px;width:80px;text-align:center;top:183.01px;">Min</div>
<div style="left:1193.68px;top:46.30px;width:29.70px;height:146.30px;background:#151516;"></div>
<div style="left:1193.33px;top:45.95px;width:30.40px;height:12.40px;border:1.650px solid #302e3a;background:#151516;border-radius:2px;"></div>
<div class="t" style="font-size:5.3px;line-height:6.36px;color:#f0f0f0;left:1168.53px;width:80px;text-align:center;top:49.07px;">Saturation</div>
<div style="left:1193.33px;top:71.95px;width:30.40px;height:12.30px;border:1.650px solid #302e3a;background:#151516;border-radius:2px;"></div>
<svg style="left:1205.03px;top:74.50px;" width="7" height="7.4" viewBox="0 0 7 7.4"><path d="M3.500.7L.8 3.500H2V6.600H5V3.500H6.200z" fill="none" stroke="#eee" stroke-width=".8" stroke-linejoin="round"/><path d="M2.800 5.300h1.400M2.800 6h1.400" stroke="#eee" stroke-width=".35"/></svg>
<div style="left:1193.33px;top:85.65px;width:30.40px;height:12.20px;border:1.650px solid #302e3a;background:#151516;border-radius:2px;"></div>
<div class="t" style="font-size:5.9px;line-height:7.08px;color:#f0f0f0;left:1168.53px;width:80px;text-align:center;top:88.31px;">Max</div>
<div style="left:1195.28px;top:100.00px;width:26.50px;height:78.60px;background:linear-gradient(90deg,rgba(0,0,0,.45) 0,rgba(0,0,0,0) 2.500px,rgba(0,0,0,0) calc(100% - 2.500px),rgba(0,0,0,.45) 100%),linear-gradient(180deg,#1a1a1a 0.00px,#1a1a1a 0.70px,#1e1e1e 1.30px,#222222 1.90px,#1a1a1a 2.40px,#1a1a1a 2.40px,#1a1a1a 3.10px,#212121 3.70px,#252525 8.50px,#1a1a1a 9.00px,#1a1a1a 9.00px,#1a1a1a 9.70px,#272727 10.30px,#2b2b2b 17.80px,#1a1a1a 18.30px,#1a1a1a 18.30px,#1a1a1a 19.00px,#2d2d2d 19.60px,#313131 27.70px,#1a1a1a 28.20px,#1a1a1a 28.20px,#1a1a1a 28.90px,#313131 29.50px,#353535 38.10px,#1a1a1a 38.60px,#1a1a1a 38.60px,#1a1a1a 39.30px,#313131 39.90px,#353535 48.50px,#1a1a1a 49.00px,#1a1a1a 49.00px,#1a1a1a 49.70px,#2d2d2d 50.30px,#313131 58.40px,#1a1a1a 58.90px,#1a1a1a 58.90px,#1a1a1a 59.60px,#272727 60.20px,#2b2b2b 67.70px,#1a1a1a 68.20px,#1a1a1a 68.20px,#1a1a1a 68.90px,#222222 69.50px,#262626 73.70px,#1a1a1a 74.20px,#1a1a1a 74.20px,#1a1a1a 74.90px,#1d1d1d 75.50px,#212121 78.10px,#1a1a1a 78.60px);"></div>
<div style="left:1193.68px;top:136.40px;width:29.70px;height:4.60px;background:#202020;border:.95px solid #a4a4a4;border-radius:2.300px;"></div>
<div style="left:1193.33px;top:179.95px;width:30.40px;height:13.00px;border:1.650px solid #302e3a;background:#151516;border-radius:2px;"></div>
<div class="t" style="font-size:5.9px;line-height:7.08px;color:#f0f0f0;left:1168.53px;width:80px;text-align:center;top:183.01px;">Min</div>
<div style="left:923.20px;top:59.80px;width:133.10px;height:132.20px;background:linear-gradient(rgba(0,0,0,.77),rgba(0,0,0,.77)),radial-gradient(circle at 49.8px 82.2px,rgba(120,120,120,.9) 0,rgba(120,120,120,0) 45px),conic-gradient(from 0deg at 49.8px 82.2px,#a8ff00 0deg,#ffff00 33deg,#ff9000 68deg,#ff0000 98deg,#ff0070 124deg,#ff00f0 150deg,#9000ff 180deg,#2020ff 208deg,#0070ff 240deg,#00ffe0 282deg,#00ff70 308deg,#00ff00 332deg,#30ff00 348deg,#a8ff00 360deg);"></div>
<div style="left:923.20px;top:59.80px;width:133.10px;height:132.20px;background:radial-gradient(circle at 49.8px 82.2px,rgba(255,255,255,1) 0,rgba(255,255,255,.8) 5px,rgba(255,255,255,.36) 17px,rgba(255,255,255,.10) 32px,rgba(255,255,255,0) 46px),conic-gradient(from 0deg at 49.8px 82.2px,#a8ff00 0deg,#ffff00 33deg,#ff9000 68deg,#ff0000 98deg,#ff0070 124deg,#ff00f0 150deg,#9000ff 180deg,#2020ff 208deg,#0070ff 240deg,#00ffe0 282deg,#00ff70 308deg,#00ff00 332deg,#30ff00 348deg,#a8ff00 360deg);clip-path:path('M12.3 1.5 L8.8 2.5 L6.0 4.4 L2.9 11.5 L1.2 22.0 L0.5 34.5 L0.5 49.1 L1.0 63.7 L2.7 78.3 L6.0 93.0 L11.3 107.6 L18.6 120.1 L26.9 131.1 L114.7 90.5 L110.4 84.6 L93.7 67.9 L77.0 51.2 L60.3 34.9 L43.6 19.9 L31.1 9.9 L21.7 3.8 L16.5 1.9Z');"></div>
<svg style="left:0;top:0;" width="1358" height="764" viewBox="0 0 1358 764"><path d="M954.200 80.300L1032.200 145.700 941.300 173.100z" fill="none" stroke="#e8e8e8" stroke-width=".8" opacity=".9"/><path d="M960.800 59.8V192M923.2 95.500H1056.3" stroke="#c4c4c4" stroke-width="1"/><circle cx="960.800" cy="95.500" r="1.500" fill="#ddd" stroke="#777" stroke-width=".5"/></svg>
<div style="left:790.80px;top:680.40px;width:564.30px;height:82.00px;background:#141416;"></div>
<svg style="left:794.00px;top:684.50px;" width="8" height="8" viewBox="0 0 8 8"><circle cx="4" cy="4" r="2.600" fill="none" stroke="#c98a12" stroke-width="1.200" stroke-dasharray="1.300 .750"/><circle cx="4" cy="4" r="1.100" fill="none" stroke="#c98a12" stroke-width=".6"/></svg>
<svg style="left:0.00px;top:0.00px;" width="1358" height="764" viewBox="0 0 1358 764"><path d="M807 681L808.8 695.300H849.0L850.8 681" fill="#1a1a1e" stroke="#3a3946" stroke-width=".8"/></svg>
<div class="t" style="font-size:5.4px;line-height:6.48px;color:#aaa6b6;font-weight:bold;left:788.90px;width:80px;text-align:center;top:685.06px;">1 Live Table</div>
<svg style="left:0.00px;top:0.00px;" width="1358" height="764" viewBox="0 0 1358 764"><path d="M852.6 681L854.4 695.300H894.7L896.5 681" fill="#1a1a1e" stroke="#3a3946" stroke-width=".8"/></svg>
<div class="t" style="font-size:5.4px;line-height:6.48px;color:#aaa6b6;font-weight:bold;left:834.55px;width:80px;text-align:center;top:685.06px;">2 PSD List 1</div>
<svg style="left:0.00px;top:0.00px;" width="1358" height="764" viewBox="0 0 1358 764"><path d="M789.9 680.400H898.6L900.4 697H946.8000000000001L948.6 680.400H1356" fill="none" stroke="#b87c12" stroke-width="1"/><path d="M899.2 680.900L900.8000000000001 696.500H946.4L948.0 680.900z" fill="#121214"/></svg>
<div class="t" style="font-size:5.6px;line-height:6.72px;color:#e8a419;font-weight:bold;left:883.60px;width:80px;text-align:center;top:684.94px;">5 ML Controls</div>
<div class="t" style="font-size:8.5px;line-height:10.20px;color:#a99ab9;left:952.00px;width:10px;text-align:center;top:683.50px;">+</div>
<div class="t" style="font-size:6.15px;line-height:7.38px;color:#f2f2f2;left:1002.60px;width:140px;text-align:center;top:698.21px;letter-spacing:-0.027px;">2025 Curtain Movement Example</div>
<div class="t" style="font-size:5.48px;line-height:6.58px;color:#8a8a8a;left:1022.60px;width:100px;text-align:center;top:705.51px;letter-spacing:0.001px;">2024-11-08 08:59:04</div>
<svg style="left:1300.50px;top:700.50px;" width="11" height="10" viewBox="0 0 11 10"><path d="M5.500 1L10 9H1z" fill="none" stroke="#c8c8c8" stroke-width=".9"/></svg>
<svg style="left:1333.00px;top:699.50px;" width="11" height="11" viewBox="0 0 11 11"><rect x="1" y="5" width="7" height="5" fill="#ead0e4"/><path d="M6 5V2.800a1.800 1.800 0 0 1 3.600 0V4" fill="none" stroke="#ead0e4" stroke-width="1.100"/></svg>
<div style="left:792.00px;top:712.80px;width:31.20px;height:12.60px;border:.8px solid #34333f;background:#111113;"></div>
<svg style="left:803.50px;top:715.30px;" width="8" height="8" viewBox="0 0 8 8"><path d="M4 1L7 7H1z" fill="none" stroke="#eee" stroke-width="1.100"/></svg>
<div style="left:824.30px;top:712.80px;width:132.20px;height:12.60px;border:.8px solid #34333f;background:#111113;"></div>
<div style="left:848.80px;top:713.60px;width:84.00px;height:11.40px;background:radial-gradient(ellipse 40px 11.500px at 50% 100%,rgba(200,24,24,.9) 0,rgba(200,24,24,.55) 45%,rgba(200,24,24,0) 100%);"></div>
<div class="t" style="font-size:4.7px;line-height:5.64px;color:#eee;left:870.80px;width:40px;text-align:center;top:713.58px;">Red</div>
<div class="t" style="font-size:4.5px;line-height:5.40px;color:#e05050;left:870.80px;width:40px;text-align:center;top:718.90px;">9.889 %</div>
<div style="left:957.30px;top:712.80px;width:132.20px;height:12.60px;border:.8px solid #34333f;background:#111113;"></div>
<div style="left:981.30px;top:713.60px;width:84.00px;height:11.40px;background:radial-gradient(ellipse 40px 11.500px at 50% 100%,rgba(24,170,44,.9) 0,rgba(24,170,44,.55) 45%,rgba(24,170,44,0) 100%);"></div>
<div class="t" style="font-size:4.7px;line-height:5.64px;color:#eee;left:1003.30px;width:40px;text-align:center;top:713.58px;">Green</div>
<div class="t" style="font-size:4.5px;line-height:5.40px;color:#58d868;left:1003.30px;width:40px;text-align:center;top:718.90px;">100.0 %</div>
<div style="left:1090.30px;top:712.80px;width:132.20px;height:12.60px;border:.8px solid #34333f;background:#111113;"></div>
<div style="left:1114.30px;top:713.60px;width:84.00px;height:11.40px;background:radial-gradient(ellipse 40px 11.500px at 50% 100%,rgba(44,44,210,.9) 0,rgba(44,44,210,.55) 45%,rgba(44,44,210,0) 100%);"></div>
<div class="t" style="font-size:4.7px;line-height:5.64px;color:#eee;left:1136.30px;width:40px;text-align:center;top:713.58px;">Blue</div>
<div class="t" style="font-size:4.5px;line-height:5.40px;color:#7878e8;left:1136.30px;width:40px;text-align:center;top:718.90px;">11.88 %</div>
<div style="left:1223.30px;top:712.80px;width:131.00px;height:12.60px;border:.8px solid #34333f;background:#111113;"></div>
<div style="left:836.00px;top:715.20px;width:7.40px;height:7.40px;background:#19e619;border-radius:1px;"></div>
<div style="left:792.00px;top:728.00px;width:514.50px;height:11.40px;border:1px solid #8a6210;background:#050505;border-radius:1.500px;"></div>
<div class="t" style="font-size:6.97px;line-height:8.36px;color:#e8a419;left:795.20px;top:729.62px;white-space:pre;letter-spacing:-0.001px;">LIVE: Cue  1001 :</div>
<div class="t" style="font-size:6.98px;line-height:8.38px;color:#ecdfba;left:853.80px;top:729.61px;letter-spacing:-0.001px;">Chan 2</div>
<svg style="left:878.30px;top:731.30px;" width="5" height="5" viewBox="0 0 5 5"><path d="M2.500 0L5 2.500 2.500 5 0 2.500z" fill="#e8a419"/></svg>
<svg style="left:1297.00px;top:730.50px;" width="7" height="7" viewBox="0 0 7 7"><circle cx="2.800" cy="2.800" r="2" stroke="#ccc" stroke-width=".7" fill="none"/><path d="M4.200 4.200L6.200 6.200" stroke="#ccc" stroke-width=".8"/></svg>
<div style="left:1309.80px;top:728.00px;width:44.60px;height:11.40px;border:1px solid #8a6210;background:#111113;border-radius:1.500px;"></div>
<div class="t" style="font-size:5.1px;line-height:6.12px;color:#c98a12;font-weight:bold;left:1307.10px;width:50px;text-align:center;top:730.84px;">User 1 | Offline</div>
<div style="left:792.00px;top:742.30px;width:31.20px;height:19.20px;border:.9px solid #3a3946;background:#111113;border-radius:1px;"></div>
<div style="left:824.90px;top:742.30px;width:32.40px;height:19.20px;border:.9px solid #3a3946;background:#111113;border-radius:1px;"></div>
<div class="t" style="font-size:5.4px;line-height:6.48px;color:#f0f0f0;left:821.10px;width:40px;text-align:center;top:748.76px;">Intensity</div>
<div style="left:859.25px;top:742.30px;width:32.40px;height:19.20px;border:.9px solid #3a3946;background:#111113;border-radius:1px;"></div>
<div class="t" style="font-size:5.4px;line-height:6.48px;color:#f0f0f0;left:855.45px;width:40px;text-align:center;top:748.76px;">Focus</div>
<div style="left:893.60px;top:742.30px;width:32.40px;height:19.20px;border:.9px solid #3a3946;background:#111113;border-radius:1px;"></div>
<div class="t" style="font-size:5.4px;line-height:6.48px;color:#f0f0f0;left:889.80px;width:40px;text-align:center;top:748.76px;">Color</div>
<div style="left:927.95px;top:742.30px;width:32.40px;height:19.20px;border:.9px solid #3a3946;background:#111113;border-radius:1px;"></div>
<div class="t" style="font-size:5.4px;line-height:6.48px;color:#f0f0f0;left:924.15px;width:40px;text-align:center;top:748.76px;">Form</div>
<div style="left:962.30px;top:742.30px;width:32.40px;height:19.20px;border:.9px solid #3a3946;background:#111113;border-radius:1px;"></div>
<div class="t" style="font-size:5.4px;line-height:6.48px;color:#f0f0f0;left:958.50px;width:40px;text-align:center;top:748.76px;">Image</div>
<div style="left:996.65px;top:742.30px;width:32.40px;height:19.20px;border:.9px solid #3a3946;background:#111113;border-radius:1px;"></div>
<div class="t" style="font-size:5.4px;line-height:6.48px;color:#f0f0f0;left:992.85px;width:40px;text-align:center;top:748.76px;">Shutter</div>
<div style="left:1045.40px;top:742.30px;width:56.20px;height:19.20px;border:.9px solid #0c3014;background:#020202;border-radius:1px;"></div>
<div style="left:1045.90px;top:743.20px;width:1.70px;height:17.40px;background:#126026;"></div>
<div style="left:1050.30px;top:743.20px;width:1.70px;height:17.40px;background:#126026;"></div>
<div class="t" style="font-size:5.2px;line-height:6.24px;color:#a8a8a8;left:1070.00px;width:30px;text-align:right;top:743.08px;">CL 1</div>
<div style="left:1078.00px;top:754.30px;width:21.60px;height:5.80px;background:#484848;border-radius:1.500px;"></div>
<div class="t" style="font-size:5.2px;line-height:6.24px;color:#a0a0a0;left:1076.80px;width:24px;text-align:center;top:754.18px;">1001</div>
<div style="left:1116.80px;top:742.30px;width:32.20px;height:19.20px;border:.9px solid #3a3946;background:#111113;border-radius:1px;"></div>
<div class="t" style="font-size:4.9px;line-height:5.88px;color:#8e8e8e;left:1112.90px;width:40px;text-align:center;top:743.86px;">Query</div>
<div class="t" style="font-size:5.1px;line-height:6.12px;color:#f2f2f2;left:1112.90px;width:40px;text-align:center;top:752.34px;">Make Man</div>
<div class="t" style="font-size:3.6px;line-height:4.32px;color:#aaa;left:1139.60px;width:8px;text-align:right;top:756.64px;">1</div>
<div style="left:1151.08px;top:742.30px;width:32.20px;height:19.20px;border:.9px solid #3a3946;background:#111113;border-radius:1px;"></div>
<div class="t" style="font-size:4.9px;line-height:5.88px;color:#8e8e8e;left:1147.18px;width:40px;text-align:center;top:743.86px;">Fan</div>
<div class="t" style="font-size:5.1px;line-height:6.12px;color:#f2f2f2;left:1147.18px;width:40px;text-align:center;top:752.34px;">Make Abs</div>
<div class="t" style="font-size:3.6px;line-height:4.32px;color:#aaa;left:1173.88px;width:8px;text-align:right;top:756.64px;">2</div>
<div style="left:1185.36px;top:742.30px;width:32.20px;height:19.20px;border:.9px solid #3a3946;background:#111113;border-radius:1px;"></div>
<div class="t" style="font-size:4.9px;line-height:5.88px;color:#8e8e8e;left:1181.46px;width:40px;text-align:center;top:743.86px;">Assert</div>
<div class="t" style="font-size:5.1px;line-height:6.12px;color:#f2f2f2;left:1181.46px;width:40px;text-align:center;top:752.34px;">Flash</div>
<div class="t" style="font-size:3.6px;line-height:4.32px;color:#aaa;left:1208.16px;width:8px;text-align:right;top:756.64px;">3</div>
<div style="left:1219.64px;top:742.30px;width:32.20px;height:19.20px;border:.9px solid #3a3946;background:#111113;border-radius:1px;"></div>
<div class="t" style="font-size:4.9px;line-height:5.88px;color:#8e8e8e;left:1215.74px;width:40px;text-align:center;top:743.86px;">Highlight</div>
<div class="t" style="font-size:5.1px;line-height:6.12px;color:#f2f2f2;left:1215.74px;width:40px;text-align:center;top:752.34px;">Cell</div>
<div class="t" style="font-size:3.6px;line-height:4.32px;color:#aaa;left:1242.44px;width:8px;text-align:right;top:756.64px;">4</div>
<div style="left:1253.92px;top:742.30px;width:32.20px;height:19.20px;border:.9px solid #3a3946;background:#111113;border-radius:1px;"></div>
<div class="t" style="font-size:4.9px;line-height:5.88px;color:#8e8e8e;left:1250.02px;width:40px;text-align:center;top:743.86px;">Color Path</div>
<div class="t" style="font-size:5.1px;line-height:6.12px;color:#f2f2f2;left:1250.02px;width:40px;text-align:center;top:752.34px;">Offset</div>
<div class="t" style="font-size:3.6px;line-height:4.32px;color:#aaa;left:1276.72px;width:8px;text-align:right;top:756.64px;">5</div>
<div style="left:1288.20px;top:742.30px;width:32.20px;height:19.20px;border:.9px solid #3a3946;background:#111113;border-radius:1px;"></div>
<div class="t" style="font-size:4.9px;line-height:5.88px;color:#8e8e8e;left:1284.30px;width:40px;text-align:center;top:743.86px;">Make Null</div>
<div class="t" style="font-size:5.1px;line-height:6.12px;color:#f2f2f2;left:1284.30px;width:40px;text-align:center;top:752.34px;">Mark</div>
<div class="t" style="font-size:3.6px;line-height:4.32px;color:#aaa;left:1311.00px;width:8px;text-align:right;top:756.64px;">6</div>
<div style="left:1322.48px;top:742.30px;width:32.20px;height:19.20px;border:.9px solid #3a3946;background:#111113;border-radius:1px;"></div>
<div class="t" style="font-size:5.1px;line-height:6.12px;color:#f2f2f2;left:1318.58px;width:40px;text-align:center;top:752.34px;">More SK</div>
<div style="left:1337.00px;top:744.60px;width:3.60px;height:3.60px;background:#6be01e;border-radius:50%;"></div>
</div>
</body></html>
